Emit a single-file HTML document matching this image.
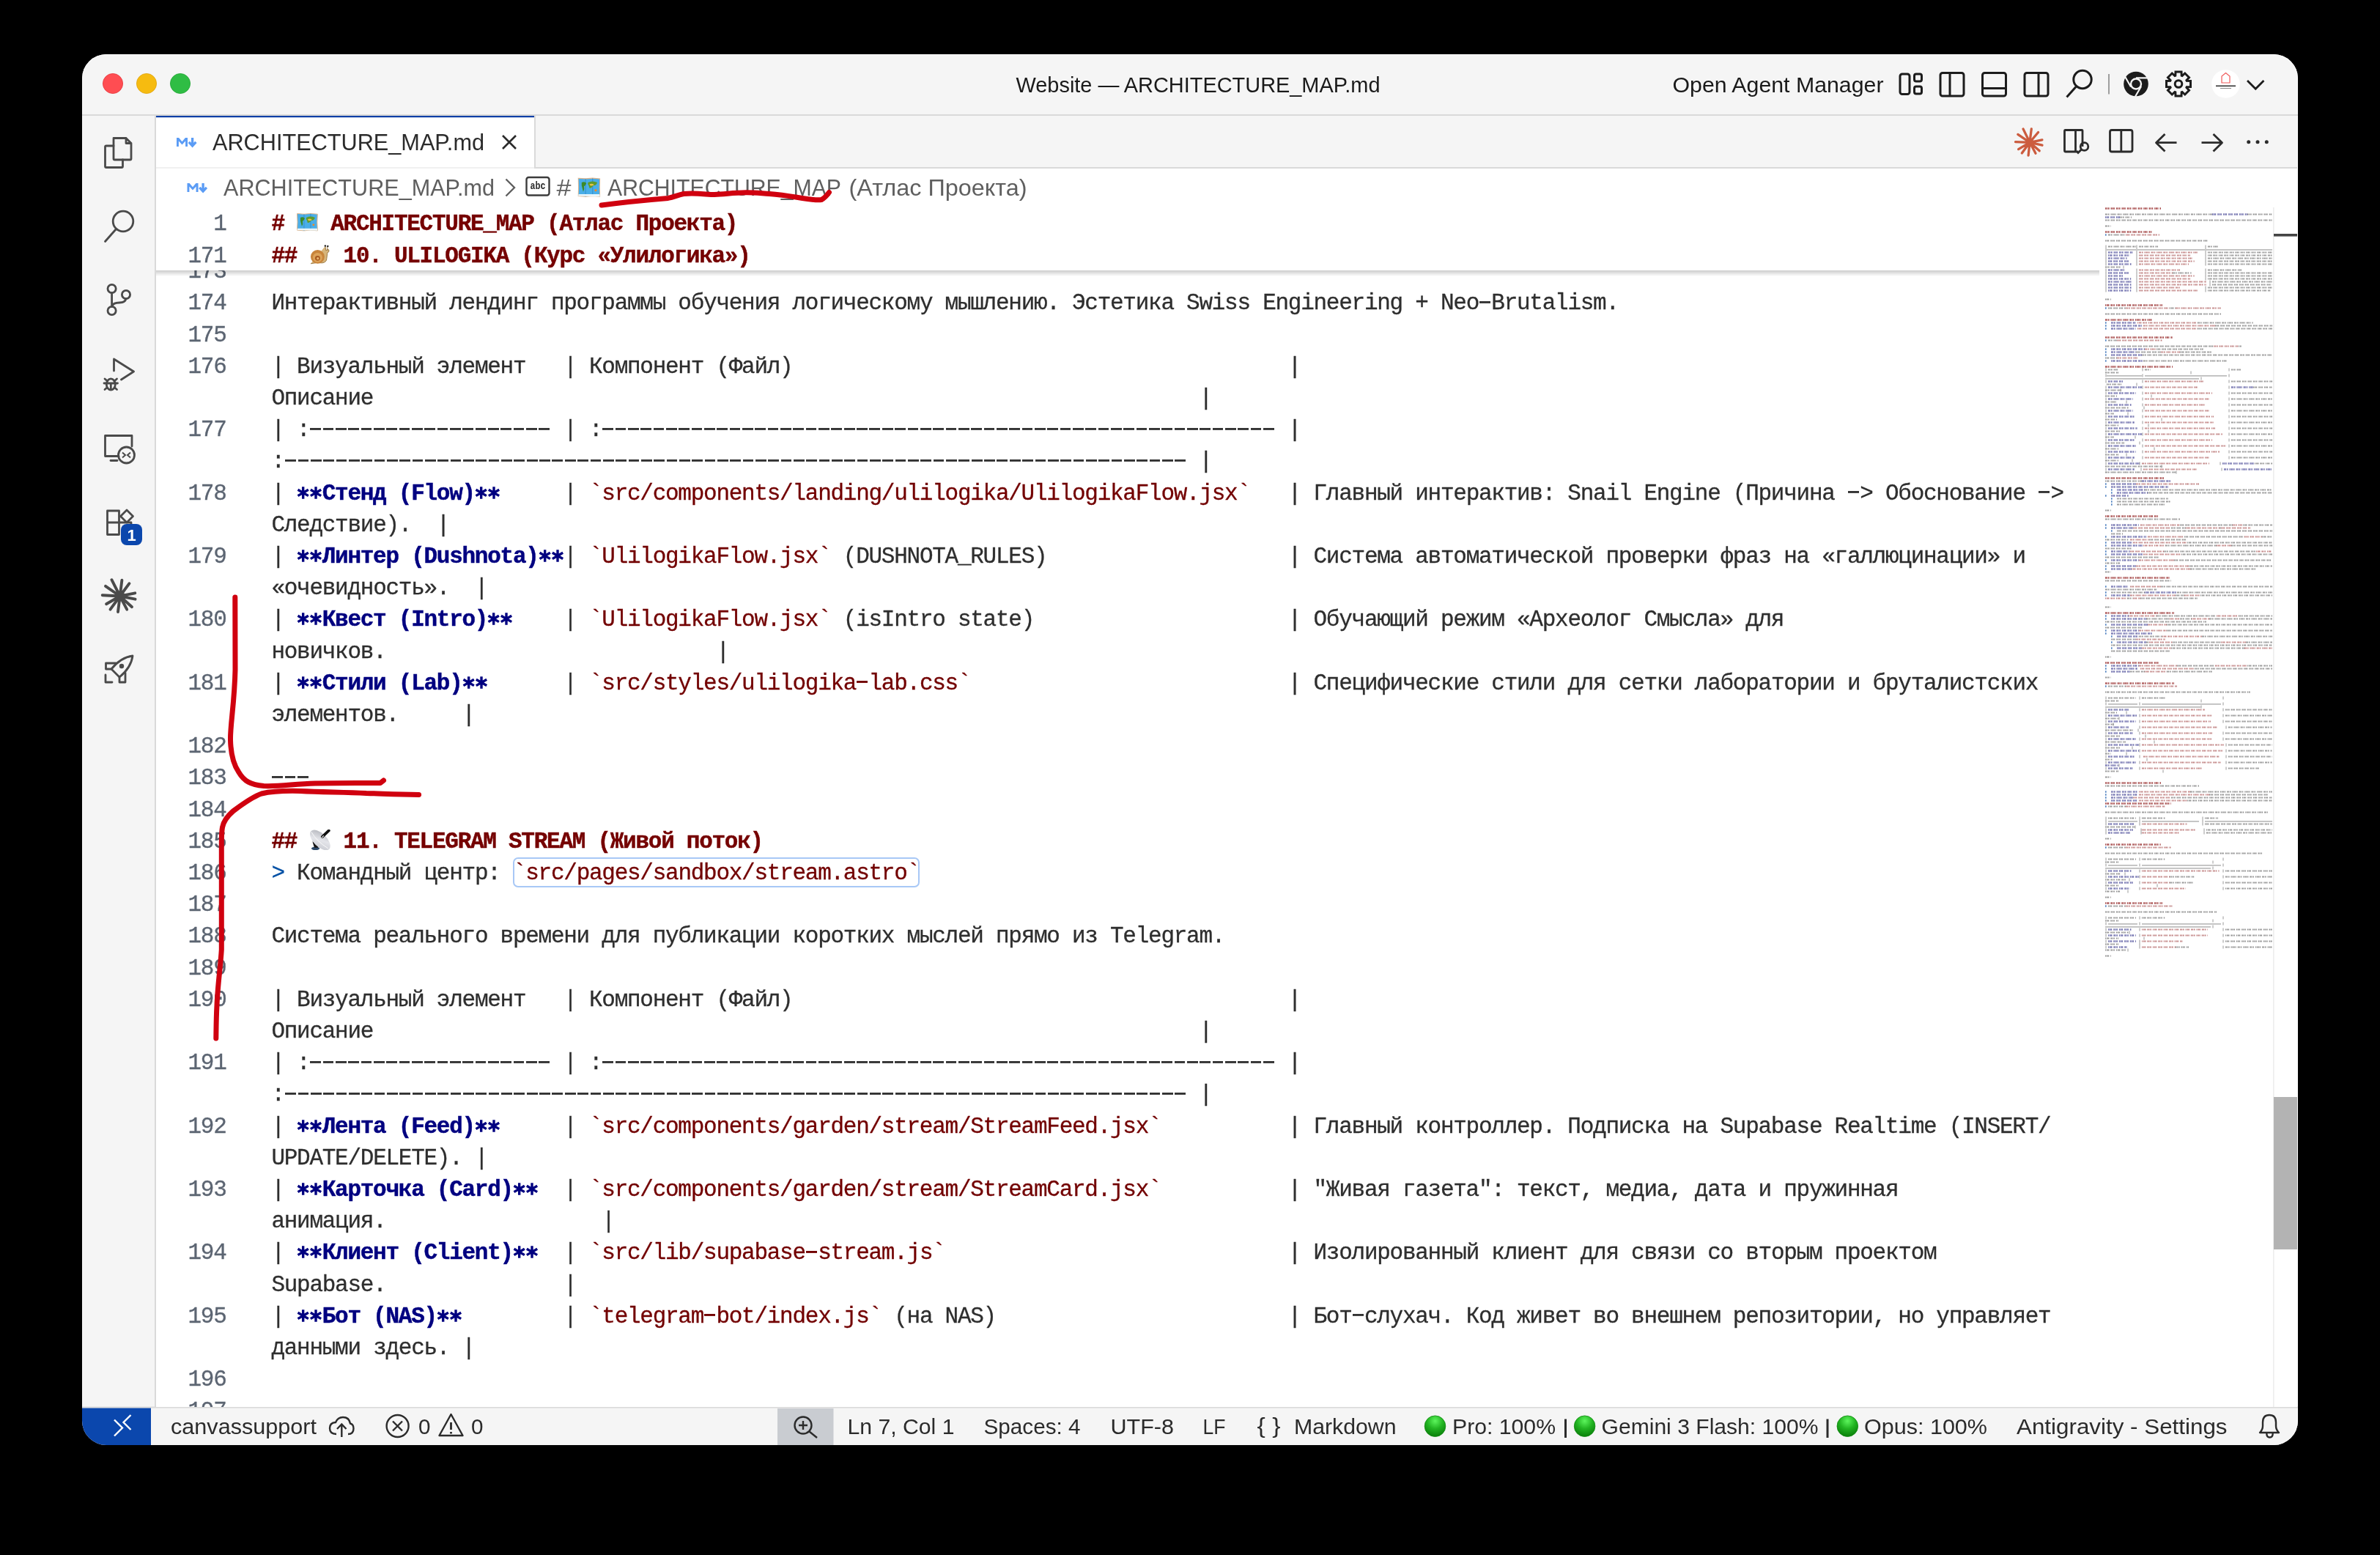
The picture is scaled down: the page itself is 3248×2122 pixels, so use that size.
<!DOCTYPE html>
<html><head><meta charset="utf-8"><style>
*{box-sizing:border-box;margin:0;padding:0}
html,body{width:3248px;height:2122px;overflow:hidden;background:#000}
.abs{position:absolute}
#win{position:absolute;left:112px;top:74px;width:3024px;height:1898px;border-radius:33px;overflow:hidden;background:#f8f8f8}
.sans{font-family:"Liberation Sans",sans-serif}
.mono{font-family:"Liberation Mono",monospace}
#page{position:absolute;left:-112px;top:-74px;width:3248px;height:2122px}
.ln{position:absolute;left:200px;width:108.5px;text-align:right;height:43.2px;line-height:43.2px;font-family:"Liberation Mono",monospace;font-size:31px;letter-spacing:-1.26px;color:#5c6572;white-space:pre;-webkit-text-stroke:0.3px currentColor}
.tx{position:absolute;left:370.4px;height:43.2px;line-height:43.2px;font-family:"Liberation Mono",monospace;font-size:31px;letter-spacing:-1.26px;color:#2e2e2e;white-space:pre;-webkit-text-stroke:0.3px currentColor}
.bd{color:#000080;font-weight:bold;-webkit-text-stroke:0.45px #000080}
.hd{color:#750000;font-weight:bold;-webkit-text-stroke:0.45px #750000}
.cd{color:#720000}
.qt{color:#0451a5}
.emo{display:inline-block;width:28.8px;height:43.2px;vertical-align:top;padding-top:5px}
.cbox{}
.dash{color:transparent;-webkit-text-stroke:0;background:repeating-linear-gradient(90deg,transparent 0 1.3px,#333 1.3px 16px,transparent 16px 17.3426px) 0 14.6px/100% 2.9px no-repeat}
.dc{background:repeating-linear-gradient(90deg,transparent 0 1.3px,#720000 1.3px 16px,transparent 16px 17.3426px) 0 14.6px/100% 2.9px no-repeat}
</style></head><body>
<svg width="0" height="0" style="position:absolute"><defs><radialGradient id="gg" cx="0.5" cy="0.25" r="0.75"><stop offset="0" stop-color="#5cf55c"/><stop offset="0.5" stop-color="#22b422"/><stop offset="1" stop-color="#0a7f0a"/></radialGradient></defs></svg>
<div id="win"><div id="page">
<svg class="abs" style="left:0;top:0;will-change:transform" width="3248" height="2122"><rect x="112" y="74" width="3024" height="82" fill="#f5f5f5"/>
<rect x="112" y="156" width="3024" height="2" fill="#d9d9d9"/>
<circle cx="154" cy="114" r="13.6" fill="#ff4d52" stroke="#e5343a" stroke-width="0.8"/>
<circle cx="200" cy="114" r="13.6" fill="#f6bb10" stroke="#dea20b" stroke-width="0.8"/>
<circle cx="246" cy="114" r="13.6" fill="#2fbd44" stroke="#1ea531" stroke-width="0.8"/>
<text x="1386.5" y="126.0" font-size="29.5" fill="#1a1a1a" font-weight="normal" text-anchor="start" font-family="Liberation Sans" textLength="497.0" lengthAdjust="spacingAndGlyphs">Website — ARCHITECTURE_MAP.md</text>
<text x="2282.5" y="126.0" font-size="29.5" fill="#1a1a1a" font-weight="normal" text-anchor="start" font-family="Liberation Sans" textLength="288.0" lengthAdjust="spacingAndGlyphs">Open Agent Manager</text>
<rect x="2593" y="101" width="13" height="27.5" rx="3" fill="none" stroke="#1c1c1c" stroke-width="3"/>
<rect x="2612.5" y="101" width="10" height="10" rx="2.5" fill="none" stroke="#1c1c1c" stroke-width="3"/>
<rect x="2612.5" y="118" width="10" height="10" rx="2.5" fill="none" stroke="#1c1c1c" stroke-width="3"/>
<rect x="2648" y="99.5" width="32" height="31.5" rx="3" fill="none" stroke="#1c1c1c" stroke-width="3"/>
<line x1="2661" y1="99.5" x2="2661" y2="131" fill="none" stroke="#1c1c1c" stroke-width="3"/>
<rect x="2705.5" y="99.5" width="32" height="31.5" rx="3" fill="none" stroke="#1c1c1c" stroke-width="3"/>
<line x1="2705.5" y1="120.5" x2="2737.5" y2="120.5" fill="none" stroke="#1c1c1c" stroke-width="3"/>
<rect x="2763" y="99.5" width="32" height="31.5" rx="3" fill="none" stroke="#1c1c1c" stroke-width="3"/>
<line x1="2782" y1="99.5" x2="2782" y2="131" fill="none" stroke="#1c1c1c" stroke-width="3"/>
<circle cx="2842" cy="108.5" r="12.2" fill="none" stroke="#1c1c1c" stroke-width="3"/>
<line x1="2833" y1="118.5" x2="2820.5" y2="132.5" fill="none" stroke="#1c1c1c" stroke-width="3"/>
<rect x="2877" y="101" width="2" height="27.5" fill="#9e9e9e"/>
<circle cx="2915" cy="114.5" r="16.8" fill="#1c1c1c"/>
<circle cx="2915" cy="114.5" r="8.2" fill="#f5f5f5"/>
<circle cx="2915" cy="114.5" r="5.8" fill="#1c1c1c"/>
<path d="M2915 106.3 L2930.5 106.3 M2908 118.5 L2900 104.5 M2922 118 L2914 131.8" stroke="#f5f5f5" stroke-width="2.2" fill="none"/>
<polygon points="2989.5,110.5 2989.5,118.5 2984.2,118.7 2983.9,119.5 2987.5,123.3 2981.8,129.0 2978.0,125.4 2977.2,125.7 2977.0,131.0 2969.0,131.0 2968.8,125.7 2968.0,125.4 2964.2,129.0 2958.5,123.3 2962.1,119.5 2961.8,118.7 2956.5,118.5 2956.5,110.5 2961.8,110.3 2962.1,109.5 2958.5,105.7 2964.2,100.0 2968.0,103.6 2968.8,103.3 2969.0,98.0 2977.0,98.0 2977.2,103.3 2978.0,103.6 2981.8,100.0 2987.5,105.7 2983.9,109.5 2984.2,110.3" fill="none" stroke="#1c1c1c" stroke-width="3" stroke-linejoin="miter"/>
<circle cx="2973" cy="114.5" r="4.8" fill="none" stroke="#1c1c1c" stroke-width="3"/>
<circle cx="3037.5" cy="114.5" r="19.3" fill="#ffffff"/>
<path d="M3032 113 L3032 104 L3037.5 99.5 L3043 104 L3043 113 Z" fill="none" stroke="#f05a5a" stroke-width="1.2"/>
<rect x="3024" y="116.5" width="27" height="1.6" fill="#333"/><rect x="3030" y="120" width="15" height="1" fill="#888"/>
<path d="M3067 110 L3078.2 121.2 L3089.4 110" fill="none" stroke="#1c1c1c" stroke-width="2.8"/>
<rect x="112" y="158" width="99" height="1763" fill="#f5f5f5"/>
<rect x="211" y="158" width="2" height="1763" fill="#d9d9d9"/>
<path d="M155 199 L145 199 Q143.5 199 143.5 200.5 L143.5 227 Q143.5 228.5 145 228.5 L166 228.5 Q167.5 228.5 167.5 227 L167.5 218" fill="none" stroke="#4a4a4a" stroke-width="2.8" stroke-linejoin="round" stroke-linecap="round"/>
<path d="M155 188.5 L172 188.5 L179 195.5 L179 216.5 Q179 218 177.5 218 L156.5 218 Q155 218 155 216.5 L155 190 Q155 188.5 156.5 188.5 Z M172 188.5 L172 195.5 L179 195.5" fill="none" stroke="#4a4a4a" stroke-width="2.8" stroke-linejoin="round" stroke-linecap="round"/>
<circle cx="168" cy="302" r="13.8" fill="none" stroke="#4a4a4a" stroke-width="2.8" stroke-linejoin="round" stroke-linecap="round"/>
<line x1="158.5" y1="312.5" x2="143.5" y2="329.5" fill="none" stroke="#4a4a4a" stroke-width="2.8" stroke-linejoin="round" stroke-linecap="round"/>
<circle cx="152.6" cy="394" r="5.6" fill="none" stroke="#4a4a4a" stroke-width="2.8" stroke-linejoin="round" stroke-linecap="round"/><circle cx="172" cy="402" r="5.6" fill="none" stroke="#4a4a4a" stroke-width="2.8" stroke-linejoin="round" stroke-linecap="round"/><circle cx="152.6" cy="424" r="5.6" fill="none" stroke="#4a4a4a" stroke-width="2.8" stroke-linejoin="round" stroke-linecap="round"/>
<path d="M152.6 399.6 L152.6 418.4 M172 407.6 Q171 413 163 413 Q154 413 153 418" fill="none" stroke="#4a4a4a" stroke-width="2.8" stroke-linejoin="round" stroke-linecap="round"/>
<path d="M155.5 506 L155.5 490 L182.5 507 L165.5 518" fill="none" stroke="#4a4a4a" stroke-width="2.8" stroke-linejoin="round" stroke-linecap="round"/>
<path d="M143 517 L146.5 520 M159.5 517 L156 520 M142 523 L160.5 523 M143 531.5 L146 529 M159.5 531.5 L156.5 529 M151.3 523 L151.3 531" fill="none" stroke="#4a4a4a" stroke-width="2.8" stroke-linejoin="round" stroke-linecap="round"/>
<ellipse cx="151.3" cy="524.5" rx="6" ry="7.6" fill="none" stroke="#4a4a4a" stroke-width="2.8" stroke-linejoin="round" stroke-linecap="round"/>
<path d="M162 622.5 L143.5 622.5 L143.5 594.5 L180 594.5 L180 609" fill="none" stroke="#4a4a4a" stroke-width="2.8" stroke-linejoin="round" stroke-linecap="round"/>
<line x1="151" y1="628.5" x2="160" y2="628.5" fill="none" stroke="#4a4a4a" stroke-width="2.8" stroke-linejoin="round" stroke-linecap="round"/>
<circle cx="172.5" cy="621" r="11" fill="none" stroke="#4a4a4a" stroke-width="2.8" stroke-linejoin="round" stroke-linecap="round"/>
<path d="M167 617.5 L171 621 L167 624.5 M178 617.5 L174 621 L178 624.5" fill="none" stroke="#4a4a4a" stroke-width="2"/>
<path d="M146.5 697 L162.5 697 L162.5 729.5 L146.5 729.5 Z M146.5 713 L179 713 M162.5 713 L179 713 L179 720" fill="none" stroke="#4a4a4a" stroke-width="2.8" stroke-linejoin="round" stroke-linecap="round"/>
<path d="M173 696 L181.5 704.5 L173 713 L164.5 704.5 Z" fill="none" stroke="#4a4a4a" stroke-width="2.8" stroke-linejoin="round" stroke-linecap="round"/>
<rect x="165" y="715" width="29" height="29" rx="8" fill="#0b47ad"/>
<text x="179.5" y="738.0" font-size="22.0" fill="#ffffff" font-weight="bold" text-anchor="middle" font-family="Liberation Sans">1</text>
<path d="M163.7 813.5 L152.4 791.2 M163.7 813.5 L166.4 791.7 M163.7 813.5 L176.5 796.2 M163.7 813.5 L184.3 809.3 M163.7 813.5 L184.6 817.7 M163.7 813.5 L180.0 828.2 M163.7 813.5 L173.2 831.7 M163.7 813.5 L161.0 835.1 M163.7 813.5 L150.5 831.7 M163.7 813.5 L145.1 824.2 M163.7 813.5 L139.7 812.2 M163.7 813.5 L144.0 799.8" fill="none" stroke="#4a4a4a" stroke-width="3.9" stroke-linecap="round"/>
<circle cx="163.7" cy="813.5" r="7" fill="#4a4a4a"/>
<path d="M181 895 Q165 897 152 913 L163 924 Q179 911 181 895 Z" fill="none" stroke="#4a4a4a" stroke-width="2.8" stroke-linejoin="round" stroke-linecap="round"/>
<path d="M152 913 L144.5 913 L144.5 905 L158 905 M163 924 L163 931 L171 931 L171 918" fill="none" stroke="#4a4a4a" stroke-width="2.8" stroke-linejoin="round" stroke-linecap="round"/>
<path d="M144 921 L144 931 L153 931" fill="none" stroke="#4a4a4a" stroke-width="2.8" stroke-linejoin="round" stroke-linecap="round"/>
<circle cx="166" cy="909" r="3.2" fill="#4a4a4a"/>
<rect x="213" y="158" width="2922" height="70" fill="#f5f5f5"/>
<rect x="213" y="228" width="2922" height="2" fill="#d9d9d9"/>
<rect x="213" y="158" width="516" height="72" fill="#ffffff"/>
<rect x="213" y="158" width="516" height="2.2" fill="#0b3fa6"/>
<rect x="213" y="228" width="516" height="2" fill="#f0f0f0"/>
<rect x="729" y="158" width="2" height="72" fill="#dadada"/>
<path d="M241.0 200.0 L241.0 188.0 L244.1 188.0 L248.5 193.3 L252.9 188.0 L256.0 188.0 L256.0 200.0 L253.1 200.0 L253.1 192.6 L248.5 197.6 L243.9 192.6 L243.9 200.0 Z" fill="#5b9cf5"/><path d="M262.6 188.0 L262.6 197.6 M257.8 193.8 L262.6 199.0 L267.4 193.8" stroke="#5b9cf5" stroke-width="3.3" fill="none"/>
<text x="290.0" y="205.0" font-size="30.5" fill="#2b2b2b" font-weight="normal" text-anchor="start" font-family="Liberation Sans" textLength="371.0" lengthAdjust="spacingAndGlyphs">ARCHITECTURE_MAP.md</text>
<path d="M686 185 L704 203 M704 185 L686 203" stroke="#2b2b2b" stroke-width="2.6" fill="none"/>
<path d="M2770 194.3 L2761.0 175.9 M2770 194.3 L2772.3 175.9 M2770 194.3 L2781.6 180.5 M2770 194.3 L2786.9 190.8 M2770 194.3 L2787.0 198.2 M2770 194.3 L2783.2 205.8 M2770 194.3 L2778.0 209.3 M2770 194.3 L2768.1 212.1 M2770 194.3 L2759.3 209.0 M2770 194.3 L2754.6 203.6 M2770 194.3 L2750.5 193.6 M2770 194.3 L2753.8 183.4" fill="none" stroke="#cc5c3f" stroke-width="3.3" stroke-linecap="round"/>
<circle cx="2770" cy="194.3" r="5.5" fill="#cc5c3f"/>
<path d="M2842 200 L2842 178 Q2842 177.5 2841 177.5 L2818.5 177.5 Q2817.5 177.5 2817.5 179 L2817.5 205.5 Q2817.5 207 2819 207 L2836 207 M2832.5 177.5 L2832.5 207" fill="none" stroke="#2b2b2b" stroke-width="2.8" stroke-linejoin="round"/>
<circle cx="2844.5" cy="200" r="5.3" fill="none" stroke="#2b2b2b" stroke-width="2.8" stroke-linejoin="round"/><line x1="2840.5" y1="204" x2="2835" y2="209.5" fill="none" stroke="#2b2b2b" stroke-width="2.8" stroke-linejoin="round"/>
<rect x="2879.5" y="177.5" width="30.5" height="29.5" rx="2.5" fill="none" stroke="#2b2b2b" stroke-width="2.8" stroke-linejoin="round"/><line x1="2894.8" y1="177.5" x2="2894.8" y2="207" fill="none" stroke="#2b2b2b" stroke-width="2.8" stroke-linejoin="round"/>
<path d="M2970.5 194.7 L2942.5 194.7 M2954.5 183 L2942.5 194.7 L2954.5 206.4" fill="none" stroke="#2b2b2b" stroke-width="2.8" stroke-linejoin="round"/>
<path d="M3004.5 194.7 L3032.5 194.7 M3020.5 183 L3032.5 194.7 L3020.5 206.4" fill="none" stroke="#2b2b2b" stroke-width="2.8" stroke-linejoin="round"/>
<circle cx="3068.7" cy="193.8" r="2.5" fill="#2b2b2b"/><circle cx="3081" cy="193.8" r="2.5" fill="#2b2b2b"/><circle cx="3093.3" cy="193.8" r="2.5" fill="#2b2b2b"/>

<rect x="112" y="1921" width="3024" height="51" fill="#f5f5f5"/>
<rect x="112" y="1919.5" width="3024" height="2" fill="#d9d9d9"/>
<rect x="112" y="1921.5" width="94" height="51" fill="#0b47ad"/>
<path d="M156 1959.5 L167 1948.5 L156 1937.5 M178.5 1931 L168.5 1941 L178.5 1951" fill="none" stroke="#ffffff" stroke-width="2.4"/>
<text x="233.0" y="1957.0" font-size="29.5" fill="#2b2b2b" font-weight="normal" text-anchor="start" font-family="Liberation Sans" textLength="199.0" lengthAdjust="spacingAndGlyphs">canvassupport</text>
<path d="M459 1957 Q450 1957 450 1949 Q450 1941.5 458 1941 Q461 1934 468 1934 Q476.5 1934 478 1942.5 Q482.5 1943.5 482.5 1949.5 Q482.5 1957 475 1957 M466.3 1961 L466.3 1944 M460 1950 L466.3 1943.5 L472.5 1950" fill="none" stroke="#2b2b2b" stroke-width="2.4"/>
<circle cx="542.6" cy="1946" r="15" fill="none" stroke="#2b2b2b" stroke-width="2.4"/>
<path d="M536 1939.5 L549 1952.5 M549 1939.5 L536 1952.5" stroke="#2b2b2b" stroke-width="2.4"/>
<text x="571.0" y="1957.0" font-size="29.5" fill="#2b2b2b" font-weight="normal" text-anchor="start" font-family="Liberation Sans" textLength="16.5" lengthAdjust="spacingAndGlyphs">0</text>
<path d="M615.5 1930 L631.5 1959 L599.5 1959 Z" fill="none" stroke="#2b2b2b" stroke-width="2.4" stroke-linejoin="round"/>
<path d="M615.5 1941 L615.5 1951 M615.5 1954 L615.5 1956.5" stroke="#2b2b2b" stroke-width="2.8"/>
<text x="643.0" y="1957.0" font-size="29.5" fill="#2b2b2b" font-weight="normal" text-anchor="start" font-family="Liberation Sans" textLength="16.5" lengthAdjust="spacingAndGlyphs">0</text>
<rect x="1061" y="1922" width="76.5" height="50" fill="#c9ccd1"/>
<circle cx="1096" cy="1945" r="11.5" fill="none" stroke="#2b2b2b" stroke-width="2.4"/><path d="M1096 1939 L1096 1951 M1090 1945 L1102 1945 M1104.5 1953.5 L1115 1962" stroke="#2b2b2b" stroke-width="2.4" fill="none"/>
<text x="1156.5" y="1957.0" font-size="29.5" fill="#2b2b2b" font-weight="normal" text-anchor="start" font-family="Liberation Sans" textLength="146.0" lengthAdjust="spacingAndGlyphs">Ln 7, Col 1</text>
<text x="1342.5" y="1957.0" font-size="29.5" fill="#2b2b2b" font-weight="normal" text-anchor="start" font-family="Liberation Sans" textLength="132.0" lengthAdjust="spacingAndGlyphs">Spaces: 4</text>
<text x="1515.5" y="1957.0" font-size="29.5" fill="#2b2b2b" font-weight="normal" text-anchor="start" font-family="Liberation Sans" textLength="86.5" lengthAdjust="spacingAndGlyphs">UTF-8</text>
<text x="1641.5" y="1957.0" font-size="29.5" fill="#2b2b2b" font-weight="normal" text-anchor="start" font-family="Liberation Sans" textLength="31.0" lengthAdjust="spacingAndGlyphs">LF</text>
<text x="1715.5" y="1956.0" font-size="29.5" fill="#2b2b2b" font-weight="normal" text-anchor="start" font-family="Liberation Sans" textLength="32.0" lengthAdjust="spacingAndGlyphs">{ }</text>
<text x="1766.0" y="1957.0" font-size="29.5" fill="#2b2b2b" font-weight="normal" text-anchor="start" font-family="Liberation Sans" textLength="139.5" lengthAdjust="spacingAndGlyphs">Markdown</text>
<circle cx="1958.5" cy="1946.2" r="14.3" fill="url(#gg)" stroke="#0f8a0f" stroke-width="0.8"/>
<text x="1982.0" y="1957.0" font-size="29.5" fill="#2b2b2b" font-weight="normal" text-anchor="start" font-family="Liberation Sans" textLength="141.0" lengthAdjust="spacingAndGlyphs">Pro: 100%</text>
<rect x="2135" y="1936.5" width="3" height="25.5" fill="#2b2b2b"/>
<circle cx="2162.6" cy="1946.2" r="14.3" fill="url(#gg)" stroke="#0f8a0f" stroke-width="0.8"/>
<text x="2185.5" y="1957.0" font-size="29.5" fill="#2b2b2b" font-weight="normal" text-anchor="start" font-family="Liberation Sans" textLength="296.0" lengthAdjust="spacingAndGlyphs">Gemini 3 Flash: 100%</text>
<rect x="2492.5" y="1936.5" width="3" height="25.5" fill="#2b2b2b"/>
<circle cx="2521.3" cy="1946.2" r="14.3" fill="url(#gg)" stroke="#0f8a0f" stroke-width="0.8"/>
<text x="2544.0" y="1957.0" font-size="29.5" fill="#2b2b2b" font-weight="normal" text-anchor="start" font-family="Liberation Sans" textLength="168.0" lengthAdjust="spacingAndGlyphs">Opus: 100%</text>
<text x="2752.0" y="1957.0" font-size="29.5" fill="#2b2b2b" font-weight="normal" text-anchor="start" font-family="Liberation Sans" textLength="287.5" lengthAdjust="spacingAndGlyphs">Antigravity - Settings</text>
<path d="M3084 1955 L3110 1955 Q3106 1951 3106 1946 L3106 1941 Q3106 1931 3097 1931 Q3088 1931 3088 1941 L3088 1946 Q3088 1951 3084 1955 Z M3093.3 1956 Q3093.3 1961.5 3097.5 1961.5 Q3101.7 1961.5 3101.7 1956" fill="none" stroke="#2b2b2b" stroke-width="2.4" stroke-linejoin="round"/></svg>
<div class="abs" style="left:213px;top:230px;width:2922px;height:1689.5px;background:#fff"></div>
<div class="abs" style="left:0;top:0;width:3248px;height:2122px;clip-path:inset(230px 0 202.5px 0);will-change:transform"><div class="ln" style="top:349.10px">173</div>
<div class="ln" style="top:392.30px">174</div>
<div class="tx" style="top:392.30px">Интерактивный лендинг программы обучения логическому мышлению. Эстетика Swiss Engineering + Neo<span class="dash">-</span>Brutalism.</div>
<div class="ln" style="top:435.50px">175</div>
<div class="ln" style="top:478.70px">176</div>
<div class="tx" style="top:478.70px">| Визуальный элемент   | Компонент (Файл)                                       |</div>
<div class="tx" style="top:521.90px">Описание                                                                 |</div>
<div class="ln" style="top:565.10px">177</div>
<div class="tx" style="top:565.10px">| :<span class="dash">-------------------</span> | :<span class="dash">-----------------------------------------------------</span> |</div>
<div class="tx" style="top:608.30px">:<span class="dash">-----------------------------------------------------------------------</span> |</div>
<div class="ln" style="top:651.50px">178</div>
<div class="tx" style="top:651.50px">| <b class="bd"><svg width="34.685" height="43.2" style="vertical-align:top;display:inline-block"><path d="M8.67 12.15 V28.75 M1.48 16.30 L15.86 24.60 M1.48 24.60 L15.86 16.30 M26.01 12.15 V28.75 M18.82 16.30 L33.20 24.60 M18.82 24.60 L33.20 16.30 " stroke="#000080" stroke-width="3.4" fill="none"/></svg>Стенд (Flow)<svg width="34.685" height="43.2" style="vertical-align:top;display:inline-block"><path d="M8.67 12.15 V28.75 M1.48 16.30 L15.86 24.60 M1.48 24.60 L15.86 16.30 M26.01 12.15 V28.75 M18.82 16.30 L33.20 24.60 M18.82 24.60 L33.20 16.30 " stroke="#000080" stroke-width="3.4" fill="none"/></svg></b>     | <span class="cd">`src/components/landing/ulilogika/UlilogikaFlow.jsx`</span>   | Главный интерактив: Snail Engine (Причина <span class="dash">-</span>&gt; Обоснование <span class="dash">-</span>&gt;</div>
<div class="tx" style="top:694.70px">Следствие).  |</div>
<div class="ln" style="top:737.90px">179</div>
<div class="tx" style="top:737.90px">| <b class="bd"><svg width="34.685" height="43.2" style="vertical-align:top;display:inline-block"><path d="M8.67 12.15 V28.75 M1.48 16.30 L15.86 24.60 M1.48 24.60 L15.86 16.30 M26.01 12.15 V28.75 M18.82 16.30 L33.20 24.60 M18.82 24.60 L33.20 16.30 " stroke="#000080" stroke-width="3.4" fill="none"/></svg>Линтер (Dushnota)<svg width="34.685" height="43.2" style="vertical-align:top;display:inline-block"><path d="M8.67 12.15 V28.75 M1.48 16.30 L15.86 24.60 M1.48 24.60 L15.86 16.30 M26.01 12.15 V28.75 M18.82 16.30 L33.20 24.60 M18.82 24.60 L33.20 16.30 " stroke="#000080" stroke-width="3.4" fill="none"/></svg></b>| <span class="cd">`UlilogikaFlow.jsx`</span> (DUSHNOTA_RULES)                   | Система автоматической проверки фраз на «галлюцинации» и</div>
<div class="tx" style="top:781.10px">«очевидность».  |</div>
<div class="ln" style="top:824.30px">180</div>
<div class="tx" style="top:824.30px">| <b class="bd"><svg width="34.685" height="43.2" style="vertical-align:top;display:inline-block"><path d="M8.67 12.15 V28.75 M1.48 16.30 L15.86 24.60 M1.48 24.60 L15.86 16.30 M26.01 12.15 V28.75 M18.82 16.30 L33.20 24.60 M18.82 24.60 L33.20 16.30 " stroke="#000080" stroke-width="3.4" fill="none"/></svg>Квест (Intro)<svg width="34.685" height="43.2" style="vertical-align:top;display:inline-block"><path d="M8.67 12.15 V28.75 M1.48 16.30 L15.86 24.60 M1.48 24.60 L15.86 16.30 M26.01 12.15 V28.75 M18.82 16.30 L33.20 24.60 M18.82 24.60 L33.20 16.30 " stroke="#000080" stroke-width="3.4" fill="none"/></svg></b>    | <span class="cd">`UlilogikaFlow.jsx`</span> (isIntro state)                    | Обучающий режим «Археолог Смысла» для</div>
<div class="tx" style="top:867.50px">новичков.                          |</div>
<div class="ln" style="top:910.70px">181</div>
<div class="tx" style="top:910.70px">| <b class="bd"><svg width="34.685" height="43.2" style="vertical-align:top;display:inline-block"><path d="M8.67 12.15 V28.75 M1.48 16.30 L15.86 24.60 M1.48 24.60 L15.86 16.30 M26.01 12.15 V28.75 M18.82 16.30 L33.20 24.60 M18.82 24.60 L33.20 16.30 " stroke="#000080" stroke-width="3.4" fill="none"/></svg>Стили (Lab)<svg width="34.685" height="43.2" style="vertical-align:top;display:inline-block"><path d="M8.67 12.15 V28.75 M1.48 16.30 L15.86 24.60 M1.48 24.60 L15.86 16.30 M26.01 12.15 V28.75 M18.82 16.30 L33.20 24.60 M18.82 24.60 L33.20 16.30 " stroke="#000080" stroke-width="3.4" fill="none"/></svg></b>      | <span class="cd">`src/styles/ulilogika<span class="dash dc">-</span>lab.css`</span>                         | Специфические стили для сетки лаборатории и бруталистских</div>
<div class="tx" style="top:953.90px">элементов.     |</div>
<div class="ln" style="top:997.10px">182</div>
<div class="ln" style="top:1040.30px">183</div>
<div class="tx" style="top:1040.30px"><span class="dash">---</span></div>
<div class="ln" style="top:1083.50px">184</div>
<div class="ln" style="top:1126.70px">185</div>
<div class="tx" style="top:1126.70px"><b class="hd">## </b><span class="emo"><svg width="28.8" height="28.8" viewBox="0 0 29 29" style="vertical-align:top"><defs><linearGradient id="dg" x1="0" y1="0" x2="1" y2="1"><stop offset="0" stop-color="#a9abb2"/><stop offset=".5" stop-color="#e4e5ea"/><stop offset="1" stop-color="#c3c5cc"/></linearGradient></defs><ellipse cx="8.6" cy="26" rx="5.6" ry="2.4" fill="#2c4a6b"/><path d="M4.5 16.5 L11 15.5 L13 22 L12 25 L7 25 Z" fill="#161616"/><ellipse cx="15" cy="14.5" rx="17.5" ry="9" transform="rotate(45 15 14.5)" fill="url(#dg)"/><path d="M3 3.5 Q10 16 26 26" stroke="#fafafa" stroke-width="1" fill="none"/><path d="M18 10 L27 1.5" stroke="#111" stroke-width="3.8" stroke-linecap="round"/><path d="M17 11.5 L20 8.5" stroke="#eee" stroke-width="1.2"/></svg></span><b class="hd"> 11. TELEGRAM STREAM (Живой поток)</b></div>
<div class="ln" style="top:1169.90px">186</div>
<div class="tx" style="top:1169.90px"><span class="qt">&gt;</span> Командный центр: <span class="cd cbox">`src/pages/sandbox/stream.astro`</span></div>
<div class="ln" style="top:1213.10px">187</div>
<div class="ln" style="top:1256.30px">188</div>
<div class="tx" style="top:1256.30px">Система реального времени для публикации коротких мыслей прямо из Telegram.</div>
<div class="ln" style="top:1299.50px">189</div>
<div class="ln" style="top:1342.70px">190</div>
<div class="tx" style="top:1342.70px">| Визуальный элемент   | Компонент (Файл)                                       |</div>
<div class="tx" style="top:1385.90px">Описание                                                                 |</div>
<div class="ln" style="top:1429.10px">191</div>
<div class="tx" style="top:1429.10px">| :<span class="dash">-------------------</span> | :<span class="dash">-----------------------------------------------------</span> |</div>
<div class="tx" style="top:1472.30px">:<span class="dash">-----------------------------------------------------------------------</span> |</div>
<div class="ln" style="top:1515.50px">192</div>
<div class="tx" style="top:1515.50px">| <b class="bd"><svg width="34.685" height="43.2" style="vertical-align:top;display:inline-block"><path d="M8.67 12.15 V28.75 M1.48 16.30 L15.86 24.60 M1.48 24.60 L15.86 16.30 M26.01 12.15 V28.75 M18.82 16.30 L33.20 24.60 M18.82 24.60 L33.20 16.30 " stroke="#000080" stroke-width="3.4" fill="none"/></svg>Лента (Feed)<svg width="34.685" height="43.2" style="vertical-align:top;display:inline-block"><path d="M8.67 12.15 V28.75 M1.48 16.30 L15.86 24.60 M1.48 24.60 L15.86 16.30 M26.01 12.15 V28.75 M18.82 16.30 L33.20 24.60 M18.82 24.60 L33.20 16.30 " stroke="#000080" stroke-width="3.4" fill="none"/></svg></b>     | <span class="cd">`src/components/garden/stream/StreamFeed.jsx`</span>          | Главный контроллер. Подписка на Supabase Realtime (INSERT/</div>
<div class="tx" style="top:1558.70px">UPDATE/DELETE). |</div>
<div class="ln" style="top:1601.90px">193</div>
<div class="tx" style="top:1601.90px">| <b class="bd"><svg width="34.685" height="43.2" style="vertical-align:top;display:inline-block"><path d="M8.67 12.15 V28.75 M1.48 16.30 L15.86 24.60 M1.48 24.60 L15.86 16.30 M26.01 12.15 V28.75 M18.82 16.30 L33.20 24.60 M18.82 24.60 L33.20 16.30 " stroke="#000080" stroke-width="3.4" fill="none"/></svg>Карточка (Card)<svg width="34.685" height="43.2" style="vertical-align:top;display:inline-block"><path d="M8.67 12.15 V28.75 M1.48 16.30 L15.86 24.60 M1.48 24.60 L15.86 16.30 M26.01 12.15 V28.75 M18.82 16.30 L33.20 24.60 M18.82 24.60 L33.20 16.30 " stroke="#000080" stroke-width="3.4" fill="none"/></svg></b>  | <span class="cd">`src/components/garden/stream/StreamCard.jsx`</span>          | "Живая газета": текст, медиа, дата и пружинная</div>
<div class="tx" style="top:1645.10px">анимация.                 |</div>
<div class="ln" style="top:1688.30px">194</div>
<div class="tx" style="top:1688.30px">| <b class="bd"><svg width="34.685" height="43.2" style="vertical-align:top;display:inline-block"><path d="M8.67 12.15 V28.75 M1.48 16.30 L15.86 24.60 M1.48 24.60 L15.86 16.30 M26.01 12.15 V28.75 M18.82 16.30 L33.20 24.60 M18.82 24.60 L33.20 16.30 " stroke="#000080" stroke-width="3.4" fill="none"/></svg>Клиент (Client)<svg width="34.685" height="43.2" style="vertical-align:top;display:inline-block"><path d="M8.67 12.15 V28.75 M1.48 16.30 L15.86 24.60 M1.48 24.60 L15.86 16.30 M26.01 12.15 V28.75 M18.82 16.30 L33.20 24.60 M18.82 24.60 L33.20 16.30 " stroke="#000080" stroke-width="3.4" fill="none"/></svg></b>  | <span class="cd">`src/lib/supabase<span class="dash dc">-</span>stream.js`</span>                           | Изолированный клиент для связи со вторым проектом</div>
<div class="tx" style="top:1731.50px">Supabase.              |</div>
<div class="ln" style="top:1774.70px">195</div>
<div class="tx" style="top:1774.70px">| <b class="bd"><svg width="34.685" height="43.2" style="vertical-align:top;display:inline-block"><path d="M8.67 12.15 V28.75 M1.48 16.30 L15.86 24.60 M1.48 24.60 L15.86 16.30 M26.01 12.15 V28.75 M18.82 16.30 L33.20 24.60 M18.82 24.60 L33.20 16.30 " stroke="#000080" stroke-width="3.4" fill="none"/></svg>Бот (NAS)<svg width="34.685" height="43.2" style="vertical-align:top;display:inline-block"><path d="M8.67 12.15 V28.75 M1.48 16.30 L15.86 24.60 M1.48 24.60 L15.86 16.30 M26.01 12.15 V28.75 M18.82 16.30 L33.20 24.60 M18.82 24.60 L33.20 16.30 " stroke="#000080" stroke-width="3.4" fill="none"/></svg></b>        | <span class="cd">`telegram<span class="dash dc">-</span>bot/index.js`</span> (на NAS)                       | Бот<span class="dash">-</span>слухач. Код живет во внешнем репозитории, но управляет</div>
<div class="tx" style="top:1817.90px">данными здесь. |</div>
<div class="ln" style="top:1861.10px">196</div>
<div class="ln" style="top:1904.30px">197</div>
<div class="abs" style="left:700px;top:1169.60px;width:554.5px;height:41px;border:2px solid #a8c8f6;border-radius:7px"></div></div>
<div class="abs" style="left:213px;top:230px;width:2652px;height:138.5px;background:#fff"></div><div class="abs" style="left:213px;top:368.5px;width:2652px;height:8px;background:linear-gradient(rgba(0,0,0,.2),rgba(0,0,0,0))"></div>
<svg class="abs" style="left:0;top:0;will-change:transform" width="3248" height="2122">
<path d="M255.5 262.0 L255.5 250.0 L258.6 250.0 L263.0 255.3 L267.4 250.0 L270.5 250.0 L270.5 262.0 L267.6 262.0 L267.6 254.6 L263.0 259.6 L258.4 254.6 L258.4 262.0 Z" fill="#5b9cf5"/><path d="M277.1 250.0 L277.1 259.6 M272.3 255.8 L277.1 261.0 L281.9 255.8" stroke="#5b9cf5" stroke-width="3.3" fill="none"/>
<text x="305.0" y="266.6" font-size="30.5" fill="#5f5f5f" font-weight="normal" text-anchor="start" font-family="Liberation Sans" textLength="370.0" lengthAdjust="spacingAndGlyphs">ARCHITECTURE_MAP.md</text>
<path d="M690.5 244.5 L702 256 L690.5 267.5" fill="none" stroke="#5f5f5f" stroke-width="2.4"/>
<rect x="718.5" y="242" width="31" height="24.5" rx="3" fill="none" stroke="#3c3c3c" stroke-width="2.4"/>
<text x="723.5" y="258.0" font-size="14.5" fill="#2b2b2b" font-weight="bold" text-anchor="start" font-family="Liberation Mono" textLength="21.0" lengthAdjust="spacingAndGlyphs">abc</text>
<text x="759.5" y="266.6" font-size="30.5" fill="#5f5f5f" font-weight="normal" text-anchor="start" font-family="Liberation Sans" textLength="20.0" lengthAdjust="spacingAndGlyphs">#</text>
<g transform="translate(788.5,240.5) scale(1.07)"><svg width="28.8" height="28.8" viewBox="0 0 29 29"><path d="M0.5 2.5 L10 3.2 L19 2.5 L28.5 3.2 L28 14 L28.5 26 L19 25.3 L10 26 L0.5 25.3 L1 14 Z" fill="#4aaee8" stroke="#e0b48a" stroke-width="1"/><path d="M10 3.2 L10 26 M19 2.5 L19 25.3" stroke="#2f86c4" stroke-width="1.2" opacity=".6"/><path d="M5 8 Q9 6 11 9 Q10 12 8 13 Q9 17 7 20 Q6 16 5 12 Z" fill="#3c8a2a"/><path d="M13 8 Q19 5 25 8 Q24 12 20 12 Q17 16 15 15 Q14 11 13 10 Z" fill="#5f9a2c"/><path d="M15 10 Q19 9 21 11 Q18 13 16 12Z" fill="#e8c24a"/><circle cx="23" cy="18" r="1.5" fill="#f08a24"/><path d="M1 23 L28 23 L28.5 26 L0.5 25.3Z" fill="#eaf6fb"/></svg></g>
<text x="829.0" y="266.6" font-size="30.5" fill="#5f5f5f" font-weight="normal" text-anchor="start" font-family="Liberation Sans" textLength="319.0" lengthAdjust="spacingAndGlyphs">ARCHITECTURE_MAP</text>
<text x="1158.5" y="266.6" font-size="30.5" fill="#5f5f5f" font-weight="normal" text-anchor="start" font-family="Liberation Sans" textLength="243.0" lengthAdjust="spacingAndGlyphs">(Атлас Проекта)</text>
</svg>
<div class="abs" style="left:0;top:0;width:3248px;height:2122px;will-change:transform"><div class="ln" style="top:284.40px">1</div>
<div class="tx" style="top:284.40px"><b class="hd"># </b><span class="emo"><svg width="28.8" height="28.8" viewBox="0 0 29 29" style="vertical-align:top"><path d="M0.5 2.5 L10 3.2 L19 2.5 L28.5 3.2 L28 14 L28.5 26 L19 25.3 L10 26 L0.5 25.3 L1 14 Z" fill="#4aaee8" stroke="#e0b48a" stroke-width="1"/><path d="M10 3.2 L10 26 M19 2.5 L19 25.3" stroke="#2f86c4" stroke-width="1.2" opacity=".6"/><path d="M5 8 Q9 6 11 9 Q10 12 8 13 Q9 17 7 20 Q6 16 5 12 Z" fill="#3c8a2a"/><path d="M13 8 Q19 5 25 8 Q24 12 20 12 Q17 16 15 15 Q14 11 13 10 Z" fill="#5f9a2c"/><path d="M15 10 Q19 9 21 11 Q18 13 16 12Z" fill="#e8c24a"/><circle cx="23" cy="18" r="1.5" fill="#f08a24"/><path d="M1 23 L28 23 L28.5 26 L0.5 25.3Z" fill="#eaf6fb"/></svg></span><b class="hd"> ARCHITECTURE_MAP (Атлас Проекта)</b></div>
<div class="ln" style="top:327.60px">171</div>
<div class="tx" style="top:327.60px"><b class="hd">## </b><span class="emo"><svg width="28.8" height="28.8" viewBox="0 0 29 29" style="vertical-align:top"><path d="M2 27 Q10 25 18 26 Q24 25 24 20 L25 12 Q28 11 27 8 Q25 6 23 9 L22 3 M25 9 L25 3" fill="#d7b57a" stroke="#9c7a45" stroke-width="1"/><circle cx="22" cy="2.5" r="1.2" fill="#222"/><circle cx="25.5" cy="3" r="1.2" fill="#222"/><circle cx="11.5" cy="17.5" r="9.5" fill="#c8843a"/><circle cx="11.5" cy="18.5" r="6.5" fill="#dca35a"/><circle cx="11.5" cy="19.5" r="3.5" fill="#a85a20"/><circle cx="11.8" cy="19.8" r="1.6" fill="#e9b46a"/></svg></span><b class="hd"> 10. ULILOGIKA (Курс «Улилогика»)</b></div></div>
<svg class="abs" style="left:0;top:0;will-change:transform" width="3248" height="2122"><line x1="2873.0" y1="284.5" x2="2949.0" y2="284.5" stroke="#8a1010" stroke-opacity="0.75" stroke-width="2.4" stroke-dasharray="1.5 .5 1.2 .8 1.6 2 1.4 .6 1.8 .4 1.1 2"/>
<line x1="2873.0" y1="292.5" x2="3019.0" y2="292.5" stroke="#333333" stroke-opacity="0.55" stroke-width="2.2" stroke-dasharray="1.7 .3 1.1 .9 1.5 2 1.3 .7 1.6 .4 1.4 .6 1.2 2"/>
<line x1="3019.0" y1="292.5" x2="3067.0" y2="292.5" stroke="#15157a" stroke-opacity="0.60" stroke-width="2.4" stroke-dasharray="1.4 .6 1.6 .4 1.2 2 1.5 .5 1.3 .7 1.7 2"/>
<line x1="3067.0" y1="292.5" x2="3101.0" y2="292.5" stroke="#333333" stroke-opacity="0.55" stroke-width="2.2" stroke-dasharray="1.5 .5 1.2 .8 1.6 2 1.4 .6 1.8 .4 1.1 2"/>
<line x1="2873.0" y1="296.5" x2="2893.0" y2="296.5" stroke="#15157a" stroke-opacity="0.60" stroke-width="2.4" stroke-dasharray="1.4 .6 1.6 .4 1.2 2 1.5 .5 1.3 .7 1.7 2"/>
<line x1="2893.0" y1="296.5" x2="2909.0" y2="296.5" stroke="#333333" stroke-opacity="0.55" stroke-width="2.2" stroke-dasharray="1.5 .5 1.2 .8 1.6 2 1.4 .6 1.8 .4 1.1 2"/>
<line x1="2873.0" y1="300.5" x2="3101.0" y2="300.5" stroke="#333333" stroke-opacity="0.55" stroke-width="2.2" stroke-dasharray="1.5 .5 1.2 .8 1.6 2 1.4 .6 1.8 .4 1.1 2"/>
<line x1="2873.0" y1="308.5" x2="2881.0" y2="308.5" stroke="#333333" stroke-opacity="0.55" stroke-width="2.2" stroke-dasharray="1.7 .3 1.1 .9 1.5 2 1.3 .7 1.6 .4 1.4 .6 1.2 2"/>
<line x1="2873.0" y1="316.5" x2="2937.0" y2="316.5" stroke="#8a1010" stroke-opacity="0.75" stroke-width="2.4" stroke-dasharray="1.5 .5 1.2 .8 1.6 2 1.4 .6 1.8 .4 1.1 2"/>
<rect x="2873.0" y="319.3" width="1.6" height="2.4" fill="#2060b0" opacity=".8"/>
<line x1="2877.0" y1="320.5" x2="2901.0" y2="320.5" stroke="#333333" stroke-opacity="0.55" stroke-width="2.2" stroke-dasharray="1.7 .3 1.1 .9 1.5 2 1.3 .7 1.6 .4 1.4 .6 1.2 2"/>
<line x1="2901.0" y1="320.5" x2="2947.0" y2="320.5" stroke="#8a1818" stroke-opacity="0.55" stroke-width="2.2" stroke-dasharray="1.4 .6 1.6 .4 1.2 2 1.5 .5 1.3 .7 1.7 2"/>
<line x1="2873.0" y1="328.5" x2="3013.0" y2="328.5" stroke="#333333" stroke-opacity="0.55" stroke-width="2.2" stroke-dasharray="1.4 .6 1.6 .4 1.2 2 1.5 .5 1.3 .7 1.7 2"/>
<rect x="2873.4" y="334.5" width="1.2" height="4" fill="#888" opacity=".7"/>
<line x1="2877.0" y1="336.5" x2="2915.0" y2="336.5" stroke="#333333" stroke-opacity="0.55" stroke-width="2.2" stroke-dasharray="1.7 .3 1.1 .9 1.5 2 1.3 .7 1.6 .4 1.4 .6 1.2 2"/>
<rect x="2915.4" y="334.5" width="1.2" height="4" fill="#888" opacity=".7"/>
<line x1="2919.0" y1="336.5" x2="2945.0" y2="336.5" stroke="#333333" stroke-opacity="0.55" stroke-width="2.2" stroke-dasharray="1.5 .5 1.2 .8 1.6 2 1.4 .6 1.8 .4 1.1 2"/>
<rect x="3009.4" y="334.5" width="1.2" height="4" fill="#888" opacity=".7"/>
<line x1="3013.0" y1="336.5" x2="3027.0" y2="336.5" stroke="#333333" stroke-opacity="0.55" stroke-width="2.2" stroke-dasharray="1.7 .3 1.1 .9 1.5 2 1.3 .7 1.6 .4 1.4 .6 1.2 2"/>
<rect x="2873.4" y="338.5" width="1.2" height="4" fill="#888" opacity=".7"/>
<rect x="2875.0" y="340.2" width="40.0" height="1.4" fill="#999" opacity=".8"/>
<rect x="2915.4" y="338.5" width="1.2" height="4" fill="#888" opacity=".7"/>
<rect x="2917.0" y="340.2" width="92.0" height="1.4" fill="#999" opacity=".8"/>
<rect x="3009.4" y="338.5" width="1.2" height="4" fill="#888" opacity=".7"/>
<rect x="3011.0" y="340.2" width="90.0" height="1.4" fill="#999" opacity=".8"/>
<rect x="2873.4" y="342.5" width="1.2" height="4" fill="#888" opacity=".7"/>
<line x1="2877.0" y1="344.5" x2="2911.0" y2="344.5" stroke="#15157a" stroke-opacity="0.60" stroke-width="2.4" stroke-dasharray="1.5 .5 1.2 .8 1.6 2 1.4 .6 1.8 .4 1.1 2"/>
<rect x="2915.4" y="342.5" width="1.2" height="4" fill="#888" opacity=".7"/>
<line x1="2919.0" y1="344.5" x2="2999.0" y2="344.5" stroke="#8a1818" stroke-opacity="0.55" stroke-width="2.2" stroke-dasharray="1.7 .3 1.1 .9 1.5 2 1.3 .7 1.6 .4 1.4 .6 1.2 2"/>
<rect x="3009.4" y="342.5" width="1.2" height="4" fill="#888" opacity=".7"/>
<line x1="3013.0" y1="344.5" x2="3101.0" y2="344.5" stroke="#333333" stroke-opacity="0.55" stroke-width="2.2" stroke-dasharray="1.5 .5 1.2 .8 1.6 2 1.4 .6 1.8 .4 1.1 2"/>
<rect x="2873.4" y="346.5" width="1.2" height="4" fill="#888" opacity=".7"/>
<line x1="2877.0" y1="348.5" x2="2907.0" y2="348.5" stroke="#15157a" stroke-opacity="0.60" stroke-width="2.4" stroke-dasharray="1.2 .8 1.7 .3 1.4 2 1.6 .4 1.2 .8 1.5 2"/>
<rect x="2915.4" y="346.5" width="1.2" height="4" fill="#888" opacity=".7"/>
<line x1="2919.0" y1="348.5" x2="2989.0" y2="348.5" stroke="#8a1818" stroke-opacity="0.55" stroke-width="2.2" stroke-dasharray="1.4 .6 1.6 .4 1.2 2 1.5 .5 1.3 .7 1.7 2"/>
<rect x="3009.4" y="346.5" width="1.2" height="4" fill="#888" opacity=".7"/>
<line x1="3013.0" y1="348.5" x2="3101.0" y2="348.5" stroke="#333333" stroke-opacity="0.55" stroke-width="2.2" stroke-dasharray="1.2 .8 1.7 .3 1.4 2 1.6 .4 1.2 .8 1.5 2"/>
<rect x="2873.4" y="350.5" width="1.2" height="4" fill="#888" opacity=".7"/>
<line x1="2877.0" y1="352.5" x2="2903.0" y2="352.5" stroke="#15157a" stroke-opacity="0.60" stroke-width="2.4" stroke-dasharray="1.7 .3 1.1 .9 1.5 2 1.3 .7 1.6 .4 1.4 .6 1.2 2"/>
<rect x="2915.4" y="350.5" width="1.2" height="4" fill="#888" opacity=".7"/>
<line x1="2919.0" y1="352.5" x2="2993.0" y2="352.5" stroke="#8a1818" stroke-opacity="0.55" stroke-width="2.2" stroke-dasharray="1.5 .5 1.2 .8 1.6 2 1.4 .6 1.8 .4 1.1 2"/>
<rect x="3009.4" y="350.5" width="1.2" height="4" fill="#888" opacity=".7"/>
<line x1="3013.0" y1="352.5" x2="3101.0" y2="352.5" stroke="#333333" stroke-opacity="0.55" stroke-width="2.2" stroke-dasharray="1.7 .3 1.1 .9 1.5 2 1.3 .7 1.6 .4 1.4 .6 1.2 2"/>
<rect x="2873.4" y="354.5" width="1.2" height="4" fill="#888" opacity=".7"/>
<line x1="2877.0" y1="356.5" x2="2905.0" y2="356.5" stroke="#15157a" stroke-opacity="0.60" stroke-width="2.4" stroke-dasharray="1.4 .6 1.6 .4 1.2 2 1.5 .5 1.3 .7 1.7 2"/>
<rect x="2915.4" y="354.5" width="1.2" height="4" fill="#888" opacity=".7"/>
<line x1="2919.0" y1="356.5" x2="2995.0" y2="356.5" stroke="#8a1818" stroke-opacity="0.55" stroke-width="2.2" stroke-dasharray="1.2 .8 1.7 .3 1.4 2 1.6 .4 1.2 .8 1.5 2"/>
<rect x="3009.4" y="354.5" width="1.2" height="4" fill="#888" opacity=".7"/>
<line x1="3013.0" y1="356.5" x2="3101.0" y2="356.5" stroke="#333333" stroke-opacity="0.55" stroke-width="2.2" stroke-dasharray="1.4 .6 1.6 .4 1.2 2 1.5 .5 1.3 .7 1.7 2"/>
<rect x="2873.4" y="358.5" width="1.2" height="4" fill="#888" opacity=".7"/>
<line x1="2877.0" y1="360.5" x2="2909.0" y2="360.5" stroke="#15157a" stroke-opacity="0.60" stroke-width="2.4" stroke-dasharray="1.5 .5 1.2 .8 1.6 2 1.4 .6 1.8 .4 1.1 2"/>
<rect x="2915.4" y="358.5" width="1.2" height="4" fill="#888" opacity=".7"/>
<line x1="2919.0" y1="360.5" x2="2987.0" y2="360.5" stroke="#8a1818" stroke-opacity="0.55" stroke-width="2.2" stroke-dasharray="1.7 .3 1.1 .9 1.5 2 1.3 .7 1.6 .4 1.4 .6 1.2 2"/>
<rect x="3009.4" y="358.5" width="1.2" height="4" fill="#888" opacity=".7"/>
<line x1="3013.0" y1="360.5" x2="3101.0" y2="360.5" stroke="#333333" stroke-opacity="0.55" stroke-width="2.2" stroke-dasharray="1.5 .5 1.2 .8 1.6 2 1.4 .6 1.8 .4 1.1 2"/>
<line x1="2873.0" y1="364.5" x2="2895.0" y2="364.5" stroke="#333333" stroke-opacity="0.55" stroke-width="2.2" stroke-dasharray="1.5 .5 1.2 .8 1.6 2 1.4 .6 1.8 .4 1.1 2"/>
<rect x="2897.4" y="362.5" width="1.2" height="4" fill="#888" opacity=".7"/>
<rect x="2873.4" y="366.5" width="1.2" height="4" fill="#888" opacity=".7"/>
<line x1="2877.0" y1="368.5" x2="2899.0" y2="368.5" stroke="#15157a" stroke-opacity="0.60" stroke-width="2.4" stroke-dasharray="1.7 .3 1.1 .9 1.5 2 1.3 .7 1.6 .4 1.4 .6 1.2 2"/>
<rect x="2915.4" y="366.5" width="1.2" height="4" fill="#888" opacity=".7"/>
<line x1="2919.0" y1="368.5" x2="2975.0" y2="368.5" stroke="#8a1818" stroke-opacity="0.55" stroke-width="2.2" stroke-dasharray="1.5 .5 1.2 .8 1.6 2 1.4 .6 1.8 .4 1.1 2"/>
<rect x="3009.4" y="366.5" width="1.2" height="4" fill="#888" opacity=".7"/>
<line x1="3013.0" y1="368.5" x2="3059.0" y2="368.5" stroke="#333333" stroke-opacity="0.55" stroke-width="2.2" stroke-dasharray="1.7 .3 1.1 .9 1.5 2 1.3 .7 1.6 .4 1.4 .6 1.2 2"/>
<rect x="2873.4" y="370.5" width="1.2" height="4" fill="#888" opacity=".7"/>
<line x1="2877.0" y1="372.5" x2="2905.0" y2="372.5" stroke="#15157a" stroke-opacity="0.60" stroke-width="2.4" stroke-dasharray="1.4 .6 1.6 .4 1.2 2 1.5 .5 1.3 .7 1.7 2"/>
<rect x="2915.4" y="370.5" width="1.2" height="4" fill="#888" opacity=".7"/>
<line x1="2919.0" y1="372.5" x2="2965.0" y2="372.5" stroke="#8a1818" stroke-opacity="0.55" stroke-width="2.2" stroke-dasharray="1.2 .8 1.7 .3 1.4 2 1.6 .4 1.2 .8 1.5 2"/>
<line x1="2965.0" y1="372.5" x2="2991.0" y2="372.5" stroke="#333333" stroke-opacity="0.55" stroke-width="2.2" stroke-dasharray="1.7 .3 1.1 .9 1.5 2 1.3 .7 1.6 .4 1.4 .6 1.2 2"/>
<rect x="3009.4" y="370.5" width="1.2" height="4" fill="#888" opacity=".7"/>
<line x1="3013.0" y1="372.5" x2="3101.0" y2="372.5" stroke="#333333" stroke-opacity="0.55" stroke-width="2.2" stroke-dasharray="1.5 .5 1.2 .8 1.6 2 1.4 .6 1.8 .4 1.1 2"/>
<rect x="2873.4" y="374.5" width="1.2" height="4" fill="#888" opacity=".7"/>
<line x1="2877.0" y1="376.5" x2="2897.0" y2="376.5" stroke="#15157a" stroke-opacity="0.60" stroke-width="2.4" stroke-dasharray="1.5 .5 1.2 .8 1.6 2 1.4 .6 1.8 .4 1.1 2"/>
<rect x="2915.4" y="374.5" width="1.2" height="4" fill="#888" opacity=".7"/>
<line x1="2919.0" y1="376.5" x2="2995.0" y2="376.5" stroke="#8a1818" stroke-opacity="0.55" stroke-width="2.2" stroke-dasharray="1.7 .3 1.1 .9 1.5 2 1.3 .7 1.6 .4 1.4 .6 1.2 2"/>
<rect x="3009.4" y="374.5" width="1.2" height="4" fill="#888" opacity=".7"/>
<line x1="3013.0" y1="376.5" x2="3101.0" y2="376.5" stroke="#333333" stroke-opacity="0.55" stroke-width="2.2" stroke-dasharray="1.5 .5 1.2 .8 1.6 2 1.4 .6 1.8 .4 1.1 2"/>
<rect x="2873.4" y="378.5" width="1.2" height="4" fill="#888" opacity=".7"/>
<line x1="2877.0" y1="380.5" x2="2909.0" y2="380.5" stroke="#15157a" stroke-opacity="0.60" stroke-width="2.4" stroke-dasharray="1.2 .8 1.7 .3 1.4 2 1.6 .4 1.2 .8 1.5 2"/>
<rect x="2915.4" y="378.5" width="1.2" height="4" fill="#888" opacity=".7"/>
<line x1="2919.0" y1="380.5" x2="2989.0" y2="380.5" stroke="#8a1818" stroke-opacity="0.55" stroke-width="2.2" stroke-dasharray="1.4 .6 1.6 .4 1.2 2 1.5 .5 1.3 .7 1.7 2"/>
<rect x="3009.4" y="378.5" width="1.2" height="4" fill="#888" opacity=".7"/>
<line x1="3013.0" y1="380.5" x2="3101.0" y2="380.5" stroke="#333333" stroke-opacity="0.55" stroke-width="2.2" stroke-dasharray="1.2 .8 1.7 .3 1.4 2 1.6 .4 1.2 .8 1.5 2"/>
<rect x="2873.4" y="382.5" width="1.2" height="4" fill="#888" opacity=".7"/>
<line x1="2877.0" y1="384.5" x2="2909.0" y2="384.5" stroke="#15157a" stroke-opacity="0.60" stroke-width="2.4" stroke-dasharray="1.7 .3 1.1 .9 1.5 2 1.3 .7 1.6 .4 1.4 .6 1.2 2"/>
<rect x="2915.4" y="382.5" width="1.2" height="4" fill="#888" opacity=".7"/>
<line x1="2919.0" y1="384.5" x2="3011.0" y2="384.5" stroke="#8a1818" stroke-opacity="0.55" stroke-width="2.2" stroke-dasharray="1.5 .5 1.2 .8 1.6 2 1.4 .6 1.8 .4 1.1 2"/>
<rect x="3015.4" y="382.5" width="1.2" height="4" fill="#888" opacity=".7"/>
<line x1="3019.0" y1="384.5" x2="3101.0" y2="384.5" stroke="#333333" stroke-opacity="0.55" stroke-width="2.2" stroke-dasharray="1.7 .3 1.1 .9 1.5 2 1.3 .7 1.6 .4 1.4 .6 1.2 2"/>
<rect x="2873.4" y="386.5" width="1.2" height="4" fill="#888" opacity=".7"/>
<line x1="2877.0" y1="388.5" x2="2909.0" y2="388.5" stroke="#15157a" stroke-opacity="0.60" stroke-width="2.4" stroke-dasharray="1.4 .6 1.6 .4 1.2 2 1.5 .5 1.3 .7 1.7 2"/>
<rect x="2915.4" y="386.5" width="1.2" height="4" fill="#888" opacity=".7"/>
<line x1="2919.0" y1="388.5" x2="3011.0" y2="388.5" stroke="#8a1818" stroke-opacity="0.55" stroke-width="2.2" stroke-dasharray="1.2 .8 1.7 .3 1.4 2 1.6 .4 1.2 .8 1.5 2"/>
<rect x="3015.4" y="386.5" width="1.2" height="4" fill="#888" opacity=".7"/>
<line x1="3019.0" y1="388.5" x2="3101.0" y2="388.5" stroke="#333333" stroke-opacity="0.55" stroke-width="2.2" stroke-dasharray="1.4 .6 1.6 .4 1.2 2 1.5 .5 1.3 .7 1.7 2"/>
<rect x="2873.4" y="390.5" width="1.2" height="4" fill="#888" opacity=".7"/>
<line x1="2877.0" y1="392.5" x2="2909.0" y2="392.5" stroke="#15157a" stroke-opacity="0.60" stroke-width="2.4" stroke-dasharray="1.5 .5 1.2 .8 1.6 2 1.4 .6 1.8 .4 1.1 2"/>
<rect x="2915.4" y="390.5" width="1.2" height="4" fill="#888" opacity=".7"/>
<line x1="2919.0" y1="392.5" x2="2975.0" y2="392.5" stroke="#8a1818" stroke-opacity="0.55" stroke-width="2.2" stroke-dasharray="1.7 .3 1.1 .9 1.5 2 1.3 .7 1.6 .4 1.4 .6 1.2 2"/>
<rect x="3009.4" y="390.5" width="1.2" height="4" fill="#888" opacity=".7"/>
<line x1="3013.0" y1="392.5" x2="3101.0" y2="392.5" stroke="#333333" stroke-opacity="0.55" stroke-width="2.2" stroke-dasharray="1.5 .5 1.2 .8 1.6 2 1.4 .6 1.8 .4 1.1 2"/>
<rect x="2873.4" y="394.5" width="1.2" height="4" fill="#888" opacity=".7"/>
<line x1="2877.0" y1="396.5" x2="2909.0" y2="396.5" stroke="#15157a" stroke-opacity="0.60" stroke-width="2.4" stroke-dasharray="1.2 .8 1.7 .3 1.4 2 1.6 .4 1.2 .8 1.5 2"/>
<rect x="2915.4" y="394.5" width="1.2" height="4" fill="#888" opacity=".7"/>
<line x1="2919.0" y1="396.5" x2="2999.0" y2="396.5" stroke="#8a1818" stroke-opacity="0.55" stroke-width="2.2" stroke-dasharray="1.4 .6 1.6 .4 1.2 2 1.5 .5 1.3 .7 1.7 2"/>
<rect x="3009.4" y="394.5" width="1.2" height="4" fill="#888" opacity=".7"/>
<line x1="3013.0" y1="396.5" x2="3099.0" y2="396.5" stroke="#333333" stroke-opacity="0.55" stroke-width="2.2" stroke-dasharray="1.2 .8 1.7 .3 1.4 2 1.6 .4 1.2 .8 1.5 2"/>
<line x1="2873.0" y1="408.5" x2="2881.0" y2="408.5" stroke="#333333" stroke-opacity="0.55" stroke-width="2.2" stroke-dasharray="1.4 .6 1.6 .4 1.2 2 1.5 .5 1.3 .7 1.7 2"/>
<line x1="2873.0" y1="416.5" x2="2951.0" y2="416.5" stroke="#8a1010" stroke-opacity="0.75" stroke-width="2.4" stroke-dasharray="1.2 .8 1.7 .3 1.4 2 1.6 .4 1.2 .8 1.5 2"/>
<rect x="2873.0" y="419.3" width="1.6" height="2.4" fill="#2060b0" opacity=".8"/>
<line x1="2877.0" y1="420.5" x2="2901.0" y2="420.5" stroke="#333333" stroke-opacity="0.55" stroke-width="2.2" stroke-dasharray="1.4 .6 1.6 .4 1.2 2 1.5 .5 1.3 .7 1.7 2"/>
<line x1="2901.0" y1="420.5" x2="2961.0" y2="420.5" stroke="#8a1818" stroke-opacity="0.55" stroke-width="2.2" stroke-dasharray="1.5 .5 1.2 .8 1.6 2 1.4 .6 1.8 .4 1.1 2"/>
<line x1="2961.0" y1="420.5" x2="2969.0" y2="420.5" stroke="#333333" stroke-opacity="0.55" stroke-width="2.2" stroke-dasharray="1.2 .8 1.7 .3 1.4 2 1.6 .4 1.2 .8 1.5 2"/>
<line x1="2969.0" y1="420.5" x2="3031.0" y2="420.5" stroke="#8a1818" stroke-opacity="0.55" stroke-width="2.2" stroke-dasharray="1.7 .3 1.1 .9 1.5 2 1.3 .7 1.6 .4 1.4 .6 1.2 2"/>
<line x1="2873.0" y1="428.5" x2="3031.0" y2="428.5" stroke="#333333" stroke-opacity="0.55" stroke-width="2.2" stroke-dasharray="1.5 .5 1.2 .8 1.6 2 1.4 .6 1.8 .4 1.1 2"/>
<line x1="2873.0" y1="436.5" x2="2937.0" y2="436.5" stroke="#8a1010" stroke-opacity="0.75" stroke-width="2.4" stroke-dasharray="1.7 .3 1.1 .9 1.5 2 1.3 .7 1.6 .4 1.4 .6 1.2 2"/>
<rect x="2873.0" y="439.3" width="1.6" height="2.4" fill="#2060b0" opacity=".8"/>
<line x1="2881.0" y1="440.5" x2="2915.0" y2="440.5" stroke="#15157a" stroke-opacity="0.60" stroke-width="2.4" stroke-dasharray="1.5 .5 1.2 .8 1.6 2 1.4 .6 1.8 .4 1.1 2"/>
<line x1="2917.0" y1="440.5" x2="2999.0" y2="440.5" stroke="#8a1818" stroke-opacity="0.55" stroke-width="2.2" stroke-dasharray="1.2 .8 1.7 .3 1.4 2 1.6 .4 1.2 .8 1.5 2"/>
<line x1="2999.0" y1="440.5" x2="3075.0" y2="440.5" stroke="#333333" stroke-opacity="0.55" stroke-width="2.2" stroke-dasharray="1.7 .3 1.1 .9 1.5 2 1.3 .7 1.6 .4 1.4 .6 1.2 2"/>
<rect x="2873.0" y="443.3" width="1.6" height="2.4" fill="#2060b0" opacity=".8"/>
<line x1="2881.0" y1="444.5" x2="2923.0" y2="444.5" stroke="#15157a" stroke-opacity="0.60" stroke-width="2.4" stroke-dasharray="1.2 .8 1.7 .3 1.4 2 1.6 .4 1.2 .8 1.5 2"/>
<line x1="2925.0" y1="444.5" x2="3023.0" y2="444.5" stroke="#8a1818" stroke-opacity="0.55" stroke-width="2.2" stroke-dasharray="1.7 .3 1.1 .9 1.5 2 1.3 .7 1.6 .4 1.4 .6 1.2 2"/>
<line x1="3023.0" y1="444.5" x2="3101.0" y2="444.5" stroke="#333333" stroke-opacity="0.55" stroke-width="2.2" stroke-dasharray="1.4 .6 1.6 .4 1.2 2 1.5 .5 1.3 .7 1.7 2"/>
<rect x="2873.0" y="447.3" width="1.6" height="2.4" fill="#2060b0" opacity=".8"/>
<line x1="2881.0" y1="448.5" x2="2915.0" y2="448.5" stroke="#15157a" stroke-opacity="0.60" stroke-width="2.4" stroke-dasharray="1.7 .3 1.1 .9 1.5 2 1.3 .7 1.6 .4 1.4 .6 1.2 2"/>
<line x1="2917.0" y1="448.5" x2="2999.0" y2="448.5" stroke="#8a1818" stroke-opacity="0.55" stroke-width="2.2" stroke-dasharray="1.4 .6 1.6 .4 1.2 2 1.5 .5 1.3 .7 1.7 2"/>
<line x1="2999.0" y1="448.5" x2="3101.0" y2="448.5" stroke="#333333" stroke-opacity="0.55" stroke-width="2.2" stroke-dasharray="1.5 .5 1.2 .8 1.6 2 1.4 .6 1.8 .4 1.1 2"/>
<line x1="2873.0" y1="460.5" x2="2965.0" y2="460.5" stroke="#8a1010" stroke-opacity="0.75" stroke-width="2.4" stroke-dasharray="1.5 .5 1.2 .8 1.6 2 1.4 .6 1.8 .4 1.1 2"/>
<rect x="2873.0" y="463.3" width="1.6" height="2.4" fill="#2060b0" opacity=".8"/>
<line x1="2877.0" y1="464.5" x2="2889.0" y2="464.5" stroke="#333333" stroke-opacity="0.55" stroke-width="2.2" stroke-dasharray="1.7 .3 1.1 .9 1.5 2 1.3 .7 1.6 .4 1.4 .6 1.2 2"/>
<line x1="2889.0" y1="464.5" x2="2951.0" y2="464.5" stroke="#8a1818" stroke-opacity="0.55" stroke-width="2.2" stroke-dasharray="1.4 .6 1.6 .4 1.2 2 1.5 .5 1.3 .7 1.7 2"/>
<line x1="2873.0" y1="472.5" x2="3021.0" y2="472.5" stroke="#333333" stroke-opacity="0.55" stroke-width="2.2" stroke-dasharray="1.4 .6 1.6 .4 1.2 2 1.5 .5 1.3 .7 1.7 2"/>
<line x1="3021.0" y1="472.5" x2="3055.0" y2="472.5" stroke="#8a1818" stroke-opacity="0.55" stroke-width="2.2" stroke-dasharray="1.5 .5 1.2 .8 1.6 2 1.4 .6 1.8 .4 1.1 2"/>
<line x1="3055.0" y1="472.5" x2="3059.0" y2="472.5" stroke="#333333" stroke-opacity="0.55" stroke-width="2.2" stroke-dasharray="1.2 .8 1.7 .3 1.4 2 1.6 .4 1.2 .8 1.5 2"/>
<rect x="2873.0" y="475.3" width="1.6" height="2.4" fill="#2060b0" opacity=".8"/>
<line x1="2881.0" y1="476.5" x2="2927.0" y2="476.5" stroke="#15157a" stroke-opacity="0.60" stroke-width="2.4" stroke-dasharray="1.2 .8 1.7 .3 1.4 2 1.6 .4 1.2 .8 1.5 2"/>
<line x1="2927.0" y1="476.5" x2="2943.0" y2="476.5" stroke="#8a1818" stroke-opacity="0.55" stroke-width="2.2" stroke-dasharray="1.7 .3 1.1 .9 1.5 2 1.3 .7 1.6 .4 1.4 .6 1.2 2"/>
<line x1="2943.0" y1="476.5" x2="3007.0" y2="476.5" stroke="#333333" stroke-opacity="0.55" stroke-width="2.2" stroke-dasharray="1.4 .6 1.6 .4 1.2 2 1.5 .5 1.3 .7 1.7 2"/>
<rect x="2873.0" y="479.3" width="1.6" height="2.4" fill="#2060b0" opacity=".8"/>
<line x1="2881.0" y1="480.5" x2="2915.0" y2="480.5" stroke="#15157a" stroke-opacity="0.60" stroke-width="2.4" stroke-dasharray="1.7 .3 1.1 .9 1.5 2 1.3 .7 1.6 .4 1.4 .6 1.2 2"/>
<line x1="2915.0" y1="480.5" x2="2949.0" y2="480.5" stroke="#333333" stroke-opacity="0.55" stroke-width="2.2" stroke-dasharray="1.4 .6 1.6 .4 1.2 2 1.5 .5 1.3 .7 1.7 2"/>
<line x1="2949.0" y1="480.5" x2="2975.0" y2="480.5" stroke="#8a1818" stroke-opacity="0.55" stroke-width="2.2" stroke-dasharray="1.5 .5 1.2 .8 1.6 2 1.4 .6 1.8 .4 1.1 2"/>
<line x1="2975.0" y1="480.5" x2="3019.0" y2="480.5" stroke="#333333" stroke-opacity="0.55" stroke-width="2.2" stroke-dasharray="1.2 .8 1.7 .3 1.4 2 1.6 .4 1.2 .8 1.5 2"/>
<rect x="2873.0" y="483.3" width="1.6" height="2.4" fill="#2060b0" opacity=".8"/>
<line x1="2881.0" y1="484.5" x2="2923.0" y2="484.5" stroke="#15157a" stroke-opacity="0.60" stroke-width="2.4" stroke-dasharray="1.4 .6 1.6 .4 1.2 2 1.5 .5 1.3 .7 1.7 2"/>
<line x1="2923.0" y1="484.5" x2="3101.0" y2="484.5" stroke="#333333" stroke-opacity="0.55" stroke-width="2.2" stroke-dasharray="1.5 .5 1.2 .8 1.6 2 1.4 .6 1.8 .4 1.1 2"/>
<line x1="2873.0" y1="488.5" x2="2889.0" y2="488.5" stroke="#333333" stroke-opacity="0.55" stroke-width="2.2" stroke-dasharray="1.4 .6 1.6 .4 1.2 2 1.5 .5 1.3 .7 1.7 2"/>
<line x1="2889.0" y1="488.5" x2="2917.0" y2="488.5" stroke="#8a1818" stroke-opacity="0.55" stroke-width="2.2" stroke-dasharray="1.5 .5 1.2 .8 1.6 2 1.4 .6 1.8 .4 1.1 2"/>
<rect x="2873.0" y="491.3" width="1.6" height="2.4" fill="#2060b0" opacity=".8"/>
<line x1="2881.0" y1="492.5" x2="2925.0" y2="492.5" stroke="#15157a" stroke-opacity="0.60" stroke-width="2.4" stroke-dasharray="1.2 .8 1.7 .3 1.4 2 1.6 .4 1.2 .8 1.5 2"/>
<line x1="2925.0" y1="492.5" x2="3039.0" y2="492.5" stroke="#333333" stroke-opacity="0.55" stroke-width="2.2" stroke-dasharray="1.7 .3 1.1 .9 1.5 2 1.3 .7 1.6 .4 1.4 .6 1.2 2"/>
<line x1="2873.0" y1="500.5" x2="2965.0" y2="500.5" stroke="#8a1010" stroke-opacity="0.75" stroke-width="2.4" stroke-dasharray="1.7 .3 1.1 .9 1.5 2 1.3 .7 1.6 .4 1.4 .6 1.2 2"/>
<rect x="2873.4" y="502.5" width="1.2" height="4" fill="#888" opacity=".7"/>
<line x1="2877.0" y1="504.5" x2="2891.0" y2="504.5" stroke="#333333" stroke-opacity="0.55" stroke-width="2.2" stroke-dasharray="1.5 .5 1.2 .8 1.6 2 1.4 .6 1.8 .4 1.1 2"/>
<rect x="2923.4" y="502.5" width="1.2" height="4" fill="#888" opacity=".7"/>
<line x1="2927.0" y1="504.5" x2="2935.0" y2="504.5" stroke="#333333" stroke-opacity="0.55" stroke-width="2.2" stroke-dasharray="1.7 .3 1.1 .9 1.5 2 1.3 .7 1.6 .4 1.4 .6 1.2 2"/>
<rect x="3041.4" y="502.5" width="1.2" height="4" fill="#888" opacity=".7"/>
<line x1="3045.0" y1="504.5" x2="3059.0" y2="504.5" stroke="#333333" stroke-opacity="0.55" stroke-width="2.2" stroke-dasharray="1.5 .5 1.2 .8 1.6 2 1.4 .6 1.8 .4 1.1 2"/>
<line x1="2873.0" y1="508.5" x2="2891.0" y2="508.5" stroke="#333333" stroke-opacity="0.55" stroke-width="2.2" stroke-dasharray="1.5 .5 1.2 .8 1.6 2 1.4 .6 1.8 .4 1.1 2"/>
<rect x="2989.4" y="506.5" width="1.2" height="4" fill="#888" opacity=".7"/>
<rect x="2873.4" y="510.5" width="1.2" height="4" fill="#888" opacity=".7"/>
<rect x="2875.0" y="512.2" width="48.0" height="1.4" fill="#999" opacity=".8"/>
<rect x="2923.4" y="510.5" width="1.2" height="4" fill="#888" opacity=".7"/>
<rect x="2927.0" y="512.2" width="112.0" height="1.4" fill="#999" opacity=".8"/>
<rect x="3041.4" y="510.5" width="1.2" height="4" fill="#888" opacity=".7"/>
<rect x="2873.0" y="516.2" width="128.0" height="1.4" fill="#999" opacity=".8"/>
<rect x="3003.4" y="514.5" width="1.2" height="4" fill="#888" opacity=".7"/>
<rect x="2873.4" y="518.5" width="1.2" height="4" fill="#888" opacity=".7"/>
<line x1="2877.0" y1="520.5" x2="2897.0" y2="520.5" stroke="#15157a" stroke-opacity="0.60" stroke-width="2.4" stroke-dasharray="1.5 .5 1.2 .8 1.6 2 1.4 .6 1.8 .4 1.1 2"/>
<rect x="2923.4" y="518.5" width="1.2" height="4" fill="#888" opacity=".7"/>
<line x1="2927.0" y1="520.5" x2="3007.0" y2="520.5" stroke="#8a1818" stroke-opacity="0.55" stroke-width="2.2" stroke-dasharray="1.7 .3 1.1 .9 1.5 2 1.3 .7 1.6 .4 1.4 .6 1.2 2"/>
<rect x="3041.4" y="518.5" width="1.2" height="4" fill="#888" opacity=".7"/>
<line x1="3045.0" y1="520.5" x2="3101.0" y2="520.5" stroke="#333333" stroke-opacity="0.55" stroke-width="2.2" stroke-dasharray="1.5 .5 1.2 .8 1.6 2 1.4 .6 1.8 .4 1.1 2"/>
<line x1="2875.0" y1="524.5" x2="2895.0" y2="524.5" stroke="#333333" stroke-opacity="0.55" stroke-width="2.2" stroke-dasharray="1.5 .5 1.2 .8 1.6 2 1.4 .6 1.8 .4 1.1 2"/>
<rect x="2915.4" y="522.5" width="1.2" height="4" fill="#888" opacity=".7"/>
<rect x="2873.4" y="526.5" width="1.2" height="4" fill="#888" opacity=".7"/>
<line x1="2877.0" y1="528.5" x2="2923.0" y2="528.5" stroke="#15157a" stroke-opacity="0.60" stroke-width="2.4" stroke-dasharray="1.7 .3 1.1 .9 1.5 2 1.3 .7 1.6 .4 1.4 .6 1.2 2"/>
<rect x="2923.4" y="526.5" width="1.2" height="4" fill="#888" opacity=".7"/>
<line x1="2927.0" y1="528.5" x2="2999.0" y2="528.5" stroke="#8a1818" stroke-opacity="0.55" stroke-width="2.2" stroke-dasharray="1.5 .5 1.2 .8 1.6 2 1.4 .6 1.8 .4 1.1 2"/>
<rect x="3041.4" y="526.5" width="1.2" height="4" fill="#888" opacity=".7"/>
<line x1="3045.0" y1="528.5" x2="3075.0" y2="528.5" stroke="#15157a" stroke-opacity="0.60" stroke-width="2.4" stroke-dasharray="1.7 .3 1.1 .9 1.5 2 1.3 .7 1.6 .4 1.4 .6 1.2 2"/>
<line x1="3075.0" y1="528.5" x2="3101.0" y2="528.5" stroke="#333333" stroke-opacity="0.55" stroke-width="2.2" stroke-dasharray="1.4 .6 1.6 .4 1.2 2 1.5 .5 1.3 .7 1.7 2"/>
<line x1="2873.0" y1="532.5" x2="2895.0" y2="532.5" stroke="#333333" stroke-opacity="0.55" stroke-width="2.2" stroke-dasharray="1.7 .3 1.1 .9 1.5 2 1.3 .7 1.6 .4 1.4 .6 1.2 2"/>
<rect x="2893.4" y="530.5" width="1.2" height="4" fill="#888" opacity=".7"/>
<rect x="2873.4" y="534.5" width="1.2" height="4" fill="#888" opacity=".7"/>
<line x1="2877.0" y1="536.5" x2="2915.0" y2="536.5" stroke="#15157a" stroke-opacity="0.60" stroke-width="2.4" stroke-dasharray="1.5 .5 1.2 .8 1.6 2 1.4 .6 1.8 .4 1.1 2"/>
<rect x="2923.4" y="534.5" width="1.2" height="4" fill="#888" opacity=".7"/>
<line x1="2927.0" y1="536.5" x2="3019.0" y2="536.5" stroke="#8a1818" stroke-opacity="0.55" stroke-width="2.2" stroke-dasharray="1.7 .3 1.1 .9 1.5 2 1.3 .7 1.6 .4 1.4 .6 1.2 2"/>
<rect x="3041.4" y="534.5" width="1.2" height="4" fill="#888" opacity=".7"/>
<line x1="3045.0" y1="536.5" x2="3101.0" y2="536.5" stroke="#333333" stroke-opacity="0.55" stroke-width="2.2" stroke-dasharray="1.5 .5 1.2 .8 1.6 2 1.4 .6 1.8 .4 1.1 2"/>
<line x1="2873.0" y1="540.5" x2="2889.0" y2="540.5" stroke="#333333" stroke-opacity="0.55" stroke-width="2.2" stroke-dasharray="1.5 .5 1.2 .8 1.6 2 1.4 .6 1.8 .4 1.1 2"/>
<rect x="2935.4" y="538.5" width="1.2" height="4" fill="#888" opacity=".7"/>
<rect x="2873.4" y="542.5" width="1.2" height="4" fill="#888" opacity=".7"/>
<line x1="2877.0" y1="544.5" x2="2911.0" y2="544.5" stroke="#15157a" stroke-opacity="0.60" stroke-width="2.4" stroke-dasharray="1.7 .3 1.1 .9 1.5 2 1.3 .7 1.6 .4 1.4 .6 1.2 2"/>
<rect x="2923.4" y="542.5" width="1.2" height="4" fill="#888" opacity=".7"/>
<line x1="2927.0" y1="544.5" x2="3015.0" y2="544.5" stroke="#8a1818" stroke-opacity="0.55" stroke-width="2.2" stroke-dasharray="1.5 .5 1.2 .8 1.6 2 1.4 .6 1.8 .4 1.1 2"/>
<rect x="3041.4" y="542.5" width="1.2" height="4" fill="#888" opacity=".7"/>
<line x1="3045.0" y1="544.5" x2="3101.0" y2="544.5" stroke="#333333" stroke-opacity="0.55" stroke-width="2.2" stroke-dasharray="1.7 .3 1.1 .9 1.5 2 1.3 .7 1.6 .4 1.4 .6 1.2 2"/>
<line x1="2873.0" y1="548.5" x2="2889.0" y2="548.5" stroke="#333333" stroke-opacity="0.55" stroke-width="2.2" stroke-dasharray="1.7 .3 1.1 .9 1.5 2 1.3 .7 1.6 .4 1.4 .6 1.2 2"/>
<rect x="2901.4" y="546.5" width="1.2" height="4" fill="#888" opacity=".7"/>
<rect x="2873.4" y="550.5" width="1.2" height="4" fill="#888" opacity=".7"/>
<line x1="2877.0" y1="552.5" x2="2909.0" y2="552.5" stroke="#15157a" stroke-opacity="0.60" stroke-width="2.4" stroke-dasharray="1.5 .5 1.2 .8 1.6 2 1.4 .6 1.8 .4 1.1 2"/>
<rect x="2923.4" y="550.5" width="1.2" height="4" fill="#888" opacity=".7"/>
<line x1="2927.0" y1="552.5" x2="3009.0" y2="552.5" stroke="#8a1818" stroke-opacity="0.55" stroke-width="2.2" stroke-dasharray="1.7 .3 1.1 .9 1.5 2 1.3 .7 1.6 .4 1.4 .6 1.2 2"/>
<rect x="3041.4" y="550.5" width="1.2" height="4" fill="#888" opacity=".7"/>
<line x1="3045.0" y1="552.5" x2="3101.0" y2="552.5" stroke="#333333" stroke-opacity="0.55" stroke-width="2.2" stroke-dasharray="1.5 .5 1.2 .8 1.6 2 1.4 .6 1.8 .4 1.1 2"/>
<line x1="2873.0" y1="556.5" x2="2905.0" y2="556.5" stroke="#333333" stroke-opacity="0.55" stroke-width="2.2" stroke-dasharray="1.5 .5 1.2 .8 1.6 2 1.4 .6 1.8 .4 1.1 2"/>
<rect x="2925.4" y="554.5" width="1.2" height="4" fill="#888" opacity=".7"/>
<rect x="2873.4" y="558.5" width="1.2" height="4" fill="#888" opacity=".7"/>
<line x1="2877.0" y1="560.5" x2="2911.0" y2="560.5" stroke="#15157a" stroke-opacity="0.60" stroke-width="2.4" stroke-dasharray="1.7 .3 1.1 .9 1.5 2 1.3 .7 1.6 .4 1.4 .6 1.2 2"/>
<rect x="2923.4" y="558.5" width="1.2" height="4" fill="#888" opacity=".7"/>
<line x1="2927.0" y1="560.5" x2="3015.0" y2="560.5" stroke="#8a1818" stroke-opacity="0.55" stroke-width="2.2" stroke-dasharray="1.5 .5 1.2 .8 1.6 2 1.4 .6 1.8 .4 1.1 2"/>
<rect x="3041.4" y="558.5" width="1.2" height="4" fill="#888" opacity=".7"/>
<line x1="3045.0" y1="560.5" x2="3101.0" y2="560.5" stroke="#333333" stroke-opacity="0.55" stroke-width="2.2" stroke-dasharray="1.7 .3 1.1 .9 1.5 2 1.3 .7 1.6 .4 1.4 .6 1.2 2"/>
<line x1="2873.0" y1="564.5" x2="2885.0" y2="564.5" stroke="#333333" stroke-opacity="0.55" stroke-width="2.2" stroke-dasharray="1.7 .3 1.1 .9 1.5 2 1.3 .7 1.6 .4 1.4 .6 1.2 2"/>
<rect x="2903.4" y="562.5" width="1.2" height="4" fill="#888" opacity=".7"/>
<rect x="2873.4" y="566.5" width="1.2" height="4" fill="#888" opacity=".7"/>
<line x1="2877.0" y1="568.5" x2="2913.0" y2="568.5" stroke="#15157a" stroke-opacity="0.60" stroke-width="2.4" stroke-dasharray="1.5 .5 1.2 .8 1.6 2 1.4 .6 1.8 .4 1.1 2"/>
<rect x="2923.4" y="566.5" width="1.2" height="4" fill="#888" opacity=".7"/>
<line x1="2927.0" y1="568.5" x2="3021.0" y2="568.5" stroke="#8a1818" stroke-opacity="0.55" stroke-width="2.2" stroke-dasharray="1.7 .3 1.1 .9 1.5 2 1.3 .7 1.6 .4 1.4 .6 1.2 2"/>
<rect x="3041.4" y="566.5" width="1.2" height="4" fill="#888" opacity=".7"/>
<line x1="3045.0" y1="568.5" x2="3101.0" y2="568.5" stroke="#333333" stroke-opacity="0.55" stroke-width="2.2" stroke-dasharray="1.5 .5 1.2 .8 1.6 2 1.4 .6 1.8 .4 1.1 2"/>
<line x1="2873.0" y1="572.5" x2="2889.0" y2="572.5" stroke="#333333" stroke-opacity="0.55" stroke-width="2.2" stroke-dasharray="1.5 .5 1.2 .8 1.6 2 1.4 .6 1.8 .4 1.1 2"/>
<rect x="2949.4" y="570.5" width="1.2" height="4" fill="#888" opacity=".7"/>
<rect x="2873.4" y="574.5" width="1.2" height="4" fill="#888" opacity=".7"/>
<line x1="2877.0" y1="576.5" x2="2913.0" y2="576.5" stroke="#15157a" stroke-opacity="0.60" stroke-width="2.4" stroke-dasharray="1.7 .3 1.1 .9 1.5 2 1.3 .7 1.6 .4 1.4 .6 1.2 2"/>
<rect x="2923.4" y="574.5" width="1.2" height="4" fill="#888" opacity=".7"/>
<line x1="2927.0" y1="576.5" x2="3021.0" y2="576.5" stroke="#8a1818" stroke-opacity="0.55" stroke-width="2.2" stroke-dasharray="1.5 .5 1.2 .8 1.6 2 1.4 .6 1.8 .4 1.1 2"/>
<rect x="3041.4" y="574.5" width="1.2" height="4" fill="#888" opacity=".7"/>
<line x1="3045.0" y1="576.5" x2="3101.0" y2="576.5" stroke="#333333" stroke-opacity="0.55" stroke-width="2.2" stroke-dasharray="1.7 .3 1.1 .9 1.5 2 1.3 .7 1.6 .4 1.4 .6 1.2 2"/>
<line x1="2873.0" y1="580.5" x2="2891.0" y2="580.5" stroke="#333333" stroke-opacity="0.55" stroke-width="2.2" stroke-dasharray="1.7 .3 1.1 .9 1.5 2 1.3 .7 1.6 .4 1.4 .6 1.2 2"/>
<rect x="2931.4" y="578.5" width="1.2" height="4" fill="#888" opacity=".7"/>
<rect x="2873.4" y="582.5" width="1.2" height="4" fill="#888" opacity=".7"/>
<line x1="2877.0" y1="584.5" x2="2917.0" y2="584.5" stroke="#15157a" stroke-opacity="0.60" stroke-width="2.4" stroke-dasharray="1.5 .5 1.2 .8 1.6 2 1.4 .6 1.8 .4 1.1 2"/>
<rect x="2923.4" y="582.5" width="1.2" height="4" fill="#888" opacity=".7"/>
<line x1="2927.0" y1="584.5" x2="3023.0" y2="584.5" stroke="#8a1818" stroke-opacity="0.55" stroke-width="2.2" stroke-dasharray="1.7 .3 1.1 .9 1.5 2 1.3 .7 1.6 .4 1.4 .6 1.2 2"/>
<rect x="3041.4" y="582.5" width="1.2" height="4" fill="#888" opacity=".7"/>
<line x1="3045.0" y1="584.5" x2="3101.0" y2="584.5" stroke="#333333" stroke-opacity="0.55" stroke-width="2.2" stroke-dasharray="1.5 .5 1.2 .8 1.6 2 1.4 .6 1.8 .4 1.1 2"/>
<line x1="2873.0" y1="588.5" x2="2893.0" y2="588.5" stroke="#333333" stroke-opacity="0.55" stroke-width="2.2" stroke-dasharray="1.5 .5 1.2 .8 1.6 2 1.4 .6 1.8 .4 1.1 2"/>
<rect x="2931.4" y="586.5" width="1.2" height="4" fill="#888" opacity=".7"/>
<rect x="2873.4" y="590.5" width="1.2" height="4" fill="#888" opacity=".7"/>
<line x1="2877.0" y1="592.5" x2="2923.0" y2="592.5" stroke="#15157a" stroke-opacity="0.60" stroke-width="2.4" stroke-dasharray="1.7 .3 1.1 .9 1.5 2 1.3 .7 1.6 .4 1.4 .6 1.2 2"/>
<rect x="2923.4" y="590.5" width="1.2" height="4" fill="#888" opacity=".7"/>
<line x1="2927.0" y1="592.5" x2="3033.0" y2="592.5" stroke="#8a1818" stroke-opacity="0.55" stroke-width="2.2" stroke-dasharray="1.5 .5 1.2 .8 1.6 2 1.4 .6 1.8 .4 1.1 2"/>
<rect x="3041.4" y="590.5" width="1.2" height="4" fill="#888" opacity=".7"/>
<line x1="3045.0" y1="592.5" x2="3101.0" y2="592.5" stroke="#333333" stroke-opacity="0.55" stroke-width="2.2" stroke-dasharray="1.7 .3 1.1 .9 1.5 2 1.3 .7 1.6 .4 1.4 .6 1.2 2"/>
<line x1="2873.0" y1="596.5" x2="2885.0" y2="596.5" stroke="#333333" stroke-opacity="0.55" stroke-width="2.2" stroke-dasharray="1.7 .3 1.1 .9 1.5 2 1.3 .7 1.6 .4 1.4 .6 1.2 2"/>
<rect x="2913.4" y="594.5" width="1.2" height="4" fill="#888" opacity=".7"/>
<rect x="2873.4" y="598.5" width="1.2" height="4" fill="#888" opacity=".7"/>
<line x1="2877.0" y1="600.5" x2="2913.0" y2="600.5" stroke="#15157a" stroke-opacity="0.60" stroke-width="2.4" stroke-dasharray="1.5 .5 1.2 .8 1.6 2 1.4 .6 1.8 .4 1.1 2"/>
<rect x="2923.4" y="598.5" width="1.2" height="4" fill="#888" opacity=".7"/>
<line x1="2927.0" y1="600.5" x2="3019.0" y2="600.5" stroke="#8a1818" stroke-opacity="0.55" stroke-width="2.2" stroke-dasharray="1.7 .3 1.1 .9 1.5 2 1.3 .7 1.6 .4 1.4 .6 1.2 2"/>
<rect x="3041.4" y="598.5" width="1.2" height="4" fill="#888" opacity=".7"/>
<line x1="3045.0" y1="600.5" x2="3101.0" y2="600.5" stroke="#333333" stroke-opacity="0.55" stroke-width="2.2" stroke-dasharray="1.5 .5 1.2 .8 1.6 2 1.4 .6 1.8 .4 1.1 2"/>
<line x1="2873.0" y1="604.5" x2="2899.0" y2="604.5" stroke="#333333" stroke-opacity="0.55" stroke-width="2.2" stroke-dasharray="1.5 .5 1.2 .8 1.6 2 1.4 .6 1.8 .4 1.1 2"/>
<rect x="2919.4" y="602.5" width="1.2" height="4" fill="#888" opacity=".7"/>
<rect x="2873.4" y="606.5" width="1.2" height="4" fill="#888" opacity=".7"/>
<line x1="2877.0" y1="608.5" x2="2915.0" y2="608.5" stroke="#15157a" stroke-opacity="0.60" stroke-width="2.4" stroke-dasharray="1.7 .3 1.1 .9 1.5 2 1.3 .7 1.6 .4 1.4 .6 1.2 2"/>
<rect x="2923.4" y="606.5" width="1.2" height="4" fill="#888" opacity=".7"/>
<line x1="2927.0" y1="608.5" x2="3039.0" y2="608.5" stroke="#8a1818" stroke-opacity="0.55" stroke-width="2.2" stroke-dasharray="1.5 .5 1.2 .8 1.6 2 1.4 .6 1.8 .4 1.1 2"/>
<rect x="3041.4" y="606.5" width="1.2" height="4" fill="#888" opacity=".7"/>
<line x1="3045.0" y1="608.5" x2="3101.0" y2="608.5" stroke="#333333" stroke-opacity="0.55" stroke-width="2.2" stroke-dasharray="1.7 .3 1.1 .9 1.5 2 1.3 .7 1.6 .4 1.4 .6 1.2 2"/>
<line x1="2873.0" y1="612.5" x2="2891.0" y2="612.5" stroke="#333333" stroke-opacity="0.55" stroke-width="2.2" stroke-dasharray="1.7 .3 1.1 .9 1.5 2 1.3 .7 1.6 .4 1.4 .6 1.2 2"/>
<rect x="2939.4" y="610.5" width="1.2" height="4" fill="#888" opacity=".7"/>
<rect x="2873.4" y="614.5" width="1.2" height="4" fill="#888" opacity=".7"/>
<line x1="2877.0" y1="616.5" x2="2915.0" y2="616.5" stroke="#15157a" stroke-opacity="0.60" stroke-width="2.4" stroke-dasharray="1.5 .5 1.2 .8 1.6 2 1.4 .6 1.8 .4 1.1 2"/>
<rect x="2923.4" y="614.5" width="1.2" height="4" fill="#888" opacity=".7"/>
<line x1="2927.0" y1="616.5" x2="3029.0" y2="616.5" stroke="#8a1818" stroke-opacity="0.55" stroke-width="2.2" stroke-dasharray="1.7 .3 1.1 .9 1.5 2 1.3 .7 1.6 .4 1.4 .6 1.2 2"/>
<rect x="3041.4" y="614.5" width="1.2" height="4" fill="#888" opacity=".7"/>
<line x1="3045.0" y1="616.5" x2="3101.0" y2="616.5" stroke="#333333" stroke-opacity="0.55" stroke-width="2.2" stroke-dasharray="1.5 .5 1.2 .8 1.6 2 1.4 .6 1.8 .4 1.1 2"/>
<line x1="2873.0" y1="620.5" x2="2891.0" y2="620.5" stroke="#333333" stroke-opacity="0.55" stroke-width="2.2" stroke-dasharray="1.5 .5 1.2 .8 1.6 2 1.4 .6 1.8 .4 1.1 2"/>
<rect x="2901.4" y="618.5" width="1.2" height="4" fill="#888" opacity=".7"/>
<rect x="2873.4" y="622.5" width="1.2" height="4" fill="#888" opacity=".7"/>
<line x1="2877.0" y1="624.5" x2="2913.0" y2="624.5" stroke="#15157a" stroke-opacity="0.60" stroke-width="2.4" stroke-dasharray="1.7 .3 1.1 .9 1.5 2 1.3 .7 1.6 .4 1.4 .6 1.2 2"/>
<rect x="2923.4" y="622.5" width="1.2" height="4" fill="#888" opacity=".7"/>
<line x1="2927.0" y1="624.5" x2="3015.0" y2="624.5" stroke="#8a1818" stroke-opacity="0.55" stroke-width="2.2" stroke-dasharray="1.5 .5 1.2 .8 1.6 2 1.4 .6 1.8 .4 1.1 2"/>
<rect x="3041.4" y="622.5" width="1.2" height="4" fill="#888" opacity=".7"/>
<line x1="3045.0" y1="624.5" x2="3101.0" y2="624.5" stroke="#333333" stroke-opacity="0.55" stroke-width="2.2" stroke-dasharray="1.7 .3 1.1 .9 1.5 2 1.3 .7 1.6 .4 1.4 .6 1.2 2"/>
<line x1="2873.0" y1="628.5" x2="2891.0" y2="628.5" stroke="#333333" stroke-opacity="0.55" stroke-width="2.2" stroke-dasharray="1.7 .3 1.1 .9 1.5 2 1.3 .7 1.6 .4 1.4 .6 1.2 2"/>
<rect x="2909.4" y="626.5" width="1.2" height="4" fill="#888" opacity=".7"/>
<rect x="2873.4" y="630.5" width="1.2" height="4" fill="#888" opacity=".7"/>
<line x1="2877.0" y1="632.5" x2="2921.0" y2="632.5" stroke="#15157a" stroke-opacity="0.60" stroke-width="2.4" stroke-dasharray="1.5 .5 1.2 .8 1.6 2 1.4 .6 1.8 .4 1.1 2"/>
<rect x="2919.4" y="630.5" width="1.2" height="4" fill="#888" opacity=".7"/>
<line x1="2923.0" y1="632.5" x2="3015.0" y2="632.5" stroke="#8a1818" stroke-opacity="0.55" stroke-width="2.2" stroke-dasharray="1.7 .3 1.1 .9 1.5 2 1.3 .7 1.6 .4 1.4 .6 1.2 2"/>
<rect x="3029.4" y="630.5" width="1.2" height="4" fill="#888" opacity=".7"/>
<line x1="3033.0" y1="632.5" x2="3077.0" y2="632.5" stroke="#15157a" stroke-opacity="0.60" stroke-width="2.4" stroke-dasharray="1.5 .5 1.2 .8 1.6 2 1.4 .6 1.8 .4 1.1 2"/>
<line x1="3077.0" y1="632.5" x2="3101.0" y2="632.5" stroke="#333333" stroke-opacity="0.55" stroke-width="2.2" stroke-dasharray="1.2 .8 1.7 .3 1.4 2 1.6 .4 1.2 .8 1.5 2"/>
<line x1="2873.0" y1="636.5" x2="2951.0" y2="636.5" stroke="#333333" stroke-opacity="0.55" stroke-width="2.2" stroke-dasharray="1.5 .5 1.2 .8 1.6 2 1.4 .6 1.8 .4 1.1 2"/>
<rect x="2949.4" y="634.5" width="1.2" height="4" fill="#888" opacity=".7"/>
<rect x="2873.4" y="638.5" width="1.2" height="4" fill="#888" opacity=".7"/>
<line x1="2877.0" y1="640.5" x2="2913.0" y2="640.5" stroke="#15157a" stroke-opacity="0.60" stroke-width="2.4" stroke-dasharray="1.7 .3 1.1 .9 1.5 2 1.3 .7 1.6 .4 1.4 .6 1.2 2"/>
<rect x="2921.4" y="638.5" width="1.2" height="4" fill="#888" opacity=".7"/>
<line x1="2925.0" y1="640.5" x2="2999.0" y2="640.5" stroke="#8a1818" stroke-opacity="0.55" stroke-width="2.2" stroke-dasharray="1.5 .5 1.2 .8 1.6 2 1.4 .6 1.8 .4 1.1 2"/>
<rect x="3031.4" y="638.5" width="1.2" height="4" fill="#888" opacity=".7"/>
<line x1="3035.0" y1="640.5" x2="3101.0" y2="640.5" stroke="#15157a" stroke-opacity="0.60" stroke-width="2.4" stroke-dasharray="1.7 .3 1.1 .9 1.5 2 1.3 .7 1.6 .4 1.4 .6 1.2 2"/>
<line x1="2873.0" y1="644.5" x2="2969.0" y2="644.5" stroke="#333333" stroke-opacity="0.55" stroke-width="2.2" stroke-dasharray="1.7 .3 1.1 .9 1.5 2 1.3 .7 1.6 .4 1.4 .6 1.2 2"/>
<rect x="2969.4" y="642.5" width="1.2" height="4" fill="#888" opacity=".7"/>
<line x1="2873.0" y1="652.5" x2="2953.0" y2="652.5" stroke="#8a1010" stroke-opacity="0.75" stroke-width="2.4" stroke-dasharray="1.5 .5 1.2 .8 1.6 2 1.4 .6 1.8 .4 1.1 2"/>
<line x1="2873.0" y1="656.5" x2="2923.0" y2="656.5" stroke="#333333" stroke-opacity="0.55" stroke-width="2.2" stroke-dasharray="1.2 .8 1.7 .3 1.4 2 1.6 .4 1.2 .8 1.5 2"/>
<line x1="2923.0" y1="656.5" x2="2963.0" y2="656.5" stroke="#15157a" stroke-opacity="0.60" stroke-width="2.4" stroke-dasharray="1.7 .3 1.1 .9 1.5 2 1.3 .7 1.6 .4 1.4 .6 1.2 2"/>
<rect x="2873.0" y="659.3" width="1.6" height="2.4" fill="#2060b0" opacity=".8"/>
<line x1="2881.0" y1="660.5" x2="2915.0" y2="660.5" stroke="#15157a" stroke-opacity="0.60" stroke-width="2.4" stroke-dasharray="1.4 .6 1.6 .4 1.2 2 1.5 .5 1.3 .7 1.7 2"/>
<line x1="2915.0" y1="660.5" x2="3001.0" y2="660.5" stroke="#8a1818" stroke-opacity="0.55" stroke-width="2.2" stroke-dasharray="1.5 .5 1.2 .8 1.6 2 1.4 .6 1.8 .4 1.1 2"/>
<rect x="2873.0" y="663.3" width="1.6" height="2.4" fill="#2060b0" opacity=".8"/>
<line x1="2881.0" y1="664.5" x2="2959.0" y2="664.5" stroke="#15157a" stroke-opacity="0.60" stroke-width="2.4" stroke-dasharray="1.5 .5 1.2 .8 1.6 2 1.4 .6 1.8 .4 1.1 2"/>
<rect x="2881.0" y="667.3" width="1.6" height="2.4" fill="#2060b0" opacity=".8"/>
<line x1="2889.0" y1="668.5" x2="2927.0" y2="668.5" stroke="#15157a" stroke-opacity="0.60" stroke-width="2.4" stroke-dasharray="1.2 .8 1.7 .3 1.4 2 1.6 .4 1.2 .8 1.5 2"/>
<line x1="2927.0" y1="668.5" x2="3101.0" y2="668.5" stroke="#333333" stroke-opacity="0.55" stroke-width="2.2" stroke-dasharray="1.7 .3 1.1 .9 1.5 2 1.3 .7 1.6 .4 1.4 .6 1.2 2"/>
<rect x="2881.0" y="671.3" width="1.6" height="2.4" fill="#2060b0" opacity=".8"/>
<line x1="2889.0" y1="672.5" x2="2931.0" y2="672.5" stroke="#15157a" stroke-opacity="0.60" stroke-width="2.4" stroke-dasharray="1.7 .3 1.1 .9 1.5 2 1.3 .7 1.6 .4 1.4 .6 1.2 2"/>
<line x1="2931.0" y1="672.5" x2="3101.0" y2="672.5" stroke="#333333" stroke-opacity="0.55" stroke-width="2.2" stroke-dasharray="1.4 .6 1.6 .4 1.2 2 1.5 .5 1.3 .7 1.7 2"/>
<rect x="2873.0" y="675.3" width="1.6" height="2.4" fill="#2060b0" opacity=".8"/>
<line x1="2881.0" y1="676.5" x2="2905.0" y2="676.5" stroke="#15157a" stroke-opacity="0.60" stroke-width="2.4" stroke-dasharray="1.4 .6 1.6 .4 1.2 2 1.5 .5 1.3 .7 1.7 2"/>
<rect x="2881.0" y="679.3" width="1.6" height="2.4" fill="#2060b0" opacity=".8"/>
<line x1="2889.0" y1="680.5" x2="2959.0" y2="680.5" stroke="#333333" stroke-opacity="0.55" stroke-width="2.2" stroke-dasharray="1.5 .5 1.2 .8 1.6 2 1.4 .6 1.8 .4 1.1 2"/>
<rect x="2881.0" y="683.3" width="1.6" height="2.4" fill="#2060b0" opacity=".8"/>
<line x1="2889.0" y1="684.5" x2="2963.0" y2="684.5" stroke="#333333" stroke-opacity="0.55" stroke-width="2.2" stroke-dasharray="1.2 .8 1.7 .3 1.4 2 1.6 .4 1.2 .8 1.5 2"/>
<rect x="2881.0" y="687.3" width="1.6" height="2.4" fill="#2060b0" opacity=".8"/>
<line x1="2889.0" y1="688.5" x2="2955.0" y2="688.5" stroke="#333333" stroke-opacity="0.55" stroke-width="2.2" stroke-dasharray="1.7 .3 1.1 .9 1.5 2 1.3 .7 1.6 .4 1.4 .6 1.2 2"/>
<line x1="2873.0" y1="696.5" x2="2881.0" y2="696.5" stroke="#333333" stroke-opacity="0.55" stroke-width="2.2" stroke-dasharray="1.4 .6 1.6 .4 1.2 2 1.5 .5 1.3 .7 1.7 2"/>
<line x1="2873.0" y1="704.5" x2="2945.0" y2="704.5" stroke="#8a1010" stroke-opacity="0.75" stroke-width="2.4" stroke-dasharray="1.2 .8 1.7 .3 1.4 2 1.6 .4 1.2 .8 1.5 2"/>
<line x1="2873.0" y1="708.5" x2="2975.0" y2="708.5" stroke="#333333" stroke-opacity="0.55" stroke-width="2.2" stroke-dasharray="1.7 .3 1.1 .9 1.5 2 1.3 .7 1.6 .4 1.4 .6 1.2 2"/>
<rect x="2873.0" y="715.3" width="1.6" height="2.4" fill="#2060b0" opacity=".8"/>
<line x1="2881.0" y1="716.5" x2="2919.0" y2="716.5" stroke="#15157a" stroke-opacity="0.60" stroke-width="2.4" stroke-dasharray="1.2 .8 1.7 .3 1.4 2 1.6 .4 1.2 .8 1.5 2"/>
<line x1="2921.0" y1="716.5" x2="2975.0" y2="716.5" stroke="#8a1818" stroke-opacity="0.55" stroke-width="2.2" stroke-dasharray="1.7 .3 1.1 .9 1.5 2 1.3 .7 1.6 .4 1.4 .6 1.2 2"/>
<line x1="2975.0" y1="716.5" x2="3047.0" y2="716.5" stroke="#333333" stroke-opacity="0.55" stroke-width="2.2" stroke-dasharray="1.4 .6 1.6 .4 1.2 2 1.5 .5 1.3 .7 1.7 2"/>
<line x1="3047.0" y1="716.5" x2="3061.0" y2="716.5" stroke="#8a1818" stroke-opacity="0.55" stroke-width="2.2" stroke-dasharray="1.5 .5 1.2 .8 1.6 2 1.4 .6 1.8 .4 1.1 2"/>
<line x1="3061.0" y1="716.5" x2="3101.0" y2="716.5" stroke="#333333" stroke-opacity="0.55" stroke-width="2.2" stroke-dasharray="1.2 .8 1.7 .3 1.4 2 1.6 .4 1.2 .8 1.5 2"/>
<rect x="2873.0" y="719.3" width="1.6" height="2.4" fill="#2060b0" opacity=".8"/>
<line x1="2881.0" y1="720.5" x2="2911.0" y2="720.5" stroke="#15157a" stroke-opacity="0.60" stroke-width="2.4" stroke-dasharray="1.7 .3 1.1 .9 1.5 2 1.3 .7 1.6 .4 1.4 .6 1.2 2"/>
<line x1="2911.0" y1="720.5" x2="2963.0" y2="720.5" stroke="#8a1818" stroke-opacity="0.55" stroke-width="2.2" stroke-dasharray="1.4 .6 1.6 .4 1.2 2 1.5 .5 1.3 .7 1.7 2"/>
<line x1="2963.0" y1="720.5" x2="2983.0" y2="720.5" stroke="#333333" stroke-opacity="0.55" stroke-width="2.2" stroke-dasharray="1.5 .5 1.2 .8 1.6 2 1.4 .6 1.8 .4 1.1 2"/>
<line x1="2983.0" y1="720.5" x2="3029.0" y2="720.5" stroke="#8a1818" stroke-opacity="0.55" stroke-width="2.2" stroke-dasharray="1.2 .8 1.7 .3 1.4 2 1.6 .4 1.2 .8 1.5 2"/>
<line x1="3029.0" y1="720.5" x2="3031.0" y2="720.5" stroke="#333333" stroke-opacity="0.55" stroke-width="2.2" stroke-dasharray="1.7 .3 1.1 .9 1.5 2 1.3 .7 1.6 .4 1.4 .6 1.2 2"/>
<line x1="3031.0" y1="720.5" x2="3071.0" y2="720.5" stroke="#8a1818" stroke-opacity="0.55" stroke-width="2.2" stroke-dasharray="1.4 .6 1.6 .4 1.2 2 1.5 .5 1.3 .7 1.7 2"/>
<rect x="2881.0" y="723.3" width="1.6" height="2.4" fill="#2060b0" opacity=".8"/>
<line x1="2889.0" y1="724.5" x2="3101.0" y2="724.5" stroke="#333333" stroke-opacity="0.55" stroke-width="2.2" stroke-dasharray="1.4 .6 1.6 .4 1.2 2 1.5 .5 1.3 .7 1.7 2"/>
<line x1="2881.0" y1="728.5" x2="2897.0" y2="728.5" stroke="#333333" stroke-opacity="0.55" stroke-width="2.2" stroke-dasharray="1.4 .6 1.6 .4 1.2 2 1.5 .5 1.3 .7 1.7 2"/>
<rect x="2873.0" y="731.3" width="1.6" height="2.4" fill="#2060b0" opacity=".8"/>
<line x1="2881.0" y1="732.5" x2="2929.0" y2="732.5" stroke="#15157a" stroke-opacity="0.60" stroke-width="2.4" stroke-dasharray="1.2 .8 1.7 .3 1.4 2 1.6 .4 1.2 .8 1.5 2"/>
<line x1="2931.0" y1="732.5" x2="2981.0" y2="732.5" stroke="#8a1818" stroke-opacity="0.55" stroke-width="2.2" stroke-dasharray="1.7 .3 1.1 .9 1.5 2 1.3 .7 1.6 .4 1.4 .6 1.2 2"/>
<line x1="2981.0" y1="732.5" x2="3063.0" y2="732.5" stroke="#333333" stroke-opacity="0.55" stroke-width="2.2" stroke-dasharray="1.4 .6 1.6 .4 1.2 2 1.5 .5 1.3 .7 1.7 2"/>
<line x1="3063.0" y1="732.5" x2="3087.0" y2="732.5" stroke="#8a1818" stroke-opacity="0.55" stroke-width="2.2" stroke-dasharray="1.5 .5 1.2 .8 1.6 2 1.4 .6 1.8 .4 1.1 2"/>
<line x1="3087.0" y1="732.5" x2="3101.0" y2="732.5" stroke="#333333" stroke-opacity="0.55" stroke-width="2.2" stroke-dasharray="1.2 .8 1.7 .3 1.4 2 1.6 .4 1.2 .8 1.5 2"/>
<line x1="2873.0" y1="736.5" x2="2905.0" y2="736.5" stroke="#333333" stroke-opacity="0.55" stroke-width="2.2" stroke-dasharray="1.2 .8 1.7 .3 1.4 2 1.6 .4 1.2 .8 1.5 2"/>
<line x1="2907.0" y1="736.5" x2="2933.0" y2="736.5" stroke="#8a1818" stroke-opacity="0.55" stroke-width="2.2" stroke-dasharray="1.7 .3 1.1 .9 1.5 2 1.3 .7 1.6 .4 1.4 .6 1.2 2"/>
<line x1="2933.0" y1="736.5" x2="2985.0" y2="736.5" stroke="#333333" stroke-opacity="0.55" stroke-width="2.2" stroke-dasharray="1.4 .6 1.6 .4 1.2 2 1.5 .5 1.3 .7 1.7 2"/>
<rect x="2873.0" y="739.3" width="1.6" height="2.4" fill="#2060b0" opacity=".8"/>
<line x1="2881.0" y1="740.5" x2="2911.0" y2="740.5" stroke="#15157a" stroke-opacity="0.60" stroke-width="2.4" stroke-dasharray="1.4 .6 1.6 .4 1.2 2 1.5 .5 1.3 .7 1.7 2"/>
<line x1="2911.0" y1="740.5" x2="2985.0" y2="740.5" stroke="#8a1818" stroke-opacity="0.55" stroke-width="2.2" stroke-dasharray="1.5 .5 1.2 .8 1.6 2 1.4 .6 1.8 .4 1.1 2"/>
<line x1="2985.0" y1="740.5" x2="3101.0" y2="740.5" stroke="#333333" stroke-opacity="0.55" stroke-width="2.2" stroke-dasharray="1.2 .8 1.7 .3 1.4 2 1.6 .4 1.2 .8 1.5 2"/>
<rect x="2873.0" y="743.3" width="1.6" height="2.4" fill="#2060b0" opacity=".8"/>
<line x1="2881.0" y1="744.5" x2="2925.0" y2="744.5" stroke="#15157a" stroke-opacity="0.60" stroke-width="2.4" stroke-dasharray="1.5 .5 1.2 .8 1.6 2 1.4 .6 1.8 .4 1.1 2"/>
<line x1="2925.0" y1="744.5" x2="2955.0" y2="744.5" stroke="#8a1818" stroke-opacity="0.55" stroke-width="2.2" stroke-dasharray="1.2 .8 1.7 .3 1.4 2 1.6 .4 1.2 .8 1.5 2"/>
<line x1="2955.0" y1="744.5" x2="3025.0" y2="744.5" stroke="#333333" stroke-opacity="0.55" stroke-width="2.2" stroke-dasharray="1.7 .3 1.1 .9 1.5 2 1.3 .7 1.6 .4 1.4 .6 1.2 2"/>
<line x1="3025.0" y1="744.5" x2="3045.0" y2="744.5" stroke="#8a1818" stroke-opacity="0.55" stroke-width="2.2" stroke-dasharray="1.4 .6 1.6 .4 1.2 2 1.5 .5 1.3 .7 1.7 2"/>
<line x1="3045.0" y1="744.5" x2="3101.0" y2="744.5" stroke="#333333" stroke-opacity="0.55" stroke-width="2.2" stroke-dasharray="1.5 .5 1.2 .8 1.6 2 1.4 .6 1.8 .4 1.1 2"/>
<line x1="2873.0" y1="748.5" x2="2909.0" y2="748.5" stroke="#333333" stroke-opacity="0.55" stroke-width="2.2" stroke-dasharray="1.5 .5 1.2 .8 1.6 2 1.4 .6 1.8 .4 1.1 2"/>
<rect x="2873.0" y="751.3" width="1.6" height="2.4" fill="#2060b0" opacity=".8"/>
<line x1="2881.0" y1="752.5" x2="2907.0" y2="752.5" stroke="#15157a" stroke-opacity="0.60" stroke-width="2.4" stroke-dasharray="1.7 .3 1.1 .9 1.5 2 1.3 .7 1.6 .4 1.4 .6 1.2 2"/>
<line x1="2907.0" y1="752.5" x2="2953.0" y2="752.5" stroke="#8a1818" stroke-opacity="0.55" stroke-width="2.2" stroke-dasharray="1.4 .6 1.6 .4 1.2 2 1.5 .5 1.3 .7 1.7 2"/>
<line x1="2953.0" y1="752.5" x2="3079.0" y2="752.5" stroke="#333333" stroke-opacity="0.55" stroke-width="2.2" stroke-dasharray="1.5 .5 1.2 .8 1.6 2 1.4 .6 1.8 .4 1.1 2"/>
<line x1="3079.0" y1="752.5" x2="3101.0" y2="752.5" stroke="#8a1818" stroke-opacity="0.55" stroke-width="2.2" stroke-dasharray="1.2 .8 1.7 .3 1.4 2 1.6 .4 1.2 .8 1.5 2"/>
<rect x="2873.0" y="755.3" width="1.6" height="2.4" fill="#2060b0" opacity=".8"/>
<line x1="2881.0" y1="756.5" x2="2925.0" y2="756.5" stroke="#15157a" stroke-opacity="0.60" stroke-width="2.4" stroke-dasharray="1.4 .6 1.6 .4 1.2 2 1.5 .5 1.3 .7 1.7 2"/>
<line x1="2925.0" y1="756.5" x2="2977.0" y2="756.5" stroke="#8a1818" stroke-opacity="0.55" stroke-width="2.2" stroke-dasharray="1.5 .5 1.2 .8 1.6 2 1.4 .6 1.8 .4 1.1 2"/>
<line x1="2977.0" y1="756.5" x2="3101.0" y2="756.5" stroke="#333333" stroke-opacity="0.55" stroke-width="2.2" stroke-dasharray="1.2 .8 1.7 .3 1.4 2 1.6 .4 1.2 .8 1.5 2"/>
<line x1="2873.0" y1="760.5" x2="2947.0" y2="760.5" stroke="#333333" stroke-opacity="0.55" stroke-width="2.2" stroke-dasharray="1.4 .6 1.6 .4 1.2 2 1.5 .5 1.3 .7 1.7 2"/>
<rect x="2873.0" y="763.3" width="1.6" height="2.4" fill="#2060b0" opacity=".8"/>
<line x1="2881.0" y1="764.5" x2="2919.0" y2="764.5" stroke="#15157a" stroke-opacity="0.60" stroke-width="2.4" stroke-dasharray="1.2 .8 1.7 .3 1.4 2 1.6 .4 1.2 .8 1.5 2"/>
<line x1="2919.0" y1="764.5" x2="2967.0" y2="764.5" stroke="#8a1818" stroke-opacity="0.55" stroke-width="2.2" stroke-dasharray="1.7 .3 1.1 .9 1.5 2 1.3 .7 1.6 .4 1.4 .6 1.2 2"/>
<line x1="2967.0" y1="764.5" x2="3101.0" y2="764.5" stroke="#333333" stroke-opacity="0.55" stroke-width="2.2" stroke-dasharray="1.4 .6 1.6 .4 1.2 2 1.5 .5 1.3 .7 1.7 2"/>
<line x1="2873.0" y1="768.5" x2="2893.0" y2="768.5" stroke="#333333" stroke-opacity="0.55" stroke-width="2.2" stroke-dasharray="1.2 .8 1.7 .3 1.4 2 1.6 .4 1.2 .8 1.5 2"/>
<rect x="2873.0" y="771.3" width="1.6" height="2.4" fill="#2060b0" opacity=".8"/>
<line x1="2881.0" y1="772.5" x2="2915.0" y2="772.5" stroke="#15157a" stroke-opacity="0.60" stroke-width="2.4" stroke-dasharray="1.4 .6 1.6 .4 1.2 2 1.5 .5 1.3 .7 1.7 2"/>
<line x1="2915.0" y1="772.5" x2="2987.0" y2="772.5" stroke="#8a1818" stroke-opacity="0.55" stroke-width="2.2" stroke-dasharray="1.5 .5 1.2 .8 1.6 2 1.4 .6 1.8 .4 1.1 2"/>
<line x1="2987.0" y1="772.5" x2="3101.0" y2="772.5" stroke="#333333" stroke-opacity="0.55" stroke-width="2.2" stroke-dasharray="1.2 .8 1.7 .3 1.4 2 1.6 .4 1.2 .8 1.5 2"/>
<rect x="2873.0" y="775.3" width="1.6" height="2.4" fill="#2060b0" opacity=".8"/>
<line x1="2881.0" y1="776.5" x2="2909.0" y2="776.5" stroke="#15157a" stroke-opacity="0.60" stroke-width="2.4" stroke-dasharray="1.5 .5 1.2 .8 1.6 2 1.4 .6 1.8 .4 1.1 2"/>
<line x1="2909.0" y1="776.5" x2="2989.0" y2="776.5" stroke="#8a1818" stroke-opacity="0.55" stroke-width="2.2" stroke-dasharray="1.2 .8 1.7 .3 1.4 2 1.6 .4 1.2 .8 1.5 2"/>
<line x1="2989.0" y1="776.5" x2="3079.0" y2="776.5" stroke="#333333" stroke-opacity="0.55" stroke-width="2.2" stroke-dasharray="1.7 .3 1.1 .9 1.5 2 1.3 .7 1.6 .4 1.4 .6 1.2 2"/>
<line x1="2873.0" y1="780.5" x2="2881.0" y2="780.5" stroke="#333333" stroke-opacity="0.55" stroke-width="2.2" stroke-dasharray="1.5 .5 1.2 .8 1.6 2 1.4 .6 1.8 .4 1.1 2"/>
<line x1="2873.0" y1="788.5" x2="2961.0" y2="788.5" stroke="#8a1010" stroke-opacity="0.75" stroke-width="2.4" stroke-dasharray="1.7 .3 1.1 .9 1.5 2 1.3 .7 1.6 .4 1.4 .6 1.2 2"/>
<line x1="2873.0" y1="792.5" x2="2963.0" y2="792.5" stroke="#333333" stroke-opacity="0.55" stroke-width="2.2" stroke-dasharray="1.4 .6 1.6 .4 1.2 2 1.5 .5 1.3 .7 1.7 2"/>
<rect x="2873.0" y="799.3" width="1.6" height="2.4" fill="#2060b0" opacity=".8"/>
<line x1="2881.0" y1="800.5" x2="2905.0" y2="800.5" stroke="#15157a" stroke-opacity="0.60" stroke-width="2.4" stroke-dasharray="1.7 .3 1.1 .9 1.5 2 1.3 .7 1.6 .4 1.4 .6 1.2 2"/>
<line x1="2907.0" y1="800.5" x2="2949.0" y2="800.5" stroke="#8a1818" stroke-opacity="0.55" stroke-width="2.2" stroke-dasharray="1.4 .6 1.6 .4 1.2 2 1.5 .5 1.3 .7 1.7 2"/>
<line x1="2949.0" y1="800.5" x2="3101.0" y2="800.5" stroke="#333333" stroke-opacity="0.55" stroke-width="2.2" stroke-dasharray="1.5 .5 1.2 .8 1.6 2 1.4 .6 1.8 .4 1.1 2"/>
<line x1="2873.0" y1="804.5" x2="2943.0" y2="804.5" stroke="#333333" stroke-opacity="0.55" stroke-width="2.2" stroke-dasharray="1.7 .3 1.1 .9 1.5 2 1.3 .7 1.6 .4 1.4 .6 1.2 2"/>
<rect x="2873.0" y="807.3" width="1.6" height="2.4" fill="#2060b0" opacity=".8"/>
<line x1="2881.0" y1="808.5" x2="2927.0" y2="808.5" stroke="#333333" stroke-opacity="0.55" stroke-width="2.2" stroke-dasharray="1.5 .5 1.2 .8 1.6 2 1.4 .6 1.8 .4 1.1 2"/>
<line x1="2927.0" y1="808.5" x2="2971.0" y2="808.5" stroke="#15157a" stroke-opacity="0.60" stroke-width="2.4" stroke-dasharray="1.2 .8 1.7 .3 1.4 2 1.6 .4 1.2 .8 1.5 2"/>
<line x1="2971.0" y1="808.5" x2="3101.0" y2="808.5" stroke="#333333" stroke-opacity="0.55" stroke-width="2.2" stroke-dasharray="1.7 .3 1.1 .9 1.5 2 1.3 .7 1.6 .4 1.4 .6 1.2 2"/>
<rect x="2873.0" y="811.3" width="1.6" height="2.4" fill="#2060b0" opacity=".8"/>
<line x1="2881.0" y1="812.5" x2="2907.0" y2="812.5" stroke="#15157a" stroke-opacity="0.60" stroke-width="2.4" stroke-dasharray="1.2 .8 1.7 .3 1.4 2 1.6 .4 1.2 .8 1.5 2"/>
<line x1="2907.0" y1="812.5" x2="2969.0" y2="812.5" stroke="#8a1818" stroke-opacity="0.55" stroke-width="2.2" stroke-dasharray="1.7 .3 1.1 .9 1.5 2 1.3 .7 1.6 .4 1.4 .6 1.2 2"/>
<line x1="2969.0" y1="812.5" x2="2981.0" y2="812.5" stroke="#333333" stroke-opacity="0.55" stroke-width="2.2" stroke-dasharray="1.4 .6 1.6 .4 1.2 2 1.5 .5 1.3 .7 1.7 2"/>
<line x1="2981.0" y1="812.5" x2="3003.0" y2="812.5" stroke="#8a1818" stroke-opacity="0.55" stroke-width="2.2" stroke-dasharray="1.5 .5 1.2 .8 1.6 2 1.4 .6 1.8 .4 1.1 2"/>
<line x1="3003.0" y1="812.5" x2="3101.0" y2="812.5" stroke="#333333" stroke-opacity="0.55" stroke-width="2.2" stroke-dasharray="1.2 .8 1.7 .3 1.4 2 1.6 .4 1.2 .8 1.5 2"/>
<line x1="2873.0" y1="816.5" x2="2903.0" y2="816.5" stroke="#8a1818" stroke-opacity="0.55" stroke-width="2.2" stroke-dasharray="1.2 .8 1.7 .3 1.4 2 1.6 .4 1.2 .8 1.5 2"/>
<line x1="2903.0" y1="816.5" x2="2911.0" y2="816.5" stroke="#333333" stroke-opacity="0.55" stroke-width="2.2" stroke-dasharray="1.7 .3 1.1 .9 1.5 2 1.3 .7 1.6 .4 1.4 .6 1.2 2"/>
<line x1="2911.0" y1="816.5" x2="2921.0" y2="816.5" stroke="#8a1818" stroke-opacity="0.55" stroke-width="2.2" stroke-dasharray="1.4 .6 1.6 .4 1.2 2 1.5 .5 1.3 .7 1.7 2"/>
<line x1="2921.0" y1="816.5" x2="2999.0" y2="816.5" stroke="#333333" stroke-opacity="0.55" stroke-width="2.2" stroke-dasharray="1.5 .5 1.2 .8 1.6 2 1.4 .6 1.8 .4 1.1 2"/>
<line x1="2873.0" y1="828.5" x2="2881.0" y2="828.5" stroke="#333333" stroke-opacity="0.55" stroke-width="2.2" stroke-dasharray="1.5 .5 1.2 .8 1.6 2 1.4 .6 1.8 .4 1.1 2"/>
<line x1="2873.0" y1="836.5" x2="2967.0" y2="836.5" stroke="#8a1010" stroke-opacity="0.75" stroke-width="2.4" stroke-dasharray="1.7 .3 1.1 .9 1.5 2 1.3 .7 1.6 .4 1.4 .6 1.2 2"/>
<rect x="2873.0" y="839.3" width="1.6" height="2.4" fill="#2060b0" opacity=".8"/>
<line x1="2881.0" y1="840.5" x2="2905.0" y2="840.5" stroke="#15157a" stroke-opacity="0.60" stroke-width="2.4" stroke-dasharray="1.5 .5 1.2 .8 1.6 2 1.4 .6 1.8 .4 1.1 2"/>
<line x1="2905.0" y1="840.5" x2="2943.0" y2="840.5" stroke="#8a1818" stroke-opacity="0.55" stroke-width="2.2" stroke-dasharray="1.2 .8 1.7 .3 1.4 2 1.6 .4 1.2 .8 1.5 2"/>
<line x1="2943.0" y1="840.5" x2="3023.0" y2="840.5" stroke="#333333" stroke-opacity="0.55" stroke-width="2.2" stroke-dasharray="1.7 .3 1.1 .9 1.5 2 1.3 .7 1.6 .4 1.4 .6 1.2 2"/>
<line x1="3025.0" y1="840.5" x2="3055.0" y2="840.5" stroke="#8a1818" stroke-opacity="0.55" stroke-width="2.2" stroke-dasharray="1.4 .6 1.6 .4 1.2 2 1.5 .5 1.3 .7 1.7 2"/>
<line x1="3055.0" y1="840.5" x2="3101.0" y2="840.5" stroke="#333333" stroke-opacity="0.55" stroke-width="2.2" stroke-dasharray="1.5 .5 1.2 .8 1.6 2 1.4 .6 1.8 .4 1.1 2"/>
<rect x="2873.0" y="843.3" width="1.6" height="2.4" fill="#2060b0" opacity=".8"/>
<line x1="2881.0" y1="844.5" x2="2929.0" y2="844.5" stroke="#15157a" stroke-opacity="0.60" stroke-width="2.4" stroke-dasharray="1.2 .8 1.7 .3 1.4 2 1.6 .4 1.2 .8 1.5 2"/>
<line x1="2929.0" y1="844.5" x2="2961.0" y2="844.5" stroke="#333333" stroke-opacity="0.55" stroke-width="2.2" stroke-dasharray="1.7 .3 1.1 .9 1.5 2 1.3 .7 1.6 .4 1.4 .6 1.2 2"/>
<line x1="2961.0" y1="844.5" x2="2975.0" y2="844.5" stroke="#8a1818" stroke-opacity="0.55" stroke-width="2.2" stroke-dasharray="1.4 .6 1.6 .4 1.2 2 1.5 .5 1.3 .7 1.7 2"/>
<line x1="2975.0" y1="844.5" x2="2991.0" y2="844.5" stroke="#333333" stroke-opacity="0.55" stroke-width="2.2" stroke-dasharray="1.5 .5 1.2 .8 1.6 2 1.4 .6 1.8 .4 1.1 2"/>
<line x1="2991.0" y1="844.5" x2="3015.0" y2="844.5" stroke="#8a1818" stroke-opacity="0.55" stroke-width="2.2" stroke-dasharray="1.2 .8 1.7 .3 1.4 2 1.6 .4 1.2 .8 1.5 2"/>
<line x1="3015.0" y1="844.5" x2="3101.0" y2="844.5" stroke="#333333" stroke-opacity="0.55" stroke-width="2.2" stroke-dasharray="1.7 .3 1.1 .9 1.5 2 1.3 .7 1.6 .4 1.4 .6 1.2 2"/>
<line x1="2873.0" y1="848.5" x2="3011.0" y2="848.5" stroke="#333333" stroke-opacity="0.55" stroke-width="2.2" stroke-dasharray="1.2 .8 1.7 .3 1.4 2 1.6 .4 1.2 .8 1.5 2"/>
<rect x="2873.0" y="851.3" width="1.6" height="2.4" fill="#2060b0" opacity=".8"/>
<line x1="2881.0" y1="852.5" x2="2931.0" y2="852.5" stroke="#15157a" stroke-opacity="0.60" stroke-width="2.4" stroke-dasharray="1.4 .6 1.6 .4 1.2 2 1.5 .5 1.3 .7 1.7 2"/>
<line x1="2931.0" y1="852.5" x2="2957.0" y2="852.5" stroke="#8a1818" stroke-opacity="0.55" stroke-width="2.2" stroke-dasharray="1.5 .5 1.2 .8 1.6 2 1.4 .6 1.8 .4 1.1 2"/>
<line x1="2957.0" y1="852.5" x2="3101.0" y2="852.5" stroke="#333333" stroke-opacity="0.55" stroke-width="2.2" stroke-dasharray="1.2 .8 1.7 .3 1.4 2 1.6 .4 1.2 .8 1.5 2"/>
<line x1="2873.0" y1="856.5" x2="2925.0" y2="856.5" stroke="#333333" stroke-opacity="0.55" stroke-width="2.2" stroke-dasharray="1.4 .6 1.6 .4 1.2 2 1.5 .5 1.3 .7 1.7 2"/>
<rect x="2873.0" y="859.3" width="1.6" height="2.4" fill="#2060b0" opacity=".8"/>
<line x1="2881.0" y1="860.5" x2="2919.0" y2="860.5" stroke="#15157a" stroke-opacity="0.60" stroke-width="2.4" stroke-dasharray="1.2 .8 1.7 .3 1.4 2 1.6 .4 1.2 .8 1.5 2"/>
<line x1="2919.0" y1="860.5" x2="2957.0" y2="860.5" stroke="#8a1818" stroke-opacity="0.55" stroke-width="2.2" stroke-dasharray="1.7 .3 1.1 .9 1.5 2 1.3 .7 1.6 .4 1.4 .6 1.2 2"/>
<line x1="2957.0" y1="860.5" x2="3101.0" y2="860.5" stroke="#333333" stroke-opacity="0.55" stroke-width="2.2" stroke-dasharray="1.4 .6 1.6 .4 1.2 2 1.5 .5 1.3 .7 1.7 2"/>
<rect x="2873.0" y="863.3" width="1.6" height="2.4" fill="#2060b0" opacity=".8"/>
<line x1="2881.0" y1="864.5" x2="2937.0" y2="864.5" stroke="#15157a" stroke-opacity="0.60" stroke-width="2.4" stroke-dasharray="1.7 .3 1.1 .9 1.5 2 1.3 .7 1.6 .4 1.4 .6 1.2 2"/>
<rect x="2881.0" y="867.3" width="1.6" height="2.4" fill="#2060b0" opacity=".8"/>
<line x1="2889.0" y1="868.5" x2="2919.0" y2="868.5" stroke="#15157a" stroke-opacity="0.60" stroke-width="2.4" stroke-dasharray="1.4 .6 1.6 .4 1.2 2 1.5 .5 1.3 .7 1.7 2"/>
<line x1="2919.0" y1="868.5" x2="2951.0" y2="868.5" stroke="#333333" stroke-opacity="0.55" stroke-width="2.2" stroke-dasharray="1.5 .5 1.2 .8 1.6 2 1.4 .6 1.8 .4 1.1 2"/>
<line x1="2951.0" y1="868.5" x2="3005.0" y2="868.5" stroke="#8a1818" stroke-opacity="0.55" stroke-width="2.2" stroke-dasharray="1.2 .8 1.7 .3 1.4 2 1.6 .4 1.2 .8 1.5 2"/>
<line x1="3005.0" y1="868.5" x2="3101.0" y2="868.5" stroke="#333333" stroke-opacity="0.55" stroke-width="2.2" stroke-dasharray="1.7 .3 1.1 .9 1.5 2 1.3 .7 1.6 .4 1.4 .6 1.2 2"/>
<line x1="2881.0" y1="872.5" x2="2915.0" y2="872.5" stroke="#333333" stroke-opacity="0.55" stroke-width="2.2" stroke-dasharray="1.4 .6 1.6 .4 1.2 2 1.5 .5 1.3 .7 1.7 2"/>
<line x1="2915.0" y1="872.5" x2="2955.0" y2="872.5" stroke="#8a1818" stroke-opacity="0.55" stroke-width="2.2" stroke-dasharray="1.5 .5 1.2 .8 1.6 2 1.4 .6 1.8 .4 1.1 2"/>
<rect x="2881.0" y="875.3" width="1.6" height="2.4" fill="#2060b0" opacity=".8"/>
<line x1="2889.0" y1="876.5" x2="2929.0" y2="876.5" stroke="#15157a" stroke-opacity="0.60" stroke-width="2.4" stroke-dasharray="1.2 .8 1.7 .3 1.4 2 1.6 .4 1.2 .8 1.5 2"/>
<line x1="2929.0" y1="876.5" x2="2933.0" y2="876.5" stroke="#333333" stroke-opacity="0.55" stroke-width="2.2" stroke-dasharray="1.7 .3 1.1 .9 1.5 2 1.3 .7 1.6 .4 1.4 .6 1.2 2"/>
<line x1="2933.0" y1="876.5" x2="2965.0" y2="876.5" stroke="#8a1818" stroke-opacity="0.55" stroke-width="2.2" stroke-dasharray="1.4 .6 1.6 .4 1.2 2 1.5 .5 1.3 .7 1.7 2"/>
<line x1="2965.0" y1="876.5" x2="3031.0" y2="876.5" stroke="#333333" stroke-opacity="0.55" stroke-width="2.2" stroke-dasharray="1.5 .5 1.2 .8 1.6 2 1.4 .6 1.8 .4 1.1 2"/>
<line x1="3031.0" y1="876.5" x2="3065.0" y2="876.5" stroke="#8a1818" stroke-opacity="0.55" stroke-width="2.2" stroke-dasharray="1.2 .8 1.7 .3 1.4 2 1.6 .4 1.2 .8 1.5 2"/>
<line x1="3065.0" y1="876.5" x2="3101.0" y2="876.5" stroke="#333333" stroke-opacity="0.55" stroke-width="2.2" stroke-dasharray="1.7 .3 1.1 .9 1.5 2 1.3 .7 1.6 .4 1.4 .6 1.2 2"/>
<line x1="2881.0" y1="880.5" x2="3101.0" y2="880.5" stroke="#333333" stroke-opacity="0.55" stroke-width="2.2" stroke-dasharray="1.2 .8 1.7 .3 1.4 2 1.6 .4 1.2 .8 1.5 2"/>
<rect x="2881.0" y="883.3" width="1.6" height="2.4" fill="#2060b0" opacity=".8"/>
<line x1="2889.0" y1="884.5" x2="2923.0" y2="884.5" stroke="#15157a" stroke-opacity="0.60" stroke-width="2.4" stroke-dasharray="1.4 .6 1.6 .4 1.2 2 1.5 .5 1.3 .7 1.7 2"/>
<line x1="2923.0" y1="884.5" x2="2963.0" y2="884.5" stroke="#8a1818" stroke-opacity="0.55" stroke-width="2.2" stroke-dasharray="1.5 .5 1.2 .8 1.6 2 1.4 .6 1.8 .4 1.1 2"/>
<line x1="2963.0" y1="884.5" x2="3063.0" y2="884.5" stroke="#333333" stroke-opacity="0.55" stroke-width="2.2" stroke-dasharray="1.2 .8 1.7 .3 1.4 2 1.6 .4 1.2 .8 1.5 2"/>
<line x1="3063.0" y1="884.5" x2="3101.0" y2="884.5" stroke="#8a1818" stroke-opacity="0.55" stroke-width="2.2" stroke-dasharray="1.7 .3 1.1 .9 1.5 2 1.3 .7 1.6 .4 1.4 .6 1.2 2"/>
<line x1="2881.0" y1="888.5" x2="2961.0" y2="888.5" stroke="#333333" stroke-opacity="0.55" stroke-width="2.2" stroke-dasharray="1.4 .6 1.6 .4 1.2 2 1.5 .5 1.3 .7 1.7 2"/>
<line x1="2873.0" y1="896.5" x2="2881.0" y2="896.5" stroke="#333333" stroke-opacity="0.55" stroke-width="2.2" stroke-dasharray="1.2 .8 1.7 .3 1.4 2 1.6 .4 1.2 .8 1.5 2"/>
<line x1="2873.0" y1="904.5" x2="2947.0" y2="904.5" stroke="#8a1010" stroke-opacity="0.75" stroke-width="2.4" stroke-dasharray="1.4 .6 1.6 .4 1.2 2 1.5 .5 1.3 .7 1.7 2"/>
<rect x="2873.0" y="907.3" width="1.6" height="2.4" fill="#2060b0" opacity=".8"/>
<line x1="2881.0" y1="908.5" x2="2919.0" y2="908.5" stroke="#15157a" stroke-opacity="0.60" stroke-width="2.4" stroke-dasharray="1.2 .8 1.7 .3 1.4 2 1.6 .4 1.2 .8 1.5 2"/>
<line x1="2919.0" y1="908.5" x2="2971.0" y2="908.5" stroke="#8a1818" stroke-opacity="0.55" stroke-width="2.2" stroke-dasharray="1.7 .3 1.1 .9 1.5 2 1.3 .7 1.6 .4 1.4 .6 1.2 2"/>
<line x1="2971.0" y1="908.5" x2="3023.0" y2="908.5" stroke="#333333" stroke-opacity="0.55" stroke-width="2.2" stroke-dasharray="1.4 .6 1.6 .4 1.2 2 1.5 .5 1.3 .7 1.7 2"/>
<line x1="3023.0" y1="908.5" x2="3067.0" y2="908.5" stroke="#8a1818" stroke-opacity="0.55" stroke-width="2.2" stroke-dasharray="1.5 .5 1.2 .8 1.6 2 1.4 .6 1.8 .4 1.1 2"/>
<line x1="3067.0" y1="908.5" x2="3101.0" y2="908.5" stroke="#333333" stroke-opacity="0.55" stroke-width="2.2" stroke-dasharray="1.2 .8 1.7 .3 1.4 2 1.6 .4 1.2 .8 1.5 2"/>
<rect x="2873.0" y="911.3" width="1.6" height="2.4" fill="#2060b0" opacity=".8"/>
<line x1="2881.0" y1="912.5" x2="2917.0" y2="912.5" stroke="#15157a" stroke-opacity="0.60" stroke-width="2.4" stroke-dasharray="1.7 .3 1.1 .9 1.5 2 1.3 .7 1.6 .4 1.4 .6 1.2 2"/>
<line x1="2921.0" y1="912.5" x2="2995.0" y2="912.5" stroke="#8a1818" stroke-opacity="0.55" stroke-width="2.2" stroke-dasharray="1.4 .6 1.6 .4 1.2 2 1.5 .5 1.3 .7 1.7 2"/>
<line x1="2995.0" y1="912.5" x2="3101.0" y2="912.5" stroke="#333333" stroke-opacity="0.55" stroke-width="2.2" stroke-dasharray="1.5 .5 1.2 .8 1.6 2 1.4 .6 1.8 .4 1.1 2"/>
<rect x="2873.0" y="915.3" width="1.6" height="2.4" fill="#2060b0" opacity=".8"/>
<line x1="2881.0" y1="916.5" x2="2907.0" y2="916.5" stroke="#15157a" stroke-opacity="0.60" stroke-width="2.4" stroke-dasharray="1.4 .6 1.6 .4 1.2 2 1.5 .5 1.3 .7 1.7 2"/>
<line x1="2907.0" y1="916.5" x2="2927.0" y2="916.5" stroke="#333333" stroke-opacity="0.55" stroke-width="2.2" stroke-dasharray="1.5 .5 1.2 .8 1.6 2 1.4 .6 1.8 .4 1.1 2"/>
<line x1="2927.0" y1="916.5" x2="2957.0" y2="916.5" stroke="#8a1818" stroke-opacity="0.55" stroke-width="2.2" stroke-dasharray="1.2 .8 1.7 .3 1.4 2 1.6 .4 1.2 .8 1.5 2"/>
<line x1="2957.0" y1="916.5" x2="3019.0" y2="916.5" stroke="#333333" stroke-opacity="0.55" stroke-width="2.2" stroke-dasharray="1.7 .3 1.1 .9 1.5 2 1.3 .7 1.6 .4 1.4 .6 1.2 2"/>
<line x1="2873.0" y1="924.5" x2="2881.0" y2="924.5" stroke="#333333" stroke-opacity="0.55" stroke-width="2.2" stroke-dasharray="1.5 .5 1.2 .8 1.6 2 1.4 .6 1.8 .4 1.1 2"/>
<line x1="2873.0" y1="932.5" x2="2967.0" y2="932.5" stroke="#8a1010" stroke-opacity="0.75" stroke-width="2.4" stroke-dasharray="1.7 .3 1.1 .9 1.5 2 1.3 .7 1.6 .4 1.4 .6 1.2 2"/>
<rect x="2873.0" y="935.3" width="1.6" height="2.4" fill="#2060b0" opacity=".8"/>
<line x1="2877.0" y1="936.5" x2="2901.0" y2="936.5" stroke="#333333" stroke-opacity="0.55" stroke-width="2.2" stroke-dasharray="1.5 .5 1.2 .8 1.6 2 1.4 .6 1.8 .4 1.1 2"/>
<line x1="2901.0" y1="936.5" x2="2971.0" y2="936.5" stroke="#8a1818" stroke-opacity="0.55" stroke-width="2.2" stroke-dasharray="1.2 .8 1.7 .3 1.4 2 1.6 .4 1.2 .8 1.5 2"/>
<line x1="2873.0" y1="944.5" x2="3071.0" y2="944.5" stroke="#333333" stroke-opacity="0.55" stroke-width="2.2" stroke-dasharray="1.2 .8 1.7 .3 1.4 2 1.6 .4 1.2 .8 1.5 2"/>
<rect x="2873.4" y="950.5" width="1.2" height="4" fill="#888" opacity=".7"/>
<line x1="2877.0" y1="952.5" x2="2915.0" y2="952.5" stroke="#333333" stroke-opacity="0.55" stroke-width="2.2" stroke-dasharray="1.5 .5 1.2 .8 1.6 2 1.4 .6 1.8 .4 1.1 2"/>
<rect x="2919.4" y="950.5" width="1.2" height="4" fill="#888" opacity=".7"/>
<line x1="2923.0" y1="952.5" x2="2955.0" y2="952.5" stroke="#333333" stroke-opacity="0.55" stroke-width="2.2" stroke-dasharray="1.7 .3 1.1 .9 1.5 2 1.3 .7 1.6 .4 1.4 .6 1.2 2"/>
<rect x="3033.4" y="950.5" width="1.2" height="4" fill="#888" opacity=".7"/>
<line x1="2873.0" y1="956.5" x2="2891.0" y2="956.5" stroke="#333333" stroke-opacity="0.55" stroke-width="2.2" stroke-dasharray="1.5 .5 1.2 .8 1.6 2 1.4 .6 1.8 .4 1.1 2"/>
<rect x="3003.4" y="954.5" width="1.2" height="4" fill="#888" opacity=".7"/>
<rect x="2873.4" y="958.5" width="1.2" height="4" fill="#888" opacity=".7"/>
<rect x="2877.0" y="960.2" width="40.0" height="1.4" fill="#999" opacity=".8"/>
<rect x="2919.4" y="958.5" width="1.2" height="4" fill="#888" opacity=".7"/>
<rect x="2923.0" y="960.2" width="108.0" height="1.4" fill="#999" opacity=".8"/>
<rect x="3033.4" y="958.5" width="1.2" height="4" fill="#888" opacity=".7"/>
<rect x="2873.0" y="964.2" width="130.0" height="1.4" fill="#999" opacity=".8"/>
<rect x="3003.4" y="962.5" width="1.2" height="4" fill="#888" opacity=".7"/>
<rect x="2873.4" y="966.5" width="1.2" height="4" fill="#888" opacity=".7"/>
<line x1="2877.0" y1="968.5" x2="2905.0" y2="968.5" stroke="#15157a" stroke-opacity="0.60" stroke-width="2.4" stroke-dasharray="1.5 .5 1.2 .8 1.6 2 1.4 .6 1.8 .4 1.1 2"/>
<rect x="2919.4" y="966.5" width="1.2" height="4" fill="#888" opacity=".7"/>
<line x1="2923.0" y1="968.5" x2="3009.0" y2="968.5" stroke="#8a1818" stroke-opacity="0.55" stroke-width="2.2" stroke-dasharray="1.7 .3 1.1 .9 1.5 2 1.3 .7 1.6 .4 1.4 .6 1.2 2"/>
<rect x="3033.4" y="966.5" width="1.2" height="4" fill="#888" opacity=".7"/>
<line x1="3037.0" y1="968.5" x2="3101.0" y2="968.5" stroke="#333333" stroke-opacity="0.55" stroke-width="2.2" stroke-dasharray="1.5 .5 1.2 .8 1.6 2 1.4 .6 1.8 .4 1.1 2"/>
<line x1="2873.0" y1="972.5" x2="2889.0" y2="972.5" stroke="#333333" stroke-opacity="0.55" stroke-width="2.2" stroke-dasharray="1.5 .5 1.2 .8 1.6 2 1.4 .6 1.8 .4 1.1 2"/>
<rect x="2901.4" y="970.5" width="1.2" height="4" fill="#888" opacity=".7"/>
<rect x="2873.4" y="974.5" width="1.2" height="4" fill="#888" opacity=".7"/>
<line x1="2877.0" y1="976.5" x2="2917.0" y2="976.5" stroke="#15157a" stroke-opacity="0.60" stroke-width="2.4" stroke-dasharray="1.7 .3 1.1 .9 1.5 2 1.3 .7 1.6 .4 1.4 .6 1.2 2"/>
<rect x="2919.4" y="974.5" width="1.2" height="4" fill="#888" opacity=".7"/>
<line x1="2923.0" y1="976.5" x2="3019.0" y2="976.5" stroke="#8a1818" stroke-opacity="0.55" stroke-width="2.2" stroke-dasharray="1.5 .5 1.2 .8 1.6 2 1.4 .6 1.8 .4 1.1 2"/>
<rect x="3033.4" y="974.5" width="1.2" height="4" fill="#888" opacity=".7"/>
<line x1="3037.0" y1="976.5" x2="3101.0" y2="976.5" stroke="#333333" stroke-opacity="0.55" stroke-width="2.2" stroke-dasharray="1.7 .3 1.1 .9 1.5 2 1.3 .7 1.6 .4 1.4 .6 1.2 2"/>
<line x1="2873.0" y1="980.5" x2="2891.0" y2="980.5" stroke="#333333" stroke-opacity="0.55" stroke-width="2.2" stroke-dasharray="1.7 .3 1.1 .9 1.5 2 1.3 .7 1.6 .4 1.4 .6 1.2 2"/>
<rect x="2891.4" y="978.5" width="1.2" height="4" fill="#888" opacity=".7"/>
<rect x="2873.4" y="982.5" width="1.2" height="4" fill="#888" opacity=".7"/>
<line x1="2877.0" y1="984.5" x2="2915.0" y2="984.5" stroke="#15157a" stroke-opacity="0.60" stroke-width="2.4" stroke-dasharray="1.5 .5 1.2 .8 1.6 2 1.4 .6 1.8 .4 1.1 2"/>
<rect x="2919.4" y="982.5" width="1.2" height="4" fill="#888" opacity=".7"/>
<line x1="2923.0" y1="984.5" x2="3017.0" y2="984.5" stroke="#8a1818" stroke-opacity="0.55" stroke-width="2.2" stroke-dasharray="1.7 .3 1.1 .9 1.5 2 1.3 .7 1.6 .4 1.4 .6 1.2 2"/>
<rect x="3033.4" y="982.5" width="1.2" height="4" fill="#888" opacity=".7"/>
<line x1="3037.0" y1="984.5" x2="3101.0" y2="984.5" stroke="#333333" stroke-opacity="0.55" stroke-width="2.2" stroke-dasharray="1.5 .5 1.2 .8 1.6 2 1.4 .6 1.8 .4 1.1 2"/>
<line x1="2873.0" y1="988.5" x2="2885.0" y2="988.5" stroke="#333333" stroke-opacity="0.55" stroke-width="2.2" stroke-dasharray="1.5 .5 1.2 .8 1.6 2 1.4 .6 1.8 .4 1.1 2"/>
<rect x="2883.4" y="986.5" width="1.2" height="4" fill="#888" opacity=".7"/>
<rect x="2873.4" y="990.5" width="1.2" height="4" fill="#888" opacity=".7"/>
<line x1="2877.0" y1="992.5" x2="2905.0" y2="992.5" stroke="#15157a" stroke-opacity="0.60" stroke-width="2.4" stroke-dasharray="1.7 .3 1.1 .9 1.5 2 1.3 .7 1.6 .4 1.4 .6 1.2 2"/>
<rect x="2919.4" y="990.5" width="1.2" height="4" fill="#888" opacity=".7"/>
<line x1="2923.0" y1="992.5" x2="3027.0" y2="992.5" stroke="#8a1818" stroke-opacity="0.55" stroke-width="2.2" stroke-dasharray="1.5 .5 1.2 .8 1.6 2 1.4 .6 1.8 .4 1.1 2"/>
<rect x="3037.4" y="990.5" width="1.2" height="4" fill="#888" opacity=".7"/>
<line x1="3041.0" y1="992.5" x2="3101.0" y2="992.5" stroke="#333333" stroke-opacity="0.55" stroke-width="2.2" stroke-dasharray="1.7 .3 1.1 .9 1.5 2 1.3 .7 1.6 .4 1.4 .6 1.2 2"/>
<line x1="2873.0" y1="996.5" x2="2911.0" y2="996.5" stroke="#333333" stroke-opacity="0.55" stroke-width="2.2" stroke-dasharray="1.7 .3 1.1 .9 1.5 2 1.3 .7 1.6 .4 1.4 .6 1.2 2"/>
<rect x="2917.4" y="994.5" width="1.2" height="4" fill="#888" opacity=".7"/>
<rect x="2873.4" y="998.5" width="1.2" height="4" fill="#888" opacity=".7"/>
<line x1="2877.0" y1="1000.5" x2="2911.0" y2="1000.5" stroke="#15157a" stroke-opacity="0.60" stroke-width="2.4" stroke-dasharray="1.5 .5 1.2 .8 1.6 2 1.4 .6 1.8 .4 1.1 2"/>
<rect x="2919.4" y="998.5" width="1.2" height="4" fill="#888" opacity=".7"/>
<line x1="2923.0" y1="1000.5" x2="3019.0" y2="1000.5" stroke="#8a1818" stroke-opacity="0.55" stroke-width="2.2" stroke-dasharray="1.7 .3 1.1 .9 1.5 2 1.3 .7 1.6 .4 1.4 .6 1.2 2"/>
<rect x="3033.4" y="998.5" width="1.2" height="4" fill="#888" opacity=".7"/>
<line x1="3037.0" y1="1000.5" x2="3101.0" y2="1000.5" stroke="#333333" stroke-opacity="0.55" stroke-width="2.2" stroke-dasharray="1.5 .5 1.2 .8 1.6 2 1.4 .6 1.8 .4 1.1 2"/>
<line x1="2873.0" y1="1004.5" x2="2893.0" y2="1004.5" stroke="#333333" stroke-opacity="0.55" stroke-width="2.2" stroke-dasharray="1.5 .5 1.2 .8 1.6 2 1.4 .6 1.8 .4 1.1 2"/>
<rect x="2927.4" y="1002.5" width="1.2" height="4" fill="#888" opacity=".7"/>
<rect x="2873.4" y="1006.5" width="1.2" height="4" fill="#888" opacity=".7"/>
<line x1="2877.0" y1="1008.5" x2="2915.0" y2="1008.5" stroke="#15157a" stroke-opacity="0.60" stroke-width="2.4" stroke-dasharray="1.7 .3 1.1 .9 1.5 2 1.3 .7 1.6 .4 1.4 .6 1.2 2"/>
<rect x="2919.4" y="1006.5" width="1.2" height="4" fill="#888" opacity=".7"/>
<line x1="2923.0" y1="1008.5" x2="3019.0" y2="1008.5" stroke="#8a1818" stroke-opacity="0.55" stroke-width="2.2" stroke-dasharray="1.5 .5 1.2 .8 1.6 2 1.4 .6 1.8 .4 1.1 2"/>
<rect x="3033.4" y="1006.5" width="1.2" height="4" fill="#888" opacity=".7"/>
<line x1="3037.0" y1="1008.5" x2="3101.0" y2="1008.5" stroke="#333333" stroke-opacity="0.55" stroke-width="2.2" stroke-dasharray="1.7 .3 1.1 .9 1.5 2 1.3 .7 1.6 .4 1.4 .6 1.2 2"/>
<line x1="2873.0" y1="1012.5" x2="2901.0" y2="1012.5" stroke="#333333" stroke-opacity="0.55" stroke-width="2.2" stroke-dasharray="1.7 .3 1.1 .9 1.5 2 1.3 .7 1.6 .4 1.4 .6 1.2 2"/>
<rect x="2939.4" y="1010.5" width="1.2" height="4" fill="#888" opacity=".7"/>
<rect x="2873.4" y="1014.5" width="1.2" height="4" fill="#888" opacity=".7"/>
<line x1="2877.0" y1="1016.5" x2="2919.0" y2="1016.5" stroke="#15157a" stroke-opacity="0.60" stroke-width="2.4" stroke-dasharray="1.5 .5 1.2 .8 1.6 2 1.4 .6 1.8 .4 1.1 2"/>
<rect x="2919.4" y="1014.5" width="1.2" height="4" fill="#888" opacity=".7"/>
<line x1="2923.0" y1="1016.5" x2="3035.0" y2="1016.5" stroke="#8a1818" stroke-opacity="0.55" stroke-width="2.2" stroke-dasharray="1.7 .3 1.1 .9 1.5 2 1.3 .7 1.6 .4 1.4 .6 1.2 2"/>
<rect x="3037.4" y="1014.5" width="1.2" height="4" fill="#888" opacity=".7"/>
<line x1="3041.0" y1="1016.5" x2="3101.0" y2="1016.5" stroke="#333333" stroke-opacity="0.55" stroke-width="2.2" stroke-dasharray="1.5 .5 1.2 .8 1.6 2 1.4 .6 1.8 .4 1.1 2"/>
<line x1="2873.0" y1="1020.5" x2="2893.0" y2="1020.5" stroke="#333333" stroke-opacity="0.55" stroke-width="2.2" stroke-dasharray="1.5 .5 1.2 .8 1.6 2 1.4 .6 1.8 .4 1.1 2"/>
<rect x="2909.4" y="1018.5" width="1.2" height="4" fill="#888" opacity=".7"/>
<rect x="2873.4" y="1022.5" width="1.2" height="4" fill="#888" opacity=".7"/>
<line x1="2877.0" y1="1024.5" x2="2919.0" y2="1024.5" stroke="#15157a" stroke-opacity="0.60" stroke-width="2.4" stroke-dasharray="1.7 .3 1.1 .9 1.5 2 1.3 .7 1.6 .4 1.4 .6 1.2 2"/>
<rect x="2919.4" y="1022.5" width="1.2" height="4" fill="#888" opacity=".7"/>
<line x1="2923.0" y1="1024.5" x2="3035.0" y2="1024.5" stroke="#8a1818" stroke-opacity="0.55" stroke-width="2.2" stroke-dasharray="1.5 .5 1.2 .8 1.6 2 1.4 .6 1.8 .4 1.1 2"/>
<rect x="3037.4" y="1022.5" width="1.2" height="4" fill="#888" opacity=".7"/>
<line x1="3041.0" y1="1024.5" x2="3101.0" y2="1024.5" stroke="#333333" stroke-opacity="0.55" stroke-width="2.2" stroke-dasharray="1.7 .3 1.1 .9 1.5 2 1.3 .7 1.6 .4 1.4 .6 1.2 2"/>
<line x1="2873.0" y1="1028.5" x2="2881.0" y2="1028.5" stroke="#333333" stroke-opacity="0.55" stroke-width="2.2" stroke-dasharray="1.7 .3 1.1 .9 1.5 2 1.3 .7 1.6 .4 1.4 .6 1.2 2"/>
<rect x="2901.4" y="1026.5" width="1.2" height="4" fill="#888" opacity=".7"/>
<rect x="2873.4" y="1030.5" width="1.2" height="4" fill="#888" opacity=".7"/>
<line x1="2877.0" y1="1032.5" x2="2913.0" y2="1032.5" stroke="#15157a" stroke-opacity="0.60" stroke-width="2.4" stroke-dasharray="1.5 .5 1.2 .8 1.6 2 1.4 .6 1.8 .4 1.1 2"/>
<rect x="2919.4" y="1030.5" width="1.2" height="4" fill="#888" opacity=".7"/>
<line x1="2925.0" y1="1032.5" x2="3029.0" y2="1032.5" stroke="#8a1818" stroke-opacity="0.55" stroke-width="2.2" stroke-dasharray="1.7 .3 1.1 .9 1.5 2 1.3 .7 1.6 .4 1.4 .6 1.2 2"/>
<rect x="3037.4" y="1030.5" width="1.2" height="4" fill="#888" opacity=".7"/>
<line x1="3041.0" y1="1032.5" x2="3101.0" y2="1032.5" stroke="#333333" stroke-opacity="0.55" stroke-width="2.2" stroke-dasharray="1.5 .5 1.2 .8 1.6 2 1.4 .6 1.8 .4 1.1 2"/>
<line x1="2873.0" y1="1036.5" x2="2883.0" y2="1036.5" stroke="#333333" stroke-opacity="0.55" stroke-width="2.2" stroke-dasharray="1.5 .5 1.2 .8 1.6 2 1.4 .6 1.8 .4 1.1 2"/>
<rect x="2929.4" y="1034.5" width="1.2" height="4" fill="#888" opacity=".7"/>
<rect x="2873.4" y="1038.5" width="1.2" height="4" fill="#888" opacity=".7"/>
<line x1="2877.0" y1="1040.5" x2="2915.0" y2="1040.5" stroke="#15157a" stroke-opacity="0.60" stroke-width="2.4" stroke-dasharray="1.7 .3 1.1 .9 1.5 2 1.3 .7 1.6 .4 1.4 .6 1.2 2"/>
<rect x="2919.4" y="1038.5" width="1.2" height="4" fill="#888" opacity=".7"/>
<line x1="2923.0" y1="1040.5" x2="3031.0" y2="1040.5" stroke="#8a1818" stroke-opacity="0.55" stroke-width="2.2" stroke-dasharray="1.5 .5 1.2 .8 1.6 2 1.4 .6 1.8 .4 1.1 2"/>
<rect x="3037.4" y="1038.5" width="1.2" height="4" fill="#888" opacity=".7"/>
<line x1="3041.0" y1="1040.5" x2="3101.0" y2="1040.5" stroke="#333333" stroke-opacity="0.55" stroke-width="2.2" stroke-dasharray="1.7 .3 1.1 .9 1.5 2 1.3 .7 1.6 .4 1.4 .6 1.2 2"/>
<line x1="2873.0" y1="1044.5" x2="2891.0" y2="1044.5" stroke="#15157a" stroke-opacity="0.60" stroke-width="2.4" stroke-dasharray="1.7 .3 1.1 .9 1.5 2 1.3 .7 1.6 .4 1.4 .6 1.2 2"/>
<rect x="2891.4" y="1042.5" width="1.2" height="4" fill="#888" opacity=".7"/>
<rect x="2873.4" y="1046.5" width="1.2" height="4" fill="#888" opacity=".7"/>
<line x1="2877.0" y1="1048.5" x2="2911.0" y2="1048.5" stroke="#15157a" stroke-opacity="0.60" stroke-width="2.4" stroke-dasharray="1.5 .5 1.2 .8 1.6 2 1.4 .6 1.8 .4 1.1 2"/>
<rect x="2919.4" y="1046.5" width="1.2" height="4" fill="#888" opacity=".7"/>
<line x1="2923.0" y1="1048.5" x2="3005.0" y2="1048.5" stroke="#8a1818" stroke-opacity="0.55" stroke-width="2.2" stroke-dasharray="1.7 .3 1.1 .9 1.5 2 1.3 .7 1.6 .4 1.4 .6 1.2 2"/>
<rect x="3037.4" y="1046.5" width="1.2" height="4" fill="#888" opacity=".7"/>
<line x1="3041.0" y1="1048.5" x2="3083.0" y2="1048.5" stroke="#333333" stroke-opacity="0.55" stroke-width="2.2" stroke-dasharray="1.5 .5 1.2 .8 1.6 2 1.4 .6 1.8 .4 1.1 2"/>
<line x1="2873.0" y1="1052.5" x2="2891.0" y2="1052.5" stroke="#333333" stroke-opacity="0.55" stroke-width="2.2" stroke-dasharray="1.5 .5 1.2 .8 1.6 2 1.4 .6 1.8 .4 1.1 2"/>
<rect x="2951.4" y="1050.5" width="1.2" height="4" fill="#888" opacity=".7"/>
<line x1="2873.0" y1="1060.5" x2="2881.0" y2="1060.5" stroke="#333333" stroke-opacity="0.55" stroke-width="2.2" stroke-dasharray="1.7 .3 1.1 .9 1.5 2 1.3 .7 1.6 .4 1.4 .6 1.2 2"/>
<line x1="2873.0" y1="1068.5" x2="2949.0" y2="1068.5" stroke="#8a1010" stroke-opacity="0.75" stroke-width="2.4" stroke-dasharray="1.5 .5 1.2 .8 1.6 2 1.4 .6 1.8 .4 1.1 2"/>
<line x1="2873.0" y1="1072.5" x2="3001.0" y2="1072.5" stroke="#333333" stroke-opacity="0.55" stroke-width="2.2" stroke-dasharray="1.2 .8 1.7 .3 1.4 2 1.6 .4 1.2 .8 1.5 2"/>
<rect x="2873.0" y="1079.3" width="1.6" height="2.4" fill="#2060b0" opacity=".8"/>
<line x1="2881.0" y1="1080.5" x2="2917.0" y2="1080.5" stroke="#15157a" stroke-opacity="0.60" stroke-width="2.4" stroke-dasharray="1.5 .5 1.2 .8 1.6 2 1.4 .6 1.8 .4 1.1 2"/>
<line x1="2919.0" y1="1080.5" x2="2989.0" y2="1080.5" stroke="#8a1818" stroke-opacity="0.55" stroke-width="2.2" stroke-dasharray="1.2 .8 1.7 .3 1.4 2 1.6 .4 1.2 .8 1.5 2"/>
<line x1="2989.0" y1="1080.5" x2="3101.0" y2="1080.5" stroke="#333333" stroke-opacity="0.55" stroke-width="2.2" stroke-dasharray="1.7 .3 1.1 .9 1.5 2 1.3 .7 1.6 .4 1.4 .6 1.2 2"/>
<rect x="2873.0" y="1083.3" width="1.6" height="2.4" fill="#2060b0" opacity=".8"/>
<line x1="2881.0" y1="1084.5" x2="2917.0" y2="1084.5" stroke="#15157a" stroke-opacity="0.60" stroke-width="2.4" stroke-dasharray="1.2 .8 1.7 .3 1.4 2 1.6 .4 1.2 .8 1.5 2"/>
<line x1="2919.0" y1="1084.5" x2="3015.0" y2="1084.5" stroke="#8a1818" stroke-opacity="0.55" stroke-width="2.2" stroke-dasharray="1.7 .3 1.1 .9 1.5 2 1.3 .7 1.6 .4 1.4 .6 1.2 2"/>
<line x1="3015.0" y1="1084.5" x2="3095.0" y2="1084.5" stroke="#333333" stroke-opacity="0.55" stroke-width="2.2" stroke-dasharray="1.4 .6 1.6 .4 1.2 2 1.5 .5 1.3 .7 1.7 2"/>
<rect x="2873.0" y="1087.3" width="1.6" height="2.4" fill="#2060b0" opacity=".8"/>
<line x1="2881.0" y1="1088.5" x2="2911.0" y2="1088.5" stroke="#15157a" stroke-opacity="0.60" stroke-width="2.4" stroke-dasharray="1.7 .3 1.1 .9 1.5 2 1.3 .7 1.6 .4 1.4 .6 1.2 2"/>
<line x1="2911.0" y1="1088.5" x2="2963.0" y2="1088.5" stroke="#8a1818" stroke-opacity="0.55" stroke-width="2.2" stroke-dasharray="1.4 .6 1.6 .4 1.2 2 1.5 .5 1.3 .7 1.7 2"/>
<line x1="2963.0" y1="1088.5" x2="3101.0" y2="1088.5" stroke="#333333" stroke-opacity="0.55" stroke-width="2.2" stroke-dasharray="1.5 .5 1.2 .8 1.6 2 1.4 .6 1.8 .4 1.1 2"/>
<rect x="2873.0" y="1091.3" width="1.6" height="2.4" fill="#2060b0" opacity=".8"/>
<line x1="2881.0" y1="1092.5" x2="2917.0" y2="1092.5" stroke="#15157a" stroke-opacity="0.60" stroke-width="2.4" stroke-dasharray="1.4 .6 1.6 .4 1.2 2 1.5 .5 1.3 .7 1.7 2"/>
<line x1="2919.0" y1="1092.5" x2="2985.0" y2="1092.5" stroke="#8a1818" stroke-opacity="0.55" stroke-width="2.2" stroke-dasharray="1.5 .5 1.2 .8 1.6 2 1.4 .6 1.8 .4 1.1 2"/>
<line x1="2985.0" y1="1092.5" x2="3101.0" y2="1092.5" stroke="#333333" stroke-opacity="0.55" stroke-width="2.2" stroke-dasharray="1.2 .8 1.7 .3 1.4 2 1.6 .4 1.2 .8 1.5 2"/>
<line x1="2873.0" y1="1096.5" x2="2963.0" y2="1096.5" stroke="#8a1010" stroke-opacity="0.75" stroke-width="2.4" stroke-dasharray="1.4 .6 1.6 .4 1.2 2 1.5 .5 1.3 .7 1.7 2"/>
<rect x="2873.0" y="1099.3" width="1.6" height="2.4" fill="#2060b0" opacity=".8"/>
<line x1="2877.0" y1="1100.5" x2="2901.0" y2="1100.5" stroke="#333333" stroke-opacity="0.55" stroke-width="2.2" stroke-dasharray="1.2 .8 1.7 .3 1.4 2 1.6 .4 1.2 .8 1.5 2"/>
<line x1="2901.0" y1="1100.5" x2="2955.0" y2="1100.5" stroke="#8a1818" stroke-opacity="0.55" stroke-width="2.2" stroke-dasharray="1.7 .3 1.1 .9 1.5 2 1.3 .7 1.6 .4 1.4 .6 1.2 2"/>
<line x1="2873.0" y1="1108.5" x2="3095.0" y2="1108.5" stroke="#333333" stroke-opacity="0.55" stroke-width="2.2" stroke-dasharray="1.7 .3 1.1 .9 1.5 2 1.3 .7 1.6 .4 1.4 .6 1.2 2"/>
<rect x="2873.4" y="1114.5" width="1.2" height="4" fill="#888" opacity=".7"/>
<line x1="2877.0" y1="1116.5" x2="2915.0" y2="1116.5" stroke="#333333" stroke-opacity="0.55" stroke-width="2.2" stroke-dasharray="1.2 .8 1.7 .3 1.4 2 1.6 .4 1.2 .8 1.5 2"/>
<rect x="2919.4" y="1114.5" width="1.2" height="4" fill="#888" opacity=".7"/>
<line x1="2923.0" y1="1116.5" x2="2955.0" y2="1116.5" stroke="#333333" stroke-opacity="0.55" stroke-width="2.2" stroke-dasharray="1.4 .6 1.6 .4 1.2 2 1.5 .5 1.3 .7 1.7 2"/>
<rect x="3005.4" y="1114.5" width="1.2" height="4" fill="#888" opacity=".7"/>
<line x1="3009.0" y1="1116.5" x2="3027.0" y2="1116.5" stroke="#333333" stroke-opacity="0.55" stroke-width="2.2" stroke-dasharray="1.2 .8 1.7 .3 1.4 2 1.6 .4 1.2 .8 1.5 2"/>
<rect x="2873.4" y="1118.5" width="1.2" height="4" fill="#888" opacity=".7"/>
<rect x="2877.0" y="1120.2" width="40.0" height="1.4" fill="#999" opacity=".8"/>
<rect x="2919.4" y="1118.5" width="1.2" height="4" fill="#888" opacity=".7"/>
<rect x="2923.0" y="1120.2" width="78.0" height="1.4" fill="#999" opacity=".8"/>
<rect x="3005.4" y="1118.5" width="1.2" height="4" fill="#888" opacity=".7"/>
<rect x="3009.0" y="1120.2" width="92.0" height="1.4" fill="#999" opacity=".8"/>
<rect x="2873.4" y="1122.5" width="1.2" height="4" fill="#888" opacity=".7"/>
<line x1="2877.0" y1="1124.5" x2="2913.0" y2="1124.5" stroke="#15157a" stroke-opacity="0.60" stroke-width="2.4" stroke-dasharray="1.4 .6 1.6 .4 1.2 2 1.5 .5 1.3 .7 1.7 2"/>
<rect x="2919.4" y="1122.5" width="1.2" height="4" fill="#888" opacity=".7"/>
<line x1="2923.0" y1="1124.5" x2="2985.0" y2="1124.5" stroke="#8a1818" stroke-opacity="0.55" stroke-width="2.2" stroke-dasharray="1.2 .8 1.7 .3 1.4 2 1.6 .4 1.2 .8 1.5 2"/>
<rect x="3005.4" y="1122.5" width="1.2" height="4" fill="#888" opacity=".7"/>
<line x1="3009.0" y1="1124.5" x2="3101.0" y2="1124.5" stroke="#333333" stroke-opacity="0.55" stroke-width="2.2" stroke-dasharray="1.4 .6 1.6 .4 1.2 2 1.5 .5 1.3 .7 1.7 2"/>
<line x1="2873.0" y1="1128.5" x2="2913.0" y2="1128.5" stroke="#333333" stroke-opacity="0.55" stroke-width="2.2" stroke-dasharray="1.4 .6 1.6 .4 1.2 2 1.5 .5 1.3 .7 1.7 2"/>
<rect x="2913.4" y="1126.5" width="1.2" height="4" fill="#888" opacity=".7"/>
<rect x="2873.4" y="1130.5" width="1.2" height="4" fill="#888" opacity=".7"/>
<line x1="2877.0" y1="1132.5" x2="2911.0" y2="1132.5" stroke="#15157a" stroke-opacity="0.60" stroke-width="2.4" stroke-dasharray="1.2 .8 1.7 .3 1.4 2 1.6 .4 1.2 .8 1.5 2"/>
<rect x="2921.4" y="1130.5" width="1.2" height="4" fill="#888" opacity=".7"/>
<line x1="2923.0" y1="1132.5" x2="2997.0" y2="1132.5" stroke="#8a1818" stroke-opacity="0.55" stroke-width="2.2" stroke-dasharray="1.4 .6 1.6 .4 1.2 2 1.5 .5 1.3 .7 1.7 2"/>
<rect x="3007.4" y="1130.5" width="1.2" height="4" fill="#888" opacity=".7"/>
<line x1="3011.0" y1="1132.5" x2="3101.0" y2="1132.5" stroke="#333333" stroke-opacity="0.55" stroke-width="2.2" stroke-dasharray="1.2 .8 1.7 .3 1.4 2 1.6 .4 1.2 .8 1.5 2"/>
<rect x="2873.4" y="1134.5" width="1.2" height="4" fill="#888" opacity=".7"/>
<line x1="2877.0" y1="1136.5" x2="2907.0" y2="1136.5" stroke="#15157a" stroke-opacity="0.60" stroke-width="2.4" stroke-dasharray="1.7 .3 1.1 .9 1.5 2 1.3 .7 1.6 .4 1.4 .6 1.2 2"/>
<rect x="2921.4" y="1134.5" width="1.2" height="4" fill="#888" opacity=".7"/>
<line x1="2923.0" y1="1136.5" x2="2975.0" y2="1136.5" stroke="#8a1818" stroke-opacity="0.55" stroke-width="2.2" stroke-dasharray="1.5 .5 1.2 .8 1.6 2 1.4 .6 1.8 .4 1.1 2"/>
<rect x="3007.4" y="1134.5" width="1.2" height="4" fill="#888" opacity=".7"/>
<line x1="3011.0" y1="1136.5" x2="3101.0" y2="1136.5" stroke="#333333" stroke-opacity="0.55" stroke-width="2.2" stroke-dasharray="1.7 .3 1.1 .9 1.5 2 1.3 .7 1.6 .4 1.4 .6 1.2 2"/>
<line x1="2873.0" y1="1144.5" x2="2881.0" y2="1144.5" stroke="#333333" stroke-opacity="0.55" stroke-width="2.2" stroke-dasharray="1.4 .6 1.6 .4 1.2 2 1.5 .5 1.3 .7 1.7 2"/>
<line x1="2873.0" y1="1152.5" x2="2949.0" y2="1152.5" stroke="#8a1010" stroke-opacity="0.75" stroke-width="2.4" stroke-dasharray="1.2 .8 1.7 .3 1.4 2 1.6 .4 1.2 .8 1.5 2"/>
<rect x="2873.0" y="1155.3" width="1.6" height="2.4" fill="#2060b0" opacity=".8"/>
<line x1="2877.0" y1="1156.5" x2="2901.0" y2="1156.5" stroke="#333333" stroke-opacity="0.55" stroke-width="2.2" stroke-dasharray="1.4 .6 1.6 .4 1.2 2 1.5 .5 1.3 .7 1.7 2"/>
<line x1="2901.0" y1="1156.5" x2="2963.0" y2="1156.5" stroke="#8a1818" stroke-opacity="0.55" stroke-width="2.2" stroke-dasharray="1.5 .5 1.2 .8 1.6 2 1.4 .6 1.8 .4 1.1 2"/>
<line x1="2873.0" y1="1164.5" x2="3087.0" y2="1164.5" stroke="#333333" stroke-opacity="0.55" stroke-width="2.2" stroke-dasharray="1.5 .5 1.2 .8 1.6 2 1.4 .6 1.8 .4 1.1 2"/>
<rect x="2873.4" y="1170.5" width="1.2" height="4" fill="#888" opacity=".7"/>
<line x1="2877.0" y1="1172.5" x2="2915.0" y2="1172.5" stroke="#333333" stroke-opacity="0.55" stroke-width="2.2" stroke-dasharray="1.4 .6 1.6 .4 1.2 2 1.5 .5 1.3 .7 1.7 2"/>
<rect x="2919.4" y="1170.5" width="1.2" height="4" fill="#888" opacity=".7"/>
<line x1="2923.0" y1="1172.5" x2="2955.0" y2="1172.5" stroke="#333333" stroke-opacity="0.55" stroke-width="2.2" stroke-dasharray="1.2 .8 1.7 .3 1.4 2 1.6 .4 1.2 .8 1.5 2"/>
<rect x="3033.4" y="1170.5" width="1.2" height="4" fill="#888" opacity=".7"/>
<line x1="2873.0" y1="1176.5" x2="2891.0" y2="1176.5" stroke="#333333" stroke-opacity="0.55" stroke-width="2.2" stroke-dasharray="1.4 .6 1.6 .4 1.2 2 1.5 .5 1.3 .7 1.7 2"/>
<rect x="3019.4" y="1174.5" width="1.2" height="4" fill="#888" opacity=".7"/>
<rect x="2873.4" y="1178.5" width="1.2" height="4" fill="#888" opacity=".7"/>
<rect x="2877.0" y="1180.2" width="40.0" height="1.4" fill="#999" opacity=".8"/>
<rect x="2919.4" y="1178.5" width="1.2" height="4" fill="#888" opacity=".7"/>
<rect x="2923.0" y="1180.2" width="108.0" height="1.4" fill="#999" opacity=".8"/>
<rect x="3033.4" y="1178.5" width="1.2" height="4" fill="#888" opacity=".7"/>
<rect x="2873.0" y="1184.2" width="144.0" height="1.4" fill="#999" opacity=".8"/>
<rect x="3019.4" y="1182.5" width="1.2" height="4" fill="#888" opacity=".7"/>
<rect x="2873.4" y="1186.5" width="1.2" height="4" fill="#888" opacity=".7"/>
<line x1="2877.0" y1="1188.5" x2="2909.0" y2="1188.5" stroke="#15157a" stroke-opacity="0.60" stroke-width="2.4" stroke-dasharray="1.4 .6 1.6 .4 1.2 2 1.5 .5 1.3 .7 1.7 2"/>
<rect x="2919.4" y="1186.5" width="1.2" height="4" fill="#888" opacity=".7"/>
<line x1="2923.0" y1="1188.5" x2="3029.0" y2="1188.5" stroke="#8a1818" stroke-opacity="0.55" stroke-width="2.2" stroke-dasharray="1.2 .8 1.7 .3 1.4 2 1.6 .4 1.2 .8 1.5 2"/>
<rect x="3033.4" y="1186.5" width="1.2" height="4" fill="#888" opacity=".7"/>
<line x1="3037.0" y1="1188.5" x2="3101.0" y2="1188.5" stroke="#333333" stroke-opacity="0.55" stroke-width="2.2" stroke-dasharray="1.4 .6 1.6 .4 1.2 2 1.5 .5 1.3 .7 1.7 2"/>
<line x1="2873.0" y1="1192.5" x2="2895.0" y2="1192.5" stroke="#333333" stroke-opacity="0.55" stroke-width="2.2" stroke-dasharray="1.4 .6 1.6 .4 1.2 2 1.5 .5 1.3 .7 1.7 2"/>
<rect x="2899.4" y="1190.5" width="1.2" height="4" fill="#888" opacity=".7"/>
<rect x="2873.4" y="1194.5" width="1.2" height="4" fill="#888" opacity=".7"/>
<line x1="2877.0" y1="1196.5" x2="2919.0" y2="1196.5" stroke="#15157a" stroke-opacity="0.60" stroke-width="2.4" stroke-dasharray="1.2 .8 1.7 .3 1.4 2 1.6 .4 1.2 .8 1.5 2"/>
<rect x="2919.4" y="1194.5" width="1.2" height="4" fill="#888" opacity=".7"/>
<line x1="2923.0" y1="1196.5" x2="2961.0" y2="1196.5" stroke="#8a1818" stroke-opacity="0.55" stroke-width="2.2" stroke-dasharray="1.4 .6 1.6 .4 1.2 2 1.5 .5 1.3 .7 1.7 2"/>
<line x1="2961.0" y1="1196.5" x2="2995.0" y2="1196.5" stroke="#333333" stroke-opacity="0.55" stroke-width="2.2" stroke-dasharray="1.5 .5 1.2 .8 1.6 2 1.4 .6 1.8 .4 1.1 2"/>
<rect x="3033.4" y="1194.5" width="1.2" height="4" fill="#888" opacity=".7"/>
<line x1="3037.0" y1="1196.5" x2="3101.0" y2="1196.5" stroke="#333333" stroke-opacity="0.55" stroke-width="2.2" stroke-dasharray="1.7 .3 1.1 .9 1.5 2 1.3 .7 1.6 .4 1.4 .6 1.2 2"/>
<line x1="2873.0" y1="1200.5" x2="2901.0" y2="1200.5" stroke="#333333" stroke-opacity="0.55" stroke-width="2.2" stroke-dasharray="1.2 .8 1.7 .3 1.4 2 1.6 .4 1.2 .8 1.5 2"/>
<rect x="2905.4" y="1198.5" width="1.2" height="4" fill="#888" opacity=".7"/>
<rect x="2873.4" y="1202.5" width="1.2" height="4" fill="#888" opacity=".7"/>
<line x1="2877.0" y1="1204.5" x2="2911.0" y2="1204.5" stroke="#15157a" stroke-opacity="0.60" stroke-width="2.4" stroke-dasharray="1.4 .6 1.6 .4 1.2 2 1.5 .5 1.3 .7 1.7 2"/>
<rect x="2919.4" y="1202.5" width="1.2" height="4" fill="#888" opacity=".7"/>
<line x1="2923.0" y1="1204.5" x2="2961.0" y2="1204.5" stroke="#8a1818" stroke-opacity="0.55" stroke-width="2.2" stroke-dasharray="1.2 .8 1.7 .3 1.4 2 1.6 .4 1.2 .8 1.5 2"/>
<line x1="2961.0" y1="1204.5" x2="2993.0" y2="1204.5" stroke="#333333" stroke-opacity="0.55" stroke-width="2.2" stroke-dasharray="1.7 .3 1.1 .9 1.5 2 1.3 .7 1.6 .4 1.4 .6 1.2 2"/>
<rect x="3033.4" y="1202.5" width="1.2" height="4" fill="#888" opacity=".7"/>
<line x1="3037.0" y1="1204.5" x2="3101.0" y2="1204.5" stroke="#333333" stroke-opacity="0.55" stroke-width="2.2" stroke-dasharray="1.5 .5 1.2 .8 1.6 2 1.4 .6 1.8 .4 1.1 2"/>
<line x1="2873.0" y1="1208.5" x2="2891.0" y2="1208.5" stroke="#333333" stroke-opacity="0.55" stroke-width="2.2" stroke-dasharray="1.4 .6 1.6 .4 1.2 2 1.5 .5 1.3 .7 1.7 2"/>
<rect x="2943.4" y="1206.5" width="1.2" height="4" fill="#888" opacity=".7"/>
<rect x="2873.4" y="1210.5" width="1.2" height="4" fill="#888" opacity=".7"/>
<line x1="2877.0" y1="1212.5" x2="2907.0" y2="1212.5" stroke="#15157a" stroke-opacity="0.60" stroke-width="2.4" stroke-dasharray="1.2 .8 1.7 .3 1.4 2 1.6 .4 1.2 .8 1.5 2"/>
<rect x="2919.4" y="1210.5" width="1.2" height="4" fill="#888" opacity=".7"/>
<line x1="2923.0" y1="1212.5" x2="2983.0" y2="1212.5" stroke="#8a1818" stroke-opacity="0.55" stroke-width="2.2" stroke-dasharray="1.4 .6 1.6 .4 1.2 2 1.5 .5 1.3 .7 1.7 2"/>
<rect x="3033.4" y="1210.5" width="1.2" height="4" fill="#888" opacity=".7"/>
<line x1="3037.0" y1="1212.5" x2="3101.0" y2="1212.5" stroke="#333333" stroke-opacity="0.55" stroke-width="2.2" stroke-dasharray="1.2 .8 1.7 .3 1.4 2 1.6 .4 1.2 .8 1.5 2"/>
<line x1="2873.0" y1="1216.5" x2="2893.0" y2="1216.5" stroke="#333333" stroke-opacity="0.55" stroke-width="2.2" stroke-dasharray="1.2 .8 1.7 .3 1.4 2 1.6 .4 1.2 .8 1.5 2"/>
<rect x="2903.4" y="1214.5" width="1.2" height="4" fill="#888" opacity=".7"/>
<line x1="2873.0" y1="1224.5" x2="2881.0" y2="1224.5" stroke="#333333" stroke-opacity="0.55" stroke-width="2.2" stroke-dasharray="1.4 .6 1.6 .4 1.2 2 1.5 .5 1.3 .7 1.7 2"/>
<line x1="2873.0" y1="1232.5" x2="2951.0" y2="1232.5" stroke="#8a1010" stroke-opacity="0.75" stroke-width="2.4" stroke-dasharray="1.2 .8 1.7 .3 1.4 2 1.6 .4 1.2 .8 1.5 2"/>
<rect x="2873.0" y="1235.3" width="1.6" height="2.4" fill="#2060b0" opacity=".8"/>
<line x1="2877.0" y1="1236.5" x2="2901.0" y2="1236.5" stroke="#333333" stroke-opacity="0.55" stroke-width="2.2" stroke-dasharray="1.4 .6 1.6 .4 1.2 2 1.5 .5 1.3 .7 1.7 2"/>
<line x1="2901.0" y1="1236.5" x2="2965.0" y2="1236.5" stroke="#8a1818" stroke-opacity="0.55" stroke-width="2.2" stroke-dasharray="1.5 .5 1.2 .8 1.6 2 1.4 .6 1.8 .4 1.1 2"/>
<line x1="2873.0" y1="1244.5" x2="3025.0" y2="1244.5" stroke="#333333" stroke-opacity="0.55" stroke-width="2.2" stroke-dasharray="1.5 .5 1.2 .8 1.6 2 1.4 .6 1.8 .4 1.1 2"/>
<rect x="2873.4" y="1250.5" width="1.2" height="4" fill="#888" opacity=".7"/>
<line x1="2877.0" y1="1252.5" x2="2915.0" y2="1252.5" stroke="#333333" stroke-opacity="0.55" stroke-width="2.2" stroke-dasharray="1.4 .6 1.6 .4 1.2 2 1.5 .5 1.3 .7 1.7 2"/>
<rect x="2919.4" y="1250.5" width="1.2" height="4" fill="#888" opacity=".7"/>
<line x1="2923.0" y1="1252.5" x2="2955.0" y2="1252.5" stroke="#333333" stroke-opacity="0.55" stroke-width="2.2" stroke-dasharray="1.2 .8 1.7 .3 1.4 2 1.6 .4 1.2 .8 1.5 2"/>
<rect x="3033.4" y="1250.5" width="1.2" height="4" fill="#888" opacity=".7"/>
<line x1="2873.0" y1="1256.5" x2="2891.0" y2="1256.5" stroke="#333333" stroke-opacity="0.55" stroke-width="2.2" stroke-dasharray="1.4 .6 1.6 .4 1.2 2 1.5 .5 1.3 .7 1.7 2"/>
<rect x="3019.4" y="1254.5" width="1.2" height="4" fill="#888" opacity=".7"/>
<rect x="2873.4" y="1258.5" width="1.2" height="4" fill="#888" opacity=".7"/>
<rect x="2877.0" y="1260.2" width="40.0" height="1.4" fill="#999" opacity=".8"/>
<rect x="2919.4" y="1258.5" width="1.2" height="4" fill="#888" opacity=".7"/>
<rect x="2923.0" y="1260.2" width="108.0" height="1.4" fill="#999" opacity=".8"/>
<rect x="3033.4" y="1258.5" width="1.2" height="4" fill="#888" opacity=".7"/>
<rect x="2873.0" y="1264.2" width="144.0" height="1.4" fill="#999" opacity=".8"/>
<rect x="3019.4" y="1262.5" width="1.2" height="4" fill="#888" opacity=".7"/>
<rect x="2873.4" y="1266.5" width="1.2" height="4" fill="#888" opacity=".7"/>
<line x1="2877.0" y1="1268.5" x2="2909.0" y2="1268.5" stroke="#15157a" stroke-opacity="0.60" stroke-width="2.4" stroke-dasharray="1.4 .6 1.6 .4 1.2 2 1.5 .5 1.3 .7 1.7 2"/>
<rect x="2919.4" y="1266.5" width="1.2" height="4" fill="#888" opacity=".7"/>
<line x1="2923.0" y1="1268.5" x2="3013.0" y2="1268.5" stroke="#8a1818" stroke-opacity="0.55" stroke-width="2.2" stroke-dasharray="1.2 .8 1.7 .3 1.4 2 1.6 .4 1.2 .8 1.5 2"/>
<rect x="3033.4" y="1266.5" width="1.2" height="4" fill="#888" opacity=".7"/>
<line x1="3037.0" y1="1268.5" x2="3101.0" y2="1268.5" stroke="#333333" stroke-opacity="0.55" stroke-width="2.2" stroke-dasharray="1.4 .6 1.6 .4 1.2 2 1.5 .5 1.3 .7 1.7 2"/>
<line x1="2873.0" y1="1272.5" x2="2905.0" y2="1272.5" stroke="#333333" stroke-opacity="0.55" stroke-width="2.2" stroke-dasharray="1.4 .6 1.6 .4 1.2 2 1.5 .5 1.3 .7 1.7 2"/>
<rect x="2905.4" y="1270.5" width="1.2" height="4" fill="#888" opacity=".7"/>
<rect x="2873.4" y="1274.5" width="1.2" height="4" fill="#888" opacity=".7"/>
<line x1="2877.0" y1="1276.5" x2="2915.0" y2="1276.5" stroke="#15157a" stroke-opacity="0.60" stroke-width="2.4" stroke-dasharray="1.2 .8 1.7 .3 1.4 2 1.6 .4 1.2 .8 1.5 2"/>
<rect x="2919.4" y="1274.5" width="1.2" height="4" fill="#888" opacity=".7"/>
<line x1="2923.0" y1="1276.5" x2="3013.0" y2="1276.5" stroke="#8a1818" stroke-opacity="0.55" stroke-width="2.2" stroke-dasharray="1.4 .6 1.6 .4 1.2 2 1.5 .5 1.3 .7 1.7 2"/>
<rect x="3033.4" y="1274.5" width="1.2" height="4" fill="#888" opacity=".7"/>
<line x1="3037.0" y1="1276.5" x2="3101.0" y2="1276.5" stroke="#333333" stroke-opacity="0.55" stroke-width="2.2" stroke-dasharray="1.2 .8 1.7 .3 1.4 2 1.6 .4 1.2 .8 1.5 2"/>
<line x1="2873.0" y1="1280.5" x2="2891.0" y2="1280.5" stroke="#333333" stroke-opacity="0.55" stroke-width="2.2" stroke-dasharray="1.2 .8 1.7 .3 1.4 2 1.6 .4 1.2 .8 1.5 2"/>
<rect x="2925.4" y="1278.5" width="1.2" height="4" fill="#888" opacity=".7"/>
<rect x="2873.4" y="1282.5" width="1.2" height="4" fill="#888" opacity=".7"/>
<line x1="2877.0" y1="1284.5" x2="2915.0" y2="1284.5" stroke="#15157a" stroke-opacity="0.60" stroke-width="2.4" stroke-dasharray="1.4 .6 1.6 .4 1.2 2 1.5 .5 1.3 .7 1.7 2"/>
<rect x="2919.4" y="1282.5" width="1.2" height="4" fill="#888" opacity=".7"/>
<line x1="2923.0" y1="1284.5" x2="2979.0" y2="1284.5" stroke="#8a1818" stroke-opacity="0.55" stroke-width="2.2" stroke-dasharray="1.2 .8 1.7 .3 1.4 2 1.6 .4 1.2 .8 1.5 2"/>
<rect x="3033.4" y="1282.5" width="1.2" height="4" fill="#888" opacity=".7"/>
<line x1="3037.0" y1="1284.5" x2="3101.0" y2="1284.5" stroke="#333333" stroke-opacity="0.55" stroke-width="2.2" stroke-dasharray="1.4 .6 1.6 .4 1.2 2 1.5 .5 1.3 .7 1.7 2"/>
<line x1="2873.0" y1="1288.5" x2="2891.0" y2="1288.5" stroke="#333333" stroke-opacity="0.55" stroke-width="2.2" stroke-dasharray="1.4 .6 1.6 .4 1.2 2 1.5 .5 1.3 .7 1.7 2"/>
<rect x="2919.4" y="1286.5" width="1.2" height="4" fill="#888" opacity=".7"/>
<rect x="2873.4" y="1290.5" width="1.2" height="4" fill="#888" opacity=".7"/>
<line x1="2877.0" y1="1292.5" x2="2903.0" y2="1292.5" stroke="#15157a" stroke-opacity="0.60" stroke-width="2.4" stroke-dasharray="1.2 .8 1.7 .3 1.4 2 1.6 .4 1.2 .8 1.5 2"/>
<rect x="2919.4" y="1290.5" width="1.2" height="4" fill="#888" opacity=".7"/>
<line x1="2923.0" y1="1292.5" x2="2969.0" y2="1292.5" stroke="#8a1818" stroke-opacity="0.55" stroke-width="2.2" stroke-dasharray="1.4 .6 1.6 .4 1.2 2 1.5 .5 1.3 .7 1.7 2"/>
<line x1="2969.0" y1="1292.5" x2="2987.0" y2="1292.5" stroke="#333333" stroke-opacity="0.55" stroke-width="2.2" stroke-dasharray="1.5 .5 1.2 .8 1.6 2 1.4 .6 1.8 .4 1.1 2"/>
<rect x="3033.4" y="1290.5" width="1.2" height="4" fill="#888" opacity=".7"/>
<line x1="3037.0" y1="1292.5" x2="3101.0" y2="1292.5" stroke="#333333" stroke-opacity="0.55" stroke-width="2.2" stroke-dasharray="1.7 .3 1.1 .9 1.5 2 1.3 .7 1.6 .4 1.4 .6 1.2 2"/>
<line x1="2873.0" y1="1296.5" x2="2901.0" y2="1296.5" stroke="#333333" stroke-opacity="0.55" stroke-width="2.2" stroke-dasharray="1.2 .8 1.7 .3 1.4 2 1.6 .4 1.2 .8 1.5 2"/>
<rect x="2903.4" y="1294.5" width="1.2" height="4" fill="#888" opacity=".7"/>
<line x1="2873.0" y1="1304.5" x2="2881.0" y2="1304.5" stroke="#333333" stroke-opacity="0.55" stroke-width="2.2" stroke-dasharray="1.4 .6 1.6 .4 1.2 2 1.5 .5 1.3 .7 1.7 2"/>
<rect x="3102" y="283" width="1.5" height="1637" fill="#ececec"/>
<rect x="3103" y="1497" width="32" height="208" fill="#b3b3b3"/>
<rect x="3103" y="319" width="32" height="3.6" fill="#444"/></svg>
</div></div>
<svg class="abs" style="left:0;top:0;will-change:transform" width="3248" height="2122"><path d="M320.8 815 L321 914 C320 960 314 990 314.5 1010 C315 1030 319 1044 326 1054 C333 1066 342 1071 360 1072.5 C380 1073.5 400 1070 430 1069 C470 1068 500 1068.5 519 1068.5 L523.5 1065" fill="none" stroke="#d0000f" stroke-width="7.0" stroke-linecap="round" stroke-linejoin="round"/><path d="M571.6 1084.5 C540 1084 520 1083 500 1082.5 C470 1081 440 1081 410 1079.5 C390 1079 372 1079.5 357 1083 C343 1088 330 1098 318 1107 C310 1114 305 1121 303.5 1129 C302 1137 302.3 1147 302.3 1160 L302.3 1296 C301 1318 297 1345 296 1372 C295 1390 295 1405 294.8 1417" fill="none" stroke="#d0000f" stroke-width="7.0" stroke-linecap="round" stroke-linejoin="round"/><path d="M821 280 C850 276 880 273 911.8 270.4 C920 269 925 266 933 264.5 C950 263 965 265.5 975 265.5 C990 265 1000 263 1017.6 262.8 C1030 262.6 1040 264 1050 264.5 C1070 266 1085 269 1095 270.5 C1108 272.5 1116 273.5 1121 272.5 C1126 270 1129 266 1131.5 262.5" fill="none" stroke="#d0000f" stroke-width="7.0" stroke-linecap="round" stroke-linejoin="round"/></svg>
</body></html>
